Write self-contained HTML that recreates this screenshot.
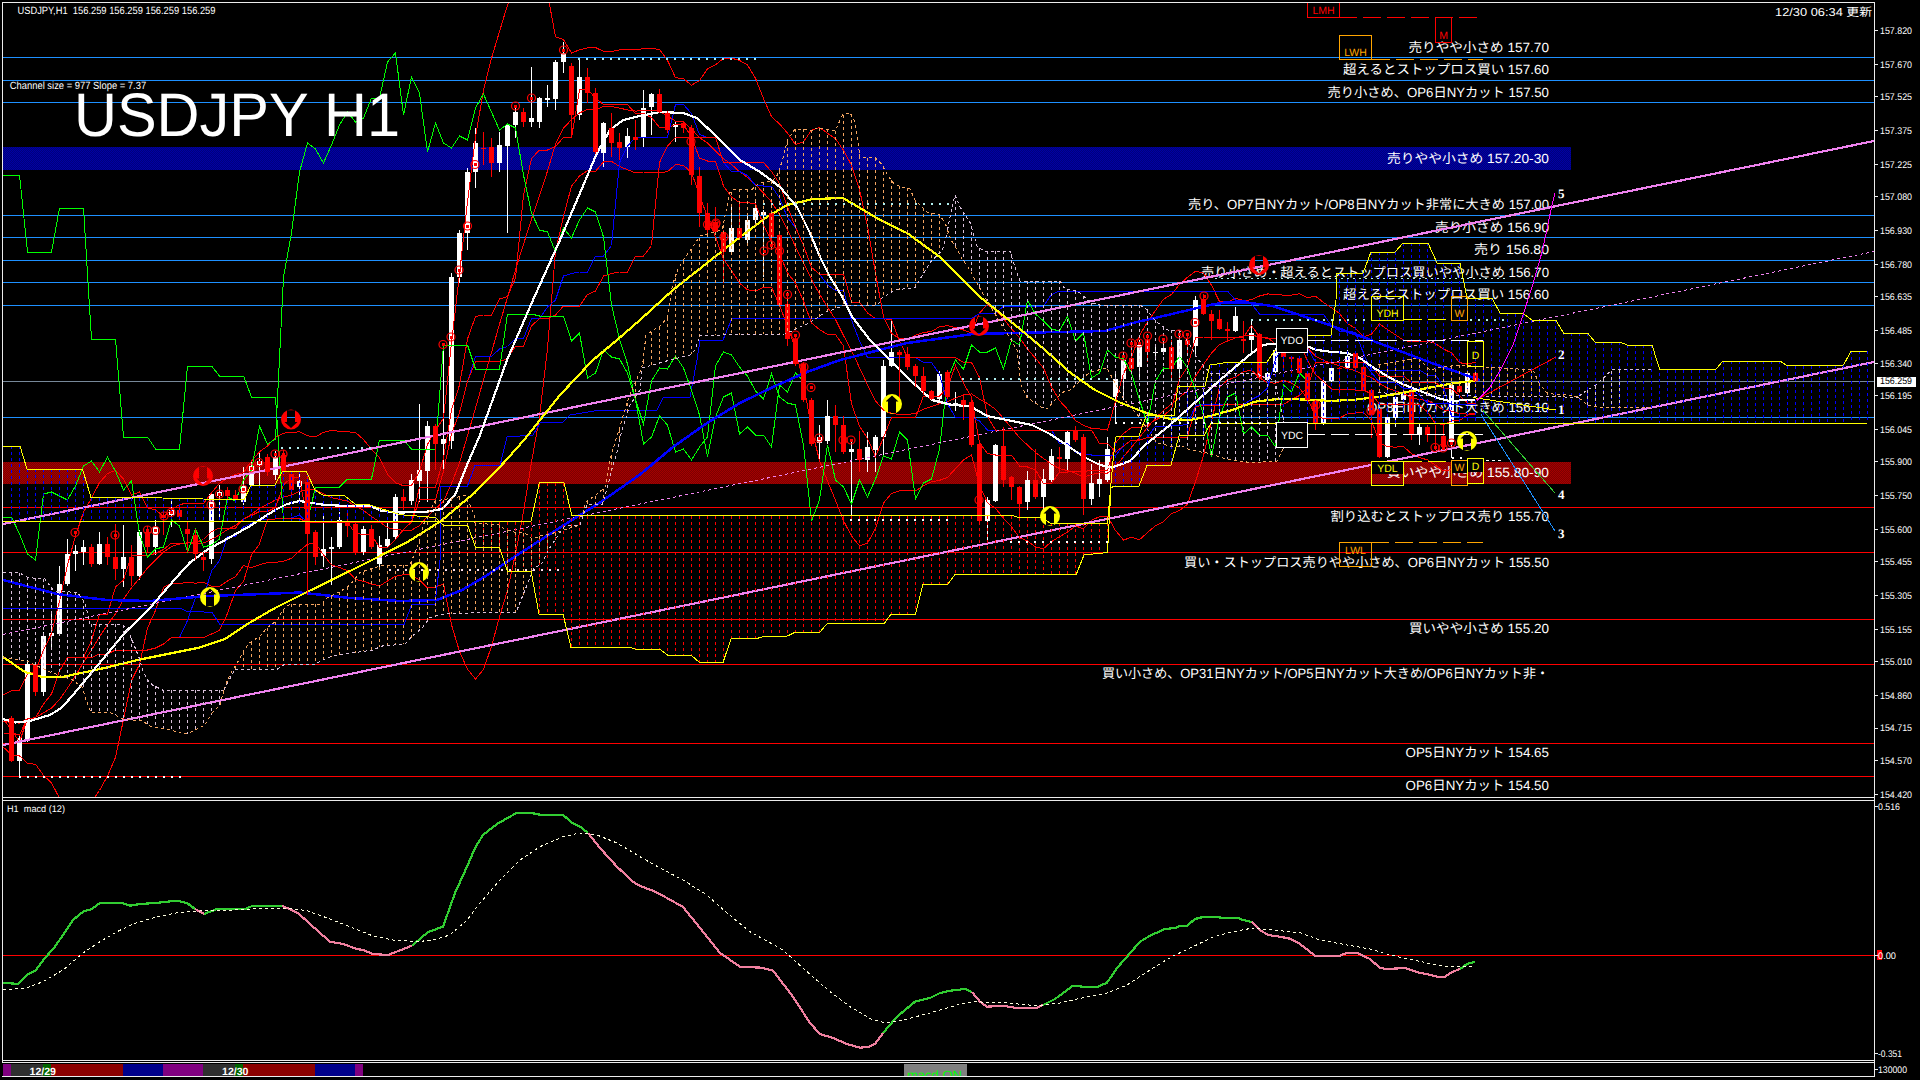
<!DOCTYPE html>
<html lang="ja"><head><meta charset="utf-8"><title>USDJPY H1</title>
<style>html,body{margin:0;padding:0;background:#000;overflow:hidden}svg{display:block}text{white-space:pre}</style></head>
<body>
<svg width="1920" height="1080" viewBox="0 0 1920 1080" shape-rendering="crispEdges" text-rendering="geometricPrecision">
<defs>
<pattern id="pb" width="2" height="2" patternUnits="userSpaceOnUse"><rect width="2" height="2" fill="#00007c"/><rect width="1" height="1" fill="#0000a4"/><rect x="1" y="1" width="1" height="1" fill="#0000a4"/></pattern>
<pattern id="pr" width="2" height="2" patternUnits="userSpaceOnUse"><rect width="2" height="2" fill="#7c0000"/><rect width="1" height="1" fill="#a40000"/><rect x="1" y="1" width="1" height="1" fill="#a40000"/></pattern>
<clipPath id="cm"><rect x="3" y="3" width="1871" height="794"/></clipPath>
<clipPath id="cs"><rect x="3" y="801" width="1871" height="259"/></clipPath>
</defs>
<rect width="1920" height="1080" fill="#000"/>
<g clip-path="url(#cm)">
<rect x="3" y="147" width="1568" height="23" fill="url(#pb)"/>
<rect x="3" y="462" width="1568" height="22" fill="url(#pr)"/>
<text x="1408.5" y="51.5" font-size="13.3" fill="#fff" text-anchor="start" font-weight="normal" style="font-family:&quot;Liberation Sans&quot;,&quot;Noto Sans CJK JP&quot;,sans-serif" textLength="140.5" lengthAdjust="spacingAndGlyphs">売りやや小さめ 157.70</text>
<text x="1343" y="74.1" font-size="13.3" fill="#fff" text-anchor="start" font-weight="normal" style="font-family:&quot;Liberation Sans&quot;,&quot;Noto Sans CJK JP&quot;,sans-serif" textLength="206" lengthAdjust="spacingAndGlyphs">超えるとストップロス買い 157.60</text>
<text x="1327.5" y="96.5" font-size="13.3" fill="#fff" text-anchor="start" font-weight="normal" style="font-family:&quot;Liberation Sans&quot;,&quot;Noto Sans CJK JP&quot;,sans-serif" textLength="221.5" lengthAdjust="spacingAndGlyphs">売り小さめ、OP6日NYカット 157.50</text>
<text x="1387" y="163.1" font-size="13.3" fill="#fff" text-anchor="start" font-weight="normal" style="font-family:&quot;Liberation Sans&quot;,&quot;Noto Sans CJK JP&quot;,sans-serif" textLength="162" lengthAdjust="spacingAndGlyphs">売りやや小さめ 157.20-30</text>
<text x="1188" y="209.1" font-size="13.3" fill="#fff" text-anchor="start" font-weight="normal" style="font-family:&quot;Liberation Sans&quot;,&quot;Noto Sans CJK JP&quot;,sans-serif" textLength="361" lengthAdjust="spacingAndGlyphs">売り、OP7日NYカット/OP8日NYカット非常に大きめ 157.00</text>
<text x="1435" y="231.5" font-size="13.3" fill="#fff" text-anchor="start" font-weight="normal" style="font-family:&quot;Liberation Sans&quot;,&quot;Noto Sans CJK JP&quot;,sans-serif" textLength="114" lengthAdjust="spacingAndGlyphs">売り小さめ 156.90</text>
<text x="1474" y="254.1" font-size="13.3" fill="#fff" text-anchor="start" font-weight="normal" style="font-family:&quot;Liberation Sans&quot;,&quot;Noto Sans CJK JP&quot;,sans-serif" textLength="75" lengthAdjust="spacingAndGlyphs">売り 156.80</text>
<text x="1201" y="276.5" font-size="13.3" fill="#fff" text-anchor="start" font-weight="normal" style="font-family:&quot;Liberation Sans&quot;,&quot;Noto Sans CJK JP&quot;,sans-serif" textLength="348" lengthAdjust="spacingAndGlyphs">売り小さめ・超えるとストップロス買いやや小さめ 156.70</text>
<text x="1343" y="299.1" font-size="13.3" fill="#fff" text-anchor="start" font-weight="normal" style="font-family:&quot;Liberation Sans&quot;,&quot;Noto Sans CJK JP&quot;,sans-serif" textLength="206" lengthAdjust="spacingAndGlyphs">超えるとストップロス買い 156.60</text>
<text x="1367" y="411.5" font-size="13.3" fill="#fff" text-anchor="start" font-weight="normal" style="font-family:&quot;Liberation Sans&quot;,&quot;Noto Sans CJK JP&quot;,sans-serif" textLength="182" lengthAdjust="spacingAndGlyphs">OP8日NYカット大きめ 156.10</text>
<text x="1387" y="477.1" font-size="13.3" fill="#fff" text-anchor="start" font-weight="normal" style="font-family:&quot;Liberation Sans&quot;,&quot;Noto Sans CJK JP&quot;,sans-serif" textLength="162" lengthAdjust="spacingAndGlyphs">買いやや小さめ 155.80-90</text>
<text x="1330.5" y="520.8" font-size="13.3" fill="#fff" text-anchor="start" font-weight="normal" style="font-family:&quot;Liberation Sans&quot;,&quot;Noto Sans CJK JP&quot;,sans-serif" textLength="218.5" lengthAdjust="spacingAndGlyphs">割り込むとストップロス売り 155.70</text>
<text x="1184" y="566.5" font-size="13.3" fill="#fff" text-anchor="start" font-weight="normal" style="font-family:&quot;Liberation Sans&quot;,&quot;Noto Sans CJK JP&quot;,sans-serif" textLength="365" lengthAdjust="spacingAndGlyphs">買い・ストップロス売りやや小さめ、OP6日NYカット 155.50</text>
<text x="1409" y="633.1" font-size="13.3" fill="#fff" text-anchor="start" font-weight="normal" style="font-family:&quot;Liberation Sans&quot;,&quot;Noto Sans CJK JP&quot;,sans-serif" textLength="140" lengthAdjust="spacingAndGlyphs">買いやや小さめ 155.20</text>
<text x="1102" y="678.1" font-size="13.3" fill="#fff" text-anchor="start" font-weight="normal" style="font-family:&quot;Liberation Sans&quot;,&quot;Noto Sans CJK JP&quot;,sans-serif" textLength="447" lengthAdjust="spacingAndGlyphs">買い小さめ、OP31日NYカット/OP5日NYカット大きめ/OP6日NYカット非・</text>
<text x="1405.5" y="757.1" font-size="13.3" fill="#fff" text-anchor="start" font-weight="normal" style="font-family:&quot;Liberation Sans&quot;,&quot;Noto Sans CJK JP&quot;,sans-serif" textLength="143.5" lengthAdjust="spacingAndGlyphs">OP5日NYカット 154.65</text>
<text x="1405.5" y="790.1" font-size="13.3" fill="#fff" text-anchor="start" font-weight="normal" style="font-family:&quot;Liberation Sans&quot;,&quot;Noto Sans CJK JP&quot;,sans-serif" textLength="143.5" lengthAdjust="spacingAndGlyphs">OP6日NYカット 154.50</text>
<rect x="3" y="57" width="1871" height="1" fill="#1E90FF"/>
<rect x="3" y="80" width="1871" height="1" fill="#1E90FF"/>
<rect x="3" y="102" width="1871" height="1" fill="#1E90FF"/>
<rect x="3" y="215" width="1871" height="1" fill="#1E90FF"/>
<rect x="3" y="237" width="1871" height="1" fill="#1E90FF"/>
<rect x="3" y="260" width="1871" height="1" fill="#1E90FF"/>
<rect x="3" y="282" width="1871" height="1" fill="#1E90FF"/>
<rect x="3" y="305" width="1871" height="1" fill="#1E90FF"/>
<rect x="3" y="417" width="1871" height="1" fill="#1E90FF"/>
<rect x="3" y="507" width="1871" height="1" fill="#ff0000"/>
<rect x="3" y="552" width="1871" height="1" fill="#ff0000"/>
<rect x="3" y="619" width="1871" height="1" fill="#ff0000"/>
<rect x="3" y="664" width="1871" height="1" fill="#ff0000"/>
<rect x="3" y="743" width="1871" height="1" fill="#ff0000"/>
<rect x="3" y="776" width="1871" height="1" fill="#ff0000"/>
<rect x="3" y="381" width="1871" height="1" fill="#778899"/>
<rect x="19" y="736" width="1" height="40" fill="#ffffff"/>
<rect x="17" y="738" width="5" height="23" fill="#ffffff"/>
<rect x="27" y="660" width="1" height="82" fill="#ffffff"/>
<rect x="25" y="664" width="5" height="76" fill="#ffffff"/>
<rect x="43" y="632" width="1" height="64" fill="#ffffff"/>
<rect x="41" y="636" width="5" height="56" fill="#ffffff"/>
<rect x="51" y="612" width="1" height="38" fill="#ffffff"/>
<rect x="49" y="633" width="5" height="3" fill="#ffffff"/>
<rect x="59" y="566" width="1" height="70" fill="#ffffff"/>
<rect x="57" y="584" width="5" height="50" fill="#ffffff"/>
<rect x="67" y="539" width="1" height="47" fill="#ffffff"/>
<rect x="65" y="554" width="5" height="30" fill="#ffffff"/>
<rect x="75" y="545" width="1" height="26" fill="#ffffff"/>
<rect x="73" y="551" width="5" height="3" fill="#ffffff"/>
<rect x="83" y="540" width="1" height="25" fill="#ffffff"/>
<rect x="81" y="547" width="5" height="5" fill="#ffffff"/>
<rect x="99" y="532" width="1" height="33" fill="#ffffff"/>
<rect x="97" y="544" width="5" height="20" fill="#ffffff"/>
<rect x="123" y="525" width="1" height="62" fill="#ffffff"/>
<rect x="121" y="557" width="5" height="12" fill="#ffffff"/>
<rect x="139" y="530" width="1" height="50" fill="#ffffff"/>
<rect x="137" y="532" width="5" height="44" fill="#ffffff"/>
<rect x="155" y="520" width="1" height="35" fill="#ffffff"/>
<rect x="153" y="527" width="5" height="20" fill="#ffffff"/>
<rect x="171" y="499" width="1" height="28" fill="#ffffff"/>
<rect x="169" y="510" width="5" height="5" fill="#ffffff"/>
<rect x="211" y="492" width="1" height="72" fill="#ffffff"/>
<rect x="209" y="494" width="5" height="65" fill="#ffffff"/>
<rect x="219" y="485" width="1" height="35" fill="#ffffff"/>
<rect x="217" y="492" width="5" height="4" fill="#ffffff"/>
<rect x="243" y="467" width="1" height="38" fill="#ffffff"/>
<rect x="241" y="486" width="5" height="16" fill="#ffffff"/>
<rect x="251" y="460" width="1" height="27" fill="#ffffff"/>
<rect x="249" y="466" width="5" height="19" fill="#ffffff"/>
<rect x="259" y="452" width="1" height="33" fill="#ffffff"/>
<rect x="257" y="461" width="5" height="4" fill="#ffffff"/>
<rect x="275" y="451" width="1" height="29" fill="#ffffff"/>
<rect x="273" y="457" width="5" height="18" fill="#ffffff"/>
<rect x="299" y="474" width="1" height="26" fill="#ffffff"/>
<rect x="297" y="481" width="5" height="6" fill="#ffffff"/>
<rect x="323" y="515" width="1" height="52" fill="#ffffff"/>
<rect x="321" y="549" width="5" height="7" fill="#ffffff"/>
<rect x="331" y="537" width="1" height="48" fill="#ffffff"/>
<rect x="329" y="547" width="5" height="2" fill="#ffffff"/>
<rect x="339" y="512" width="1" height="37" fill="#ffffff"/>
<rect x="337" y="520" width="5" height="27" fill="#ffffff"/>
<rect x="363" y="526" width="1" height="29" fill="#ffffff"/>
<rect x="361" y="529" width="5" height="23" fill="#ffffff"/>
<rect x="379" y="536" width="1" height="34" fill="#ffffff"/>
<rect x="377" y="545" width="5" height="19" fill="#ffffff"/>
<rect x="387" y="521" width="1" height="26" fill="#ffffff"/>
<rect x="385" y="539" width="5" height="7" fill="#ffffff"/>
<rect x="395" y="494" width="1" height="46" fill="#ffffff"/>
<rect x="393" y="497" width="5" height="40" fill="#ffffff"/>
<rect x="411" y="474" width="1" height="31" fill="#ffffff"/>
<rect x="409" y="480" width="5" height="21" fill="#ffffff"/>
<rect x="419" y="404" width="1" height="98" fill="#ffffff"/>
<rect x="417" y="470" width="5" height="11" fill="#ffffff"/>
<rect x="427" y="421" width="1" height="81" fill="#ffffff"/>
<rect x="425" y="426" width="5" height="45" fill="#ffffff"/>
<rect x="443" y="347" width="1" height="123" fill="#ffffff"/>
<rect x="441" y="439" width="5" height="5" fill="#ffffff"/>
<rect x="451" y="273" width="1" height="176" fill="#ffffff"/>
<rect x="449" y="277" width="5" height="164" fill="#ffffff"/>
<rect x="459" y="230" width="1" height="53" fill="#ffffff"/>
<rect x="457" y="233" width="5" height="44" fill="#ffffff"/>
<rect x="467" y="168" width="1" height="82" fill="#ffffff"/>
<rect x="465" y="172" width="5" height="61" fill="#ffffff"/>
<rect x="475" y="128" width="1" height="60" fill="#ffffff"/>
<rect x="473" y="143" width="5" height="29" fill="#ffffff"/>
<rect x="499" y="132" width="1" height="40" fill="#ffffff"/>
<rect x="497" y="145" width="5" height="18" fill="#ffffff"/>
<rect x="507" y="123" width="1" height="110" fill="#ffffff"/>
<rect x="505" y="125" width="5" height="21" fill="#ffffff"/>
<rect x="515" y="107" width="1" height="31" fill="#ffffff"/>
<rect x="513" y="112" width="5" height="13" fill="#ffffff"/>
<rect x="531" y="67" width="1" height="60" fill="#ffffff"/>
<rect x="529" y="118" width="5" height="4" fill="#ffffff"/>
<rect x="539" y="97" width="1" height="31" fill="#ffffff"/>
<rect x="537" y="98" width="5" height="24" fill="#ffffff"/>
<rect x="547" y="85" width="1" height="22" fill="#ffffff"/>
<rect x="545" y="98" width="5" height="2" fill="#ffffff"/>
<rect x="555" y="60" width="1" height="50" fill="#ffffff"/>
<rect x="553" y="62" width="5" height="37" fill="#ffffff"/>
<rect x="563" y="42" width="1" height="31" fill="#ffffff"/>
<rect x="561" y="53" width="5" height="9" fill="#ffffff"/>
<rect x="579" y="60" width="1" height="60" fill="#ffffff"/>
<rect x="577" y="77" width="5" height="38" fill="#ffffff"/>
<rect x="603" y="122" width="1" height="45" fill="#ffffff"/>
<rect x="601" y="123" width="5" height="30" fill="#ffffff"/>
<rect x="627" y="128" width="1" height="30" fill="#ffffff"/>
<rect x="625" y="136" width="5" height="11" fill="#ffffff"/>
<rect x="643" y="90" width="1" height="57" fill="#ffffff"/>
<rect x="641" y="108" width="5" height="30" fill="#ffffff"/>
<rect x="651" y="93" width="1" height="42" fill="#ffffff"/>
<rect x="649" y="94" width="5" height="13" fill="#ffffff"/>
<rect x="675" y="122" width="1" height="20" fill="#ffffff"/>
<rect x="673" y="124" width="5" height="3" fill="#ffffff"/>
<rect x="731" y="207" width="1" height="46" fill="#ffffff"/>
<rect x="729" y="228" width="5" height="24" fill="#ffffff"/>
<rect x="747" y="213" width="1" height="30" fill="#ffffff"/>
<rect x="745" y="220" width="5" height="20" fill="#ffffff"/>
<rect x="755" y="200" width="1" height="23" fill="#ffffff"/>
<rect x="753" y="208" width="5" height="12" fill="#ffffff"/>
<rect x="763" y="210" width="1" height="67" fill="#ffffff"/>
<rect x="761" y="212" width="5" height="3" fill="#ffffff"/>
<rect x="819" y="425" width="1" height="34" fill="#ffffff"/>
<rect x="817" y="437" width="5" height="6" fill="#ffffff"/>
<rect x="827" y="400" width="1" height="44" fill="#ffffff"/>
<rect x="825" y="416" width="5" height="25" fill="#ffffff"/>
<rect x="851" y="440" width="1" height="75" fill="#ffffff"/>
<rect x="849" y="449" width="5" height="3" fill="#ffffff"/>
<rect x="867" y="432" width="1" height="40" fill="#ffffff"/>
<rect x="865" y="447" width="5" height="13" fill="#ffffff"/>
<rect x="875" y="435" width="1" height="37" fill="#ffffff"/>
<rect x="873" y="437" width="5" height="13" fill="#ffffff"/>
<rect x="883" y="360" width="1" height="95" fill="#ffffff"/>
<rect x="881" y="366" width="5" height="71" fill="#ffffff"/>
<rect x="891" y="320" width="1" height="47" fill="#ffffff"/>
<rect x="889" y="352" width="5" height="14" fill="#ffffff"/>
<rect x="939" y="371" width="1" height="31" fill="#ffffff"/>
<rect x="937" y="374" width="5" height="25" fill="#ffffff"/>
<rect x="955" y="392" width="1" height="19" fill="#ffffff"/>
<rect x="953" y="403" width="5" height="3" fill="#ffffff"/>
<rect x="987" y="497" width="1" height="43" fill="#ffffff"/>
<rect x="985" y="500" width="5" height="21" fill="#ffffff"/>
<rect x="995" y="444" width="1" height="58" fill="#ffffff"/>
<rect x="993" y="445" width="5" height="56" fill="#ffffff"/>
<rect x="1027" y="471" width="1" height="39" fill="#ffffff"/>
<rect x="1025" y="480" width="5" height="22" fill="#ffffff"/>
<rect x="1043" y="469" width="1" height="40" fill="#ffffff"/>
<rect x="1041" y="479" width="5" height="18" fill="#ffffff"/>
<rect x="1051" y="449" width="1" height="33" fill="#ffffff"/>
<rect x="1049" y="456" width="5" height="24" fill="#ffffff"/>
<rect x="1067" y="431" width="1" height="39" fill="#ffffff"/>
<rect x="1065" y="432" width="5" height="27" fill="#ffffff"/>
<rect x="1091" y="464" width="1" height="41" fill="#ffffff"/>
<rect x="1089" y="483" width="5" height="16" fill="#ffffff"/>
<rect x="1099" y="460" width="1" height="37" fill="#ffffff"/>
<rect x="1097" y="479" width="5" height="5" fill="#ffffff"/>
<rect x="1107" y="437" width="1" height="45" fill="#ffffff"/>
<rect x="1105" y="449" width="5" height="31" fill="#ffffff"/>
<rect x="1115" y="371" width="1" height="53" fill="#ffffff"/>
<rect x="1113" y="379" width="5" height="18" fill="#ffffff"/>
<rect x="1123" y="352" width="1" height="48" fill="#ffffff"/>
<rect x="1121" y="360" width="5" height="19" fill="#ffffff"/>
<rect x="1139" y="340" width="1" height="37" fill="#ffffff"/>
<rect x="1137" y="345" width="5" height="22" fill="#ffffff"/>
<rect x="1155" y="345" width="1" height="15" fill="#ffffff"/>
<rect x="1153" y="352" width="5" height="1" fill="#ffffff"/>
<rect x="1163" y="339" width="1" height="16" fill="#ffffff"/>
<rect x="1161" y="348" width="5" height="4" fill="#ffffff"/>
<rect x="1179" y="334" width="1" height="46" fill="#ffffff"/>
<rect x="1177" y="340" width="5" height="29" fill="#ffffff"/>
<rect x="1195" y="296" width="1" height="61" fill="#ffffff"/>
<rect x="1193" y="300" width="5" height="46" fill="#ffffff"/>
<rect x="1235" y="307" width="1" height="25" fill="#ffffff"/>
<rect x="1233" y="316" width="5" height="15" fill="#ffffff"/>
<rect x="1251" y="319" width="1" height="33" fill="#ffffff"/>
<rect x="1249" y="333" width="5" height="7" fill="#ffffff"/>
<rect x="1267" y="372" width="1" height="9" fill="#ffffff"/>
<rect x="1265" y="373" width="5" height="7" fill="#ffffff"/>
<rect x="1275" y="348" width="1" height="25" fill="#ffffff"/>
<rect x="1273" y="350" width="5" height="22" fill="#ffffff"/>
<rect x="1323" y="380" width="1" height="45" fill="#ffffff"/>
<rect x="1321" y="381" width="5" height="43" fill="#ffffff"/>
<rect x="1331" y="367" width="1" height="15" fill="#ffffff"/>
<rect x="1329" y="368" width="5" height="13" fill="#ffffff"/>
<rect x="1347" y="350" width="1" height="20" fill="#ffffff"/>
<rect x="1345" y="356" width="5" height="12" fill="#ffffff"/>
<rect x="1387" y="416" width="1" height="42" fill="#ffffff"/>
<rect x="1385" y="417" width="5" height="40" fill="#ffffff"/>
<rect x="1395" y="396" width="1" height="31" fill="#ffffff"/>
<rect x="1393" y="397" width="5" height="21" fill="#ffffff"/>
<rect x="1403" y="392" width="1" height="10" fill="#ffffff"/>
<rect x="1401" y="393" width="5" height="7" fill="#ffffff"/>
<rect x="1419" y="424" width="1" height="21" fill="#ffffff"/>
<rect x="1417" y="427" width="5" height="8" fill="#ffffff"/>
<rect x="1451" y="384" width="1" height="74" fill="#ffffff"/>
<rect x="1449" y="385" width="5" height="57" fill="#ffffff"/>
<rect x="1467" y="372" width="1" height="22" fill="#ffffff"/>
<rect x="1465" y="373" width="5" height="20" fill="#ffffff"/>
<polyline points="3.5,695.0 11.5,690.6 19.5,690.4 27.5,674.2 35.5,670.8 43.5,650.1 51.5,633.4 59.5,601.1 67.5,565.0 75.5,535.9 83.5,512.2 91.5,498.1 99.5,482.6 107.5,473.5 115.5,470.4 123.5,479.0 131.5,495.0 139.5,491.9 147.5,507.8 155.5,509.8 163.5,516.5 171.5,509.9 179.5,504.5 187.5,503.2 195.5,503.3 203.5,503.6 211.5,492.7 219.5,483.3 227.5,478.2 235.5,474.4 243.5,472.6 251.5,461.2 259.5,451.8 267.5,446.0 275.5,437.4 283.5,433.2 291.5,432.2 299.5,431.9 307.5,435.8 315.5,436.7 323.5,432.4 331.5,430.5 339.5,431.3 347.5,431.8 355.5,432.4 363.5,439.6 371.5,449.1 379.5,457.7 387.5,474.2 395.5,482.7 403.5,485.8 411.5,485.4 419.5,471.3 427.5,444.5 435.5,430.5 443.5,418.3 451.5,342.7 459.5,274.1 467.5,202.1 475.5,137.0 483.5,90.0 491.5,58.2 499.5,31.5 507.5,5.0 515.5,-14.1 523.5,-23.3 531.5,-23.9 539.5,-25.3 547.5,-6.6 555.5,36.8 563.5,39.7 571.5,53.1 579.5,49.8 587.5,47.8 595.5,47.5 603.5,51.4 611.5,51.6 619.5,49.9 627.5,49.9 635.5,49.4 643.5,48.8 651.5,48.3 659.5,49.6 667.5,60.3 675.5,77.7 683.5,78.6 691.5,85.3 699.5,80.5 707.5,68.9 715.5,64.8 723.5,58.3 731.5,58.2 739.5,60.4 747.5,65.0 755.5,78.2 763.5,98.6 771.5,116.7 779.5,123.9 787.5,133.1 795.5,144.6 803.5,141.8 811.5,130.2 819.5,127.4 827.5,133.3 835.5,138.6 843.5,150.3 851.5,165.2 859.5,189.5 867.5,226.4 875.5,273.2 883.5,317.1 891.5,333.4 899.5,338.5 907.5,339.2 915.5,335.2 923.5,332.6 931.5,331.4 939.5,326.8 947.5,325.7 955.5,327.5 963.5,330.0 971.5,332.9 979.5,313.0 987.5,304.5 995.5,310.3 1003.5,318.7 1011.5,328.9 1019.5,337.6 1027.5,349.1 1035.5,358.2 1043.5,368.0 1051.5,386.8 1059.5,400.6 1067.5,409.3 1075.5,420.5 1083.5,425.3 1091.5,428.4 1099.5,429.0 1107.5,430.0 1115.5,401.3 1123.5,373.7 1131.5,357.1 1139.5,335.5 1147.5,322.0 1155.5,310.4 1163.5,299.3 1171.5,294.4 1179.5,284.4 1187.5,277.2 1195.5,271.3 1203.5,273.1 1211.5,285.2 1219.5,301.5 1227.5,302.1 1235.5,298.5 1243.5,300.4 1251.5,299.8 1259.5,296.0 1267.5,294.0 1275.5,294.1 1283.5,295.2 1291.5,295.1 1299.5,293.8 1307.5,297.8 1315.5,296.1 1323.5,302.5 1331.5,307.8 1339.5,313.5 1347.5,323.7 1355.5,328.3 1363.5,336.9 1371.5,334.2 1379.5,324.0 1387.5,329.5 1395.5,334.9 1403.5,340.2 1411.5,342.0 1419.5,341.9 1427.5,341.1 1435.5,343.6 1443.5,349.1 1451.5,352.8 1459.5,362.6 1467.5,364.2 1475.5,362.1" fill="none" stroke="#ff0000" stroke-width="1"/>
<polyline points="3.5,721.1 11.5,722.6 19.5,723.1 27.5,718.9 35.5,717.5 43.5,712.8 51.5,708.1 59.5,699.6 67.5,688.1 75.5,675.8 83.5,662.3 91.5,649.9 99.5,636.6 107.5,624.8 115.5,613.9 123.5,599.3 131.5,587.7 139.5,578.3 147.5,567.9 155.5,560.1 163.5,551.9 171.5,546.6 179.5,544.0 187.5,542.8 195.5,543.3 203.5,543.0 211.5,539.4 219.5,534.8 227.5,529.6 235.5,525.5 243.5,519.1 251.5,514.4 259.5,508.2 267.5,504.3 275.5,499.9 283.5,497.1 291.5,495.2 299.5,491.4 307.5,490.0 315.5,489.8 323.5,493.7 331.5,497.6 339.5,499.4 347.5,501.2 355.5,505.9 363.5,510.4 371.5,516.6 379.5,521.8 387.5,527.6 395.5,529.5 403.5,530.3 411.5,530.2 419.5,525.6 427.5,516.3 435.5,508.8 443.5,501.1 451.5,483.7 459.5,462.8 467.5,435.6 475.5,408.1 483.5,379.6 491.5,352.4 499.5,324.2 507.5,297.6 515.5,269.9 523.5,244.3 531.5,219.1 539.5,195.7 547.5,171.0 555.5,144.1 563.5,128.1 571.5,119.6 579.5,112.9 587.5,109.3 595.5,109.5 603.5,106.6 611.5,106.5 619.5,108.1 627.5,109.9 635.5,111.1 643.5,110.4 651.5,110.1 659.5,111.1 667.5,116.0 675.5,121.1 683.5,122.0 691.5,129.0 699.5,137.6 707.5,143.1 715.5,150.9 723.5,158.7 731.5,164.4 739.5,171.7 747.5,177.4 755.5,184.6 763.5,193.0 771.5,201.9 779.5,214.4 787.5,229.8 795.5,246.6 803.5,262.7 811.5,279.2 819.5,294.0 827.5,307.1 835.5,319.5 843.5,335.5 851.5,350.6 859.5,367.7 867.5,384.8 875.5,400.9 883.5,410.1 891.5,413.4 899.5,414.6 907.5,414.8 915.5,413.1 923.5,409.3 931.5,406.6 939.5,403.6 947.5,401.6 955.5,398.1 963.5,394.9 971.5,393.9 979.5,399.1 987.5,403.6 995.5,409.3 1003.5,418.4 1011.5,427.9 1019.5,437.6 1027.5,445.1 1035.5,452.6 1043.5,458.4 1051.5,464.2 1059.5,468.6 1067.5,470.7 1075.5,473.2 1083.5,477.1 1091.5,474.4 1099.5,472.9 1107.5,473.1 1115.5,465.9 1123.5,456.9 1131.5,447.2 1139.5,437.6 1147.5,427.2 1155.5,418.1 1163.5,410.4 1171.5,404.0 1179.5,397.4 1187.5,390.6 1195.5,376.4 1203.5,364.4 1211.5,353.1 1219.5,344.5 1227.5,341.1 1235.5,337.9 1243.5,335.9 1251.5,335.1 1259.5,336.9 1267.5,338.4 1275.5,338.6 1283.5,337.7 1291.5,339.1 1299.5,341.1 1307.5,348.2 1315.5,356.1 1323.5,360.4 1331.5,363.1 1339.5,365.9 1347.5,368.7 1355.5,370.6 1363.5,374.7 1371.5,377.4 1379.5,383.4 1387.5,388.1 1395.5,391.0 1403.5,393.4 1411.5,397.8 1419.5,399.7 1427.5,400.5 1435.5,404.4 1443.5,410.0 1451.5,411.1 1459.5,413.7 1467.5,414.1 1475.5,413.4" fill="none" stroke="#ff0000" stroke-width="1"/>
<polyline points="3.5,747.3 11.5,754.7 19.5,755.8 27.5,763.6 35.5,764.2 43.5,775.4 51.5,782.9 59.5,798.1 67.5,811.3 75.5,815.7 83.5,812.4 91.5,801.7 99.5,790.5 107.5,776.0 115.5,757.3 123.5,719.6 131.5,680.4 139.5,664.7 147.5,628.1 155.5,610.5 163.5,587.3 171.5,583.4 179.5,583.5 187.5,582.3 195.5,583.2 203.5,582.4 211.5,586.2 219.5,586.3 227.5,581.0 235.5,576.6 243.5,565.6 251.5,567.6 259.5,564.7 267.5,562.6 275.5,562.5 283.5,561.1 291.5,558.3 299.5,551.0 307.5,544.2 315.5,542.9 323.5,555.0 331.5,564.7 339.5,567.4 347.5,570.7 355.5,579.4 363.5,581.3 371.5,584.0 379.5,585.9 387.5,581.1 395.5,576.3 403.5,574.8 411.5,575.0 419.5,580.0 427.5,588.1 435.5,587.0 443.5,583.9 451.5,624.8 459.5,651.4 467.5,669.2 475.5,679.1 483.5,669.3 491.5,646.5 499.5,616.9 507.5,590.3 515.5,553.8 523.5,511.9 531.5,462.2 539.5,416.8 547.5,348.6 555.5,251.4 563.5,216.4 571.5,186.2 579.5,175.9 587.5,170.8 595.5,171.5 603.5,161.9 611.5,161.4 619.5,166.4 627.5,169.8 635.5,172.9 643.5,172.0 651.5,172.0 659.5,172.7 667.5,171.7 675.5,164.5 683.5,165.4 691.5,172.7 699.5,194.7 707.5,217.4 715.5,237.0 723.5,259.1 731.5,270.7 739.5,283.0 747.5,289.8 755.5,291.0 763.5,287.4 771.5,287.2 779.5,305.0 787.5,326.5 795.5,348.6 803.5,383.6 811.5,428.3 819.5,460.6 827.5,481.0 835.5,500.4 843.5,520.7 851.5,536.0 859.5,545.9 867.5,543.2 875.5,528.6 883.5,503.0 891.5,493.5 899.5,490.7 907.5,490.3 915.5,490.9 923.5,485.9 931.5,481.8 939.5,480.4 947.5,477.5 955.5,468.7 963.5,459.9 971.5,454.9 979.5,485.3 987.5,502.8 995.5,508.3 1003.5,518.2 1011.5,526.8 1019.5,537.7 1027.5,541.0 1035.5,547.1 1043.5,548.7 1051.5,541.6 1059.5,536.7 1067.5,532.1 1075.5,525.9 1083.5,528.8 1091.5,520.3 1099.5,516.7 1107.5,516.3 1115.5,530.5 1123.5,540.0 1131.5,537.3 1139.5,539.7 1147.5,532.5 1155.5,525.8 1163.5,521.6 1171.5,513.6 1179.5,510.5 1187.5,504.1 1195.5,481.6 1203.5,455.7 1211.5,421.0 1219.5,387.5 1227.5,380.0 1235.5,377.3 1243.5,371.5 1251.5,370.3 1259.5,377.8 1267.5,382.8 1275.5,383.1 1283.5,380.3 1291.5,383.0 1299.5,388.3 1307.5,398.6 1315.5,416.1 1323.5,418.3 1331.5,418.4 1339.5,418.2 1347.5,413.7 1355.5,413.0 1363.5,412.5 1371.5,420.5 1379.5,442.7 1387.5,446.8 1395.5,447.1 1403.5,446.7 1411.5,453.6 1419.5,457.5 1427.5,459.9 1435.5,465.2 1443.5,470.9 1451.5,469.5 1459.5,464.8 1467.5,464.0 1475.5,464.8" fill="none" stroke="#ff0000" stroke-width="1"/>
<polyline points="3.5,719.0 11.5,730.0 19.5,742.0 27.5,718.0 35.5,718.0 43.5,704.0 51.5,694.0 59.5,671.0 67.5,657.5 75.5,657.5 83.5,657.5 91.5,640.5 99.5,614.0 107.5,614.0 115.5,587.0 123.5,580.0 131.5,555.5 139.5,555.5 147.5,555.5 155.5,553.5 163.5,549.5 171.5,543.0 179.5,543.0 187.5,543.0 195.5,542.5 203.5,539.5 211.5,531.5 219.5,528.0 227.5,528.0 235.5,528.0 243.5,519.0 251.5,515.5 259.5,511.5 267.5,511.5 275.5,507.5 283.5,485.0 291.5,477.5 299.5,477.5 307.5,522.5 315.5,522.5 323.5,522.5 331.5,522.5 339.5,522.5 347.5,522.5 355.5,533.5 363.5,534.5 371.5,535.0 379.5,547.5 387.5,547.5 395.5,539.5 403.5,529.5 411.5,522.0 419.5,487.0 427.5,487.0 435.5,487.0 443.5,458.5 451.5,410.0 459.5,385.0 467.5,339.0 475.5,316.5 483.5,315.0 491.5,315.0 499.5,299.0 507.5,296.5 515.5,278.0 523.5,195.0 531.5,158.5 539.5,150.0 547.5,150.0 555.5,146.5 563.5,137.5 571.5,137.5 579.5,90.0 587.5,89.5 595.5,98.0 603.5,104.5 611.5,104.5 619.5,104.5 627.5,104.5 635.5,113.5 643.5,113.5 651.5,117.5 659.5,127.5 667.5,128.0 675.5,124.5 683.5,124.5 691.5,137.0 699.5,158.0 707.5,161.0 715.5,161.0 723.5,186.0 731.5,197.0 739.5,202.5 747.5,202.5 755.5,204.0 763.5,225.0 771.5,241.5 779.5,253.5 787.5,273.0 795.5,283.0 803.5,301.0 811.5,323.0 819.5,329.5 827.5,334.5 835.5,334.5 843.5,346.0 851.5,404.0 859.5,426.0 867.5,438.5 875.5,456.5 883.5,437.5 891.5,417.5 899.5,417.5 907.5,417.5 915.5,417.5 923.5,396.0 931.5,396.0 939.5,396.0 947.5,387.5 955.5,365.5 963.5,383.5 971.5,397.0 979.5,443.0 987.5,453.5 995.5,455.0 1003.5,455.0 1011.5,455.0 1019.5,466.0 1027.5,467.0 1035.5,470.0 1043.5,483.5 1051.5,483.5 1059.5,472.0 1067.5,472.0 1075.5,471.5 1083.5,471.5 1091.5,470.5 1099.5,470.5 1107.5,470.5 1115.5,443.0 1123.5,433.5 1131.5,427.5 1139.5,427.5 1147.5,425.0 1155.5,420.0 1163.5,416.0 1171.5,408.5 1179.5,379.0 1187.5,367.0 1195.5,338.0 1203.5,337.0 1211.5,337.0 1219.5,337.0 1227.5,337.0 1235.5,337.0 1243.5,337.0 1251.5,325.5 1259.5,337.0 1267.5,337.5 1275.5,344.0 1283.5,344.0 1291.5,344.0 1299.5,344.0 1307.5,360.5 1315.5,374.5 1323.5,381.5 1331.5,389.0 1339.5,389.0 1347.5,389.0 1355.5,390.0 1363.5,390.0 1371.5,394.0 1379.5,404.0 1387.5,404.0 1395.5,404.0 1403.5,404.0 1411.5,404.0 1419.5,405.0 1427.5,412.0 1435.5,423.5 1443.5,424.5 1451.5,421.0 1459.5,420.5 1467.5,415.0 1475.5,414.0" fill="none" stroke="#ff0000" stroke-width="1"/>
<polyline points="3.5,733.0 11.5,733.0 19.5,735.0 27.5,718.0 35.5,718.0 43.5,704.0 51.5,694.0 59.5,671.0 67.5,657.5 75.5,657.5 83.5,657.5 91.5,657.5 99.5,654.0 107.5,654.0 115.5,650.0 123.5,650.0 131.5,650.0 139.5,650.0 147.5,650.0 155.5,648.0 163.5,644.0 171.5,637.5 179.5,637.5 187.5,620.5 195.5,597.5 203.5,597.5 211.5,571.0 219.5,560.5 227.5,536.0 235.5,536.0 243.5,527.0 251.5,523.5 259.5,519.5 267.5,519.5 275.5,519.0 283.5,518.5 291.5,518.0 299.5,515.0 307.5,522.5 315.5,522.5 323.5,522.5 331.5,522.5 339.5,522.5 347.5,522.5 355.5,522.5 363.5,522.5 371.5,522.5 379.5,522.5 387.5,522.5 395.5,522.5 403.5,522.5 411.5,522.5 419.5,499.5 427.5,499.5 435.5,499.5 443.5,471.0 451.5,434.0 459.5,412.5 467.5,381.5 475.5,356.5 483.5,356.5 491.5,356.5 499.5,349.0 507.5,346.5 515.5,338.5 523.5,338.5 531.5,318.5 539.5,318.5 547.5,307.0 555.5,300.0 563.5,276.0 571.5,273.5 579.5,272.0 587.5,272.0 595.5,256.0 603.5,256.0 611.5,245.5 619.5,162.5 627.5,146.0 635.5,137.5 643.5,137.5 651.5,137.5 659.5,137.5 667.5,137.5 675.5,104.5 683.5,104.5 691.5,113.5 699.5,134.5 707.5,137.5 715.5,137.5 723.5,162.5 731.5,171.5 739.5,171.5 747.5,175.5 755.5,185.5 763.5,186.0 771.5,186.0 779.5,198.0 787.5,217.5 795.5,227.5 803.5,245.5 811.5,267.5 819.5,274.0 827.5,285.0 835.5,290.5 843.5,290.5 851.5,320.0 859.5,341.0 867.5,357.5 875.5,357.5 883.5,357.5 891.5,357.5 899.5,357.5 907.5,357.5 915.5,357.5 923.5,362.5 931.5,362.5 939.5,374.0 947.5,404.0 955.5,417.5 963.5,417.5 971.5,417.5 979.5,421.0 987.5,430.0 995.5,430.0 1003.5,430.0 1011.5,430.0 1019.5,430.0 1027.5,430.0 1035.5,430.0 1043.5,430.0 1051.5,430.0 1059.5,443.5 1067.5,443.5 1075.5,452.0 1083.5,453.5 1091.5,455.0 1099.5,455.0 1107.5,455.0 1115.5,455.5 1123.5,446.0 1131.5,440.0 1139.5,440.0 1147.5,437.5 1155.5,426.0 1163.5,426.0 1171.5,426.0 1179.5,425.5 1187.5,424.5 1195.5,405.5 1203.5,404.5 1211.5,404.5 1219.5,404.5 1227.5,404.5 1235.5,404.5 1243.5,404.5 1251.5,399.5 1259.5,395.5 1267.5,388.0 1275.5,359.0 1283.5,347.0 1291.5,337.5 1299.5,337.5 1307.5,348.0 1315.5,362.0 1323.5,362.0 1331.5,362.0 1339.5,362.0 1347.5,362.0 1355.5,362.0 1363.5,362.0 1371.5,372.5 1379.5,382.5 1387.5,382.5 1395.5,382.5 1403.5,388.5 1411.5,388.5 1419.5,395.5 1427.5,403.0 1435.5,403.0 1443.5,403.0 1451.5,404.0 1459.5,404.0 1467.5,404.0 1475.5,404.0" fill="none" stroke="#0000ff" stroke-width="1"/>
<polyline points="3.5,733.0 11.5,733.0 19.5,735.0 27.5,718.0 35.5,718.0 43.5,704.0 51.5,694.0 59.5,671.0 67.5,657.5 75.5,657.5 83.5,657.5 91.5,657.5 99.5,654.0 107.5,654.0 115.5,650.0 123.5,650.0 131.5,650.0 139.5,650.0 147.5,650.0 155.5,648.0 163.5,644.0 171.5,637.5 179.5,637.5 187.5,637.5 195.5,637.5 203.5,637.5 211.5,634.0 219.5,630.5 227.5,613.5 235.5,590.5 243.5,581.5 251.5,555.0 259.5,544.0 267.5,519.5 275.5,519.0 283.5,518.5 291.5,518.5 299.5,518.5 307.5,522.5 315.5,522.5 323.5,522.5 331.5,522.5 339.5,522.5 347.5,522.5 355.5,522.5 363.5,522.5 371.5,522.5 379.5,522.5 387.5,522.5 395.5,522.5 403.5,522.5 411.5,522.5 419.5,499.5 427.5,499.5 435.5,499.5 443.5,471.0 451.5,434.0 459.5,412.5 467.5,381.5 475.5,361.5 483.5,361.5 491.5,361.5 499.5,361.5 507.5,359.0 515.5,346.0 523.5,346.0 531.5,326.0 539.5,318.5 547.5,318.5 555.5,315.0 563.5,306.0 571.5,306.0 579.5,306.0 587.5,294.5 595.5,291.0 603.5,276.0 611.5,273.5 619.5,272.0 627.5,272.0 635.5,256.0 643.5,256.0 651.5,245.5 659.5,162.5 667.5,146.0 675.5,137.5 683.5,137.5 691.5,137.5 699.5,137.5 707.5,137.5 715.5,137.5 723.5,162.5 731.5,162.5 739.5,162.5 747.5,162.5 755.5,162.5 763.5,162.5 771.5,171.5 779.5,183.5 787.5,207.0 795.5,227.0 803.5,245.5 811.5,267.5 819.5,274.0 827.5,274.0 835.5,274.0 843.5,274.0 851.5,302.0 859.5,302.0 867.5,313.0 875.5,318.5 883.5,318.5 891.5,320.0 899.5,341.0 907.5,357.5 915.5,357.5 923.5,357.5 931.5,357.5 939.5,357.5 947.5,357.5 955.5,357.5 963.5,362.5 971.5,362.5 979.5,377.5 987.5,416.5 995.5,430.0 1003.5,430.0 1011.5,430.0 1019.5,430.0 1027.5,430.0 1035.5,430.0 1043.5,430.0 1051.5,430.0 1059.5,430.0 1067.5,430.0 1075.5,430.0 1083.5,430.0 1091.5,430.0 1099.5,443.5 1107.5,443.5 1115.5,452.0 1123.5,446.0 1131.5,440.0 1139.5,440.0 1147.5,437.5 1155.5,437.5 1163.5,437.5 1171.5,437.5 1179.5,437.0 1187.5,437.0 1195.5,406.5 1203.5,405.5 1211.5,405.5 1219.5,405.5 1227.5,404.5 1235.5,404.5 1243.5,404.5 1251.5,404.5 1259.5,404.5 1267.5,404.5 1275.5,404.5 1283.5,404.5 1291.5,399.5 1299.5,395.5 1307.5,388.0 1315.5,362.0 1323.5,362.0 1331.5,362.0 1339.5,362.0 1347.5,362.0 1355.5,362.0 1363.5,362.0 1371.5,366.0 1379.5,376.0 1387.5,376.0 1395.5,376.0 1403.5,376.0 1411.5,382.5 1419.5,382.5 1427.5,382.5 1435.5,382.5 1443.5,388.5 1451.5,388.5 1459.5,395.5 1467.5,403.0 1475.5,403.0" fill="none" stroke="#ff0000" stroke-width="1"/>
<polyline points="3.0,608.0 180.0,608.0 186.0,611.0 212.0,612.5 220.0,624.5 404.0,624.5 412.0,604.0 435.0,604.0 440.0,560.0 440.0,486.0 467.5,486.0 475.0,465.6 500.0,465.6 507.0,437.0 533.0,435.0 540.0,423.0 563.0,422.0 570.0,415.0 600.0,410.0 657.0,410.0 663.0,398.0 690.0,397.0 697.0,360.0 700.0,340.0 723.0,340.0 730.0,323.0 731.5,318.5 739.5,318.5 747.5,318.5 755.5,318.5 763.5,318.5 771.5,318.5 779.5,318.5 787.5,318.5 795.5,318.5 803.5,318.5 811.5,318.5 819.5,318.5 827.5,318.5 835.5,318.5 843.5,318.5 851.5,318.5 859.5,318.5 867.5,318.5 875.5,318.5 883.5,318.5 891.5,318.5 899.5,318.5 907.5,318.5 915.5,318.5 923.5,318.5 931.5,318.5 939.5,318.5 947.5,318.5 955.5,318.5 963.5,318.5 971.5,318.5 979.5,313.5 987.5,313.5 995.5,313.5 1003.5,306.0 1011.5,306.0 1019.5,306.0 1027.5,306.0 1035.5,306.0 1043.5,306.0 1051.5,294.5 1059.5,291.0 1067.5,291.0 1075.5,291.0 1083.5,291.0 1091.5,291.0 1099.5,291.0 1107.5,291.0 1115.5,291.0 1123.5,291.0 1131.5,291.0 1139.5,291.0 1147.5,291.0 1155.5,291.0 1163.5,291.0 1171.5,291.0 1179.5,291.0 1187.5,291.0 1195.5,291.0 1203.5,291.0 1211.5,291.0 1219.5,291.0 1227.5,291.0 1235.5,300.0 1243.5,300.0 1251.5,304.0 1259.5,314.0 1267.5,314.5 1275.5,314.5 1283.5,314.5 1291.5,314.5 1299.5,314.5 1307.5,314.5 1315.5,314.5 1323.5,314.5 1331.5,325.5 1339.5,331.0 1347.5,331.0 1355.5,332.5 1363.5,353.5 1371.5,370.0 1379.5,370.0 1387.5,370.0 1395.5,370.0 1403.5,370.0 1411.5,370.0 1419.5,370.0 1427.5,375.0 1435.5,375.0 1443.5,386.5 1451.5,416.5 1459.5,417.0 1467.5,417.0 1475.5,417.0" fill="none" stroke="#0000ff" stroke-width="1"/>
<polyline points="3.0,517.0 11.5,517.0 19.5,534.0 27.5,554.0 35.5,560.0 43.5,494.0 51.5,492.0 59.5,496.0 67.5,500.0 75.5,486.0 83.5,466.0 91.5,461.0 99.5,472.0 107.5,457.0 115.5,471.0 123.5,490.0 131.5,481.0 139.5,534.0 147.5,557.0 155.5,549.0 163.5,547.0 171.5,520.0 179.5,526.0 187.5,552.0 195.5,529.0 203.5,547.0 211.5,545.0 219.5,539.0 227.5,497.0 235.5,501.0 243.5,480.0 251.5,470.0 259.5,426.0 267.5,444.0 275.5,439.0 283.5,277.0 291.5,233.0 299.5,172.0 307.5,143.0 315.5,149.0 323.5,163.0 331.5,145.0 339.5,125.0 347.5,112.0 355.5,122.0 363.5,118.0 371.5,98.0 379.5,98.0 387.5,62.0 395.5,53.0 403.5,115.0 411.5,77.0 419.5,93.0 427.5,152.0 435.5,123.0 443.5,143.0 451.5,148.0 459.5,136.0 467.5,140.0 475.5,108.0 483.5,94.0 491.5,112.0 499.5,130.0 507.5,124.0 515.5,128.0 523.5,175.0 531.5,213.0 539.5,230.0 547.5,232.0 555.5,252.0 563.5,228.0 571.5,238.0 579.5,220.0 587.5,208.0 595.5,212.0 603.5,237.0 611.5,305.0 619.5,339.0 627.5,364.0 635.5,400.0 643.5,444.0 651.5,437.0 659.5,416.0 667.5,425.0 675.5,452.0 683.5,449.0 691.5,460.0 699.5,447.0 707.5,437.0 715.5,366.0 723.5,352.0 731.5,355.0 739.5,367.0 747.5,376.0 755.5,391.0 763.5,399.0 771.5,374.0 779.5,397.0 787.5,403.0 795.5,405.0 803.5,445.0 811.5,521.0 819.5,500.0 827.5,445.0 835.5,480.0 843.5,487.0 851.5,504.0 859.5,480.0 867.5,497.0 875.5,479.0 883.5,456.0 891.5,459.0 899.5,432.0 907.5,440.0 915.5,499.0 923.5,483.0 931.5,479.0 939.5,449.0 947.5,379.0 955.5,360.0 963.5,369.0 971.5,345.0 979.5,352.0 987.5,352.0 995.5,348.0 1003.5,369.0 1011.5,340.0 1019.5,345.0 1027.5,300.0 1035.5,314.0 1043.5,321.0 1051.5,329.0 1059.5,331.0 1067.5,316.0 1075.5,341.0 1083.5,333.0 1091.5,378.0 1099.5,373.0 1107.5,350.0 1115.5,357.0 1123.5,359.0 1131.5,373.0 1139.5,400.0 1147.5,424.0 1155.5,381.0 1163.5,368.0 1171.5,369.0 1179.5,356.0 1187.5,368.0 1195.5,390.0 1203.5,415.0 1211.5,457.0 1219.5,417.0 1227.5,397.0 1235.5,393.0 1243.5,434.0 1251.5,427.0 1259.5,435.0 1267.5,435.0 1275.5,447.0 1283.5,385.0 1291.5,392.0 1299.5,373.0 1307.5,381.0" fill="none" stroke="#00ff00" stroke-width="1"/>
<polyline points="3.0,175.0 11.5,175.0 19.5,175.0 27.5,252.0 35.5,252.0 43.5,252.0 51.5,252.0 59.5,208.0 67.5,208.0 75.5,208.0 83.5,208.0 91.5,339.0 99.5,339.0 107.5,339.0 115.5,339.0 123.5,437.0 131.5,437.0 139.5,437.0 147.5,437.0 155.5,449.0 163.5,449.0 171.5,449.0 179.5,449.0 187.5,366.0 195.5,366.0 203.5,366.0 211.5,366.0 219.5,376.0 227.5,376.0 235.5,376.0 243.5,376.0 251.5,397.0 259.5,397.0 267.5,397.0 275.5,397.0 283.5,521.0 291.5,521.0 299.5,521.0 307.5,521.0 315.5,487.0 323.5,487.0 331.5,487.0 339.5,487.0 347.5,479.0 355.5,479.0 363.5,479.0 371.5,479.0 379.5,440.0 387.5,440.0 395.5,440.0 403.5,440.0 411.5,449.0 419.5,449.0 427.5,449.0 435.5,449.0 443.5,345.0 451.5,345.0 459.5,345.0 467.5,345.0 475.5,369.0 483.5,369.0 491.5,369.0 499.5,369.0 507.5,314.0 515.5,314.0 523.5,314.0 531.5,314.0 539.5,316.0 547.5,316.0 555.5,316.0 563.5,316.0 571.5,341.0 579.5,333.0 587.5,378.0 595.5,373.0 603.5,350.0 611.5,357.0 619.5,359.0 627.5,373.0 635.5,400.0 643.5,424.0 651.5,381.0 659.5,368.0 667.5,369.0 675.5,356.0 683.5,368.0 691.5,390.0 699.5,415.0 707.5,457.0 715.5,417.0 723.5,397.0 731.5,393.0 739.5,434.0 747.5,427.0 755.5,435.0 763.5,435.0 771.5,447.0 779.5,385.0 787.5,392.0 795.5,373.0 803.5,381.0" fill="none" stroke="#00ff00" stroke-width="1"/>
<polyline points="3.0,634.5 1874.0,251.5" fill="none" stroke="#EE82EE" stroke-width="1" stroke-dasharray="3 3"/>
<g shape-rendering="crispEdges">
<polyline points="3.0,524.0 1874.0,141.0" fill="none" stroke="#EE82EE" stroke-width="2.2"/>
<polyline points="3.0,745.0 1874.0,362.0" fill="none" stroke="#EE82EE" stroke-width="2.2"/>
</g>
<polyline points="3.0,580.0 57.0,594.0 107.0,600.0 150.0,601.0 207.0,596.0 250.0,594.5 300.0,592.5 350.0,598.0 400.0,601.0 437.0,600.0 462.0,590.0 487.5,575.0 525.0,550.0 562.5,526.0 600.0,502.5 640.0,474.5 673.0,447.0 707.0,423.0 740.0,403.0 773.0,387.0 807.0,372.0 840.0,360.0 907.0,343.0 973.0,334.0 1035.0,332.5 1105.0,331.0 1135.0,322.5 1172.0,314.0 1210.0,305.0 1225.0,302.5 1247.0,302.5 1272.0,306.0 1297.0,314.0 1322.0,322.5 1360.0,336.0 1397.0,350.0 1440.0,366.0 1480.0,380.0" fill="none" stroke="#0000ff" stroke-width="2.5" stroke-linejoin="round"/>
<polyline points="3.0,657.0 25.0,672.0 42.0,677.0 62.0,677.0 100.0,669.0 140.0,659.5 200.0,647.5 225.0,639.0 250.0,622.5 275.0,608.0 307.0,592.0 350.0,571.0 380.0,556.0 410.0,540.5 441.0,521.0 460.0,505.0 475.0,492.5 504.0,462.5 524.0,440.0 560.0,395.0 593.0,360.0 617.0,340.0 640.0,320.0 673.0,290.0 707.0,263.0 740.0,237.0 767.0,217.0 787.0,205.0 813.0,199.0 843.0,198.0 860.0,208.0 880.0,220.0 907.0,233.0 940.0,257.0 960.0,277.0 980.0,297.0 1000.0,313.0 1020.0,329.0 1045.0,350.0 1070.0,372.5 1095.0,390.0 1120.0,402.5 1145.0,412.5 1170.0,419.0 1190.0,420.0 1210.0,416.0 1232.0,410.0 1255.0,401.7 1277.0,399.0 1305.0,399.5 1330.0,401.0 1355.0,399.7 1380.0,396.7 1405.0,392.5 1430.0,387.5 1455.0,383.0 1475.0,381.0" fill="none" stroke="#ffff00" stroke-width="2.2" stroke-linejoin="round"/>
<polyline points="3.0,719.0 15.0,722.5 30.0,721.0 50.0,715.0 62.0,707.5 75.0,692.5 100.0,662.5 125.0,632.5 150.0,608.0 175.0,579.0 190.0,562.5 207.0,550.0 225.0,540.0 250.0,526.0 275.0,510.0 287.0,504.0 300.0,501.0 325.0,505.0 350.0,506.0 370.0,506.0 382.0,511.0 400.0,512.5 425.0,512.0 442.0,509.0 455.0,495.0 467.0,465.0 480.0,435.0 507.0,360.0 533.0,300.0 560.0,240.0 580.0,193.0 597.0,153.0 610.0,130.0 623.0,120.0 640.0,116.0 660.0,112.0 683.0,113.0 697.0,118.0 717.0,137.0 740.0,160.0 760.0,172.0 780.0,187.0 797.0,207.0 810.0,233.0 820.0,257.0 830.0,277.0 840.0,293.0 853.0,318.0 870.0,340.0 890.0,360.0 910.0,380.0 932.0,400.0 952.0,405.0 970.0,406.0 987.0,416.0 1007.0,420.0 1032.0,425.0 1050.0,434.0 1070.0,447.5 1085.0,457.5 1100.0,465.0 1112.0,467.5 1130.0,461.0 1145.0,445.0 1170.0,425.0 1195.0,402.5 1220.0,380.0 1247.0,357.0 1263.0,345.0 1272.0,343.7 1308.0,346.7 1317.0,350.0 1330.0,351.7 1347.0,353.0 1360.0,358.0 1372.0,366.7 1388.0,376.7 1405.0,385.0 1422.0,391.7 1438.0,398.0 1452.0,401.7 1463.0,400.0 1475.0,399.7" fill="none" stroke="#ffffff" stroke-width="2.2" stroke-linejoin="round"/>
<rect x="11" y="716" width="1" height="46" fill="#ff0000"/>
<rect x="9" y="718" width="5" height="43" fill="#ff0000"/>
<rect x="35" y="662" width="1" height="34" fill="#ff0000"/>
<rect x="33" y="665" width="5" height="27" fill="#ff0000"/>
<rect x="91" y="544" width="1" height="23" fill="#ff0000"/>
<rect x="89" y="547" width="5" height="17" fill="#ff0000"/>
<rect x="107" y="537" width="1" height="28" fill="#ff0000"/>
<rect x="105" y="544" width="5" height="13" fill="#ff0000"/>
<rect x="115" y="524" width="1" height="56" fill="#ff0000"/>
<rect x="113" y="557" width="5" height="12" fill="#ff0000"/>
<rect x="131" y="545" width="1" height="41" fill="#ff0000"/>
<rect x="129" y="557" width="5" height="19" fill="#ff0000"/>
<rect x="147" y="526" width="1" height="26" fill="#ff0000"/>
<rect x="145" y="532" width="5" height="15" fill="#ff0000"/>
<rect x="163" y="512" width="1" height="23" fill="#ff0000"/>
<rect x="161" y="515" width="5" height="3" fill="#ff0000"/>
<rect x="179" y="505" width="1" height="15" fill="#ff0000"/>
<rect x="177" y="510" width="5" height="7" fill="#ff0000"/>
<rect x="187" y="522" width="1" height="30" fill="#ff0000"/>
<rect x="185" y="529" width="5" height="5" fill="#ff0000"/>
<rect x="195" y="529" width="1" height="31" fill="#ff0000"/>
<rect x="193" y="535" width="5" height="19" fill="#ff0000"/>
<rect x="203" y="552" width="1" height="19" fill="#ff0000"/>
<rect x="201" y="557" width="5" height="3" fill="#ff0000"/>
<rect x="227" y="487" width="1" height="13" fill="#ff0000"/>
<rect x="225" y="490" width="5" height="6" fill="#ff0000"/>
<rect x="235" y="490" width="1" height="13" fill="#ff0000"/>
<rect x="233" y="495" width="5" height="5" fill="#ff0000"/>
<rect x="267" y="454" width="1" height="22" fill="#ff0000"/>
<rect x="265" y="457" width="5" height="15" fill="#ff0000"/>
<rect x="283" y="450" width="1" height="25" fill="#ff0000"/>
<rect x="281" y="455" width="5" height="16" fill="#ff0000"/>
<rect x="291" y="472" width="1" height="23" fill="#ff0000"/>
<rect x="289" y="474" width="5" height="16" fill="#ff0000"/>
<rect x="307" y="475" width="1" height="120" fill="#ff0000"/>
<rect x="305" y="482" width="5" height="52" fill="#ff0000"/>
<rect x="315" y="530" width="1" height="35" fill="#ff0000"/>
<rect x="313" y="532" width="5" height="25" fill="#ff0000"/>
<rect x="347" y="510" width="1" height="27" fill="#ff0000"/>
<rect x="345" y="522" width="5" height="4" fill="#ff0000"/>
<rect x="355" y="522" width="1" height="33" fill="#ff0000"/>
<rect x="353" y="524" width="5" height="28" fill="#ff0000"/>
<rect x="371" y="525" width="1" height="24" fill="#ff0000"/>
<rect x="369" y="529" width="5" height="18" fill="#ff0000"/>
<rect x="403" y="489" width="1" height="21" fill="#ff0000"/>
<rect x="401" y="497" width="5" height="4" fill="#ff0000"/>
<rect x="435" y="424" width="1" height="46" fill="#ff0000"/>
<rect x="433" y="426" width="5" height="18" fill="#ff0000"/>
<rect x="483" y="132" width="1" height="33" fill="#ff0000"/>
<rect x="481" y="148" width="5" height="1" fill="#ff0000"/>
<rect x="491" y="138" width="1" height="39" fill="#ff0000"/>
<rect x="489" y="147" width="5" height="16" fill="#ff0000"/>
<rect x="523" y="108" width="1" height="19" fill="#ff0000"/>
<rect x="521" y="112" width="5" height="10" fill="#ff0000"/>
<rect x="571" y="63" width="1" height="74" fill="#ff0000"/>
<rect x="569" y="66" width="5" height="49" fill="#ff0000"/>
<rect x="587" y="68" width="1" height="35" fill="#ff0000"/>
<rect x="585" y="77" width="5" height="16" fill="#ff0000"/>
<rect x="595" y="88" width="1" height="66" fill="#ff0000"/>
<rect x="593" y="93" width="5" height="59" fill="#ff0000"/>
<rect x="611" y="113" width="1" height="44" fill="#ff0000"/>
<rect x="609" y="128" width="5" height="15" fill="#ff0000"/>
<rect x="619" y="133" width="1" height="27" fill="#ff0000"/>
<rect x="617" y="142" width="5" height="6" fill="#ff0000"/>
<rect x="635" y="120" width="1" height="30" fill="#ff0000"/>
<rect x="633" y="137" width="5" height="3" fill="#ff0000"/>
<rect x="659" y="89" width="1" height="24" fill="#ff0000"/>
<rect x="657" y="94" width="5" height="18" fill="#ff0000"/>
<rect x="667" y="111" width="1" height="22" fill="#ff0000"/>
<rect x="665" y="113" width="5" height="17" fill="#ff0000"/>
<rect x="683" y="122" width="1" height="11" fill="#ff0000"/>
<rect x="681" y="123" width="5" height="5" fill="#ff0000"/>
<rect x="691" y="125" width="1" height="60" fill="#ff0000"/>
<rect x="689" y="128" width="5" height="47" fill="#ff0000"/>
<rect x="699" y="167" width="1" height="60" fill="#ff0000"/>
<rect x="697" y="176" width="5" height="37" fill="#ff0000"/>
<rect x="707" y="203" width="1" height="30" fill="#ff0000"/>
<rect x="705" y="213" width="5" height="17" fill="#ff0000"/>
<rect x="715" y="207" width="1" height="26" fill="#ff0000"/>
<rect x="713" y="222" width="5" height="10" fill="#ff0000"/>
<rect x="723" y="230" width="1" height="53" fill="#ff0000"/>
<rect x="721" y="232" width="5" height="20" fill="#ff0000"/>
<rect x="739" y="203" width="1" height="37" fill="#ff0000"/>
<rect x="737" y="228" width="5" height="10" fill="#ff0000"/>
<rect x="771" y="210" width="1" height="40" fill="#ff0000"/>
<rect x="769" y="213" width="5" height="24" fill="#ff0000"/>
<rect x="779" y="233" width="1" height="74" fill="#ff0000"/>
<rect x="777" y="235" width="5" height="70" fill="#ff0000"/>
<rect x="787" y="293" width="1" height="53" fill="#ff0000"/>
<rect x="785" y="304" width="5" height="35" fill="#ff0000"/>
<rect x="795" y="337" width="1" height="29" fill="#ff0000"/>
<rect x="793" y="339" width="5" height="25" fill="#ff0000"/>
<rect x="803" y="362" width="1" height="40" fill="#ff0000"/>
<rect x="801" y="364" width="5" height="36" fill="#ff0000"/>
<rect x="811" y="398" width="1" height="48" fill="#ff0000"/>
<rect x="809" y="400" width="5" height="44" fill="#ff0000"/>
<rect x="835" y="405" width="1" height="47" fill="#ff0000"/>
<rect x="833" y="416" width="5" height="9" fill="#ff0000"/>
<rect x="843" y="416" width="1" height="38" fill="#ff0000"/>
<rect x="841" y="425" width="5" height="27" fill="#ff0000"/>
<rect x="859" y="431" width="1" height="41" fill="#ff0000"/>
<rect x="857" y="449" width="5" height="11" fill="#ff0000"/>
<rect x="899" y="350" width="1" height="52" fill="#ff0000"/>
<rect x="897" y="352" width="5" height="3" fill="#ff0000"/>
<rect x="907" y="347" width="1" height="23" fill="#ff0000"/>
<rect x="905" y="354" width="5" height="13" fill="#ff0000"/>
<rect x="915" y="364" width="1" height="23" fill="#ff0000"/>
<rect x="913" y="366" width="5" height="10" fill="#ff0000"/>
<rect x="923" y="367" width="1" height="28" fill="#ff0000"/>
<rect x="921" y="376" width="5" height="15" fill="#ff0000"/>
<rect x="931" y="390" width="1" height="10" fill="#ff0000"/>
<rect x="929" y="391" width="5" height="8" fill="#ff0000"/>
<rect x="947" y="370" width="1" height="29" fill="#ff0000"/>
<rect x="945" y="372" width="5" height="25" fill="#ff0000"/>
<rect x="963" y="394" width="1" height="26" fill="#ff0000"/>
<rect x="961" y="400" width="5" height="5" fill="#ff0000"/>
<rect x="971" y="400" width="1" height="47" fill="#ff0000"/>
<rect x="969" y="402" width="5" height="43" fill="#ff0000"/>
<rect x="979" y="442" width="1" height="80" fill="#ff0000"/>
<rect x="977" y="444" width="5" height="77" fill="#ff0000"/>
<rect x="1003" y="427" width="1" height="60" fill="#ff0000"/>
<rect x="1001" y="446" width="5" height="34" fill="#ff0000"/>
<rect x="1011" y="476" width="1" height="24" fill="#ff0000"/>
<rect x="1009" y="477" width="5" height="10" fill="#ff0000"/>
<rect x="1019" y="486" width="1" height="31" fill="#ff0000"/>
<rect x="1017" y="487" width="5" height="17" fill="#ff0000"/>
<rect x="1035" y="449" width="1" height="50" fill="#ff0000"/>
<rect x="1033" y="480" width="5" height="17" fill="#ff0000"/>
<rect x="1059" y="447" width="1" height="25" fill="#ff0000"/>
<rect x="1057" y="457" width="5" height="2" fill="#ff0000"/>
<rect x="1075" y="426" width="1" height="16" fill="#ff0000"/>
<rect x="1073" y="431" width="5" height="9" fill="#ff0000"/>
<rect x="1083" y="434" width="1" height="81" fill="#ff0000"/>
<rect x="1081" y="437" width="5" height="62" fill="#ff0000"/>
<rect x="1131" y="340" width="1" height="34" fill="#ff0000"/>
<rect x="1129" y="358" width="5" height="11" fill="#ff0000"/>
<rect x="1147" y="335" width="1" height="27" fill="#ff0000"/>
<rect x="1145" y="340" width="5" height="12" fill="#ff0000"/>
<rect x="1171" y="340" width="1" height="40" fill="#ff0000"/>
<rect x="1169" y="347" width="5" height="22" fill="#ff0000"/>
<rect x="1187" y="334" width="1" height="21" fill="#ff0000"/>
<rect x="1185" y="340" width="5" height="5" fill="#ff0000"/>
<rect x="1203" y="294" width="1" height="21" fill="#ff0000"/>
<rect x="1201" y="299" width="5" height="15" fill="#ff0000"/>
<rect x="1211" y="310" width="1" height="30" fill="#ff0000"/>
<rect x="1209" y="314" width="5" height="7" fill="#ff0000"/>
<rect x="1219" y="310" width="1" height="20" fill="#ff0000"/>
<rect x="1217" y="319" width="5" height="10" fill="#ff0000"/>
<rect x="1227" y="322" width="1" height="20" fill="#ff0000"/>
<rect x="1225" y="329" width="5" height="2" fill="#ff0000"/>
<rect x="1243" y="321" width="1" height="32" fill="#ff0000"/>
<rect x="1241" y="339" width="5" height="2" fill="#ff0000"/>
<rect x="1259" y="333" width="1" height="47" fill="#ff0000"/>
<rect x="1257" y="334" width="5" height="44" fill="#ff0000"/>
<rect x="1283" y="348" width="1" height="22" fill="#ff0000"/>
<rect x="1281" y="349" width="5" height="8" fill="#ff0000"/>
<rect x="1291" y="356" width="1" height="17" fill="#ff0000"/>
<rect x="1289" y="357" width="5" height="2" fill="#ff0000"/>
<rect x="1299" y="357" width="1" height="17" fill="#ff0000"/>
<rect x="1297" y="358" width="5" height="15" fill="#ff0000"/>
<rect x="1307" y="372" width="1" height="30" fill="#ff0000"/>
<rect x="1305" y="373" width="5" height="27" fill="#ff0000"/>
<rect x="1315" y="400" width="1" height="30" fill="#ff0000"/>
<rect x="1313" y="401" width="5" height="23" fill="#ff0000"/>
<rect x="1339" y="367" width="1" height="28" fill="#ff0000"/>
<rect x="1337" y="368" width="5" height="1" fill="#ff0000"/>
<rect x="1355" y="352" width="1" height="18" fill="#ff0000"/>
<rect x="1353" y="353" width="5" height="15" fill="#ff0000"/>
<rect x="1363" y="366" width="1" height="25" fill="#ff0000"/>
<rect x="1361" y="367" width="5" height="23" fill="#ff0000"/>
<rect x="1371" y="389" width="1" height="49" fill="#ff0000"/>
<rect x="1369" y="390" width="5" height="25" fill="#ff0000"/>
<rect x="1379" y="408" width="1" height="50" fill="#ff0000"/>
<rect x="1377" y="409" width="5" height="48" fill="#ff0000"/>
<rect x="1411" y="391" width="1" height="49" fill="#ff0000"/>
<rect x="1409" y="392" width="5" height="42" fill="#ff0000"/>
<rect x="1427" y="425" width="1" height="17" fill="#ff0000"/>
<rect x="1425" y="427" width="5" height="8" fill="#ff0000"/>
<rect x="1435" y="425" width="1" height="25" fill="#ff0000"/>
<rect x="1433" y="434" width="5" height="1" fill="#ff0000"/>
<rect x="1443" y="423" width="1" height="27" fill="#ff0000"/>
<rect x="1441" y="436" width="5" height="11" fill="#ff0000"/>
<rect x="1459" y="383" width="1" height="10" fill="#ff0000"/>
<rect x="1457" y="386" width="5" height="6" fill="#ff0000"/>
<rect x="1475" y="370" width="1" height="12" fill="#ff0000"/>
<rect x="1473" y="373" width="5" height="8" fill="#ff0000"/>
<line x1="11.5" y1="446.0" x2="11.5" y2="521.5" stroke="#0000ff" stroke-width="1" stroke-dasharray="3 3" stroke-dashoffset="0"/>
<line x1="19.5" y1="446.0" x2="19.5" y2="521.5" stroke="#0000ff" stroke-width="1" stroke-dasharray="3 3" stroke-dashoffset="0"/>
<line x1="27.5" y1="469.0" x2="27.5" y2="521.5" stroke="#0000ff" stroke-width="1" stroke-dasharray="3 3" stroke-dashoffset="0"/>
<line x1="35.5" y1="469.0" x2="35.5" y2="521.5" stroke="#0000ff" stroke-width="1" stroke-dasharray="3 3" stroke-dashoffset="0"/>
<line x1="43.5" y1="469.0" x2="43.5" y2="521.5" stroke="#0000ff" stroke-width="1" stroke-dasharray="3 3" stroke-dashoffset="0"/>
<line x1="51.5" y1="469.0" x2="51.5" y2="521.5" stroke="#0000ff" stroke-width="1" stroke-dasharray="3 3" stroke-dashoffset="0"/>
<line x1="59.5" y1="469.0" x2="59.5" y2="521.5" stroke="#0000ff" stroke-width="1" stroke-dasharray="3 3" stroke-dashoffset="0"/>
<line x1="67.5" y1="469.0" x2="67.5" y2="521.5" stroke="#0000ff" stroke-width="1" stroke-dasharray="3 3" stroke-dashoffset="0"/>
<line x1="75.5" y1="469.0" x2="75.5" y2="521.5" stroke="#0000ff" stroke-width="1" stroke-dasharray="3 3" stroke-dashoffset="0"/>
<line x1="83.5" y1="470.7" x2="83.5" y2="521.5" stroke="#0000ff" stroke-width="1" stroke-dasharray="3 3" stroke-dashoffset="0"/>
<line x1="91.5" y1="497.5" x2="91.5" y2="521.5" stroke="#0000ff" stroke-width="1" stroke-dasharray="3 3" stroke-dashoffset="0"/>
<line x1="99.5" y1="497.5" x2="99.5" y2="521.5" stroke="#0000ff" stroke-width="1" stroke-dasharray="3 3" stroke-dashoffset="0"/>
<line x1="107.5" y1="497.5" x2="107.5" y2="521.5" stroke="#0000ff" stroke-width="1" stroke-dasharray="3 3" stroke-dashoffset="0"/>
<line x1="115.5" y1="497.5" x2="115.5" y2="521.5" stroke="#0000ff" stroke-width="1" stroke-dasharray="3 3" stroke-dashoffset="0"/>
<line x1="123.5" y1="497.5" x2="123.5" y2="521.5" stroke="#0000ff" stroke-width="1" stroke-dasharray="3 3" stroke-dashoffset="0"/>
<line x1="131.5" y1="497.5" x2="131.5" y2="521.5" stroke="#0000ff" stroke-width="1" stroke-dasharray="3 3" stroke-dashoffset="0"/>
<line x1="139.5" y1="497.5" x2="139.5" y2="521.5" stroke="#0000ff" stroke-width="1" stroke-dasharray="3 3" stroke-dashoffset="0"/>
<line x1="147.5" y1="497.6" x2="147.5" y2="521.5" stroke="#0000ff" stroke-width="1" stroke-dasharray="3 3" stroke-dashoffset="0"/>
<line x1="155.5" y1="497.8" x2="155.5" y2="521.5" stroke="#0000ff" stroke-width="1" stroke-dasharray="3 3" stroke-dashoffset="0"/>
<line x1="163.5" y1="498.0" x2="163.5" y2="521.5" stroke="#0000ff" stroke-width="1" stroke-dasharray="3 3" stroke-dashoffset="0"/>
<line x1="171.5" y1="498.2" x2="171.5" y2="521.5" stroke="#0000ff" stroke-width="1" stroke-dasharray="3 3" stroke-dashoffset="0"/>
<line x1="179.5" y1="498.4" x2="179.5" y2="521.5" stroke="#0000ff" stroke-width="1" stroke-dasharray="3 3" stroke-dashoffset="0"/>
<line x1="187.5" y1="498.6" x2="187.5" y2="521.5" stroke="#0000ff" stroke-width="1" stroke-dasharray="3 3" stroke-dashoffset="0"/>
<line x1="195.5" y1="498.8" x2="195.5" y2="521.5" stroke="#0000ff" stroke-width="1" stroke-dasharray="3 3" stroke-dashoffset="0"/>
<line x1="203.5" y1="499.0" x2="203.5" y2="521.5" stroke="#0000ff" stroke-width="1" stroke-dasharray="3 3" stroke-dashoffset="0"/>
<line x1="211.5" y1="499.2" x2="211.5" y2="521.5" stroke="#0000ff" stroke-width="1" stroke-dasharray="3 3" stroke-dashoffset="0"/>
<line x1="219.5" y1="499.4" x2="219.5" y2="521.5" stroke="#0000ff" stroke-width="1" stroke-dasharray="3 3" stroke-dashoffset="0"/>
<line x1="227.5" y1="499.6" x2="227.5" y2="521.5" stroke="#0000ff" stroke-width="1" stroke-dasharray="3 3" stroke-dashoffset="0"/>
<line x1="235.5" y1="499.8" x2="235.5" y2="521.5" stroke="#0000ff" stroke-width="1" stroke-dasharray="3 3" stroke-dashoffset="0"/>
<line x1="243.5" y1="500.0" x2="243.5" y2="521.5" stroke="#0000ff" stroke-width="1" stroke-dasharray="3 3" stroke-dashoffset="0"/>
<line x1="251.5" y1="485.0" x2="251.5" y2="521.5" stroke="#0000ff" stroke-width="1" stroke-dasharray="3 3" stroke-dashoffset="0"/>
<line x1="259.5" y1="485.0" x2="259.5" y2="521.5" stroke="#0000ff" stroke-width="1" stroke-dasharray="3 3" stroke-dashoffset="0"/>
<line x1="267.5" y1="485.0" x2="267.5" y2="521.5" stroke="#0000ff" stroke-width="1" stroke-dasharray="3 3" stroke-dashoffset="0"/>
<line x1="275.5" y1="485.0" x2="275.5" y2="521.5" stroke="#0000ff" stroke-width="1" stroke-dasharray="3 3" stroke-dashoffset="0"/>
<line x1="283.5" y1="471.0" x2="283.5" y2="521.5" stroke="#0000ff" stroke-width="1" stroke-dasharray="3 3" stroke-dashoffset="0"/>
<line x1="291.5" y1="471.0" x2="291.5" y2="521.5" stroke="#0000ff" stroke-width="1" stroke-dasharray="3 3" stroke-dashoffset="0"/>
<line x1="299.5" y1="471.0" x2="299.5" y2="521.5" stroke="#0000ff" stroke-width="1" stroke-dasharray="3 3" stroke-dashoffset="0"/>
<line x1="307.5" y1="473.1" x2="307.5" y2="521.5" stroke="#0000ff" stroke-width="1" stroke-dasharray="3 3" stroke-dashoffset="0"/>
<line x1="315.5" y1="490.0" x2="315.5" y2="521.5" stroke="#0000ff" stroke-width="1" stroke-dasharray="3 3" stroke-dashoffset="0"/>
<line x1="323.5" y1="495.0" x2="323.5" y2="521.5" stroke="#0000ff" stroke-width="1" stroke-dasharray="3 3" stroke-dashoffset="0"/>
<line x1="331.5" y1="495.4" x2="331.5" y2="521.5" stroke="#0000ff" stroke-width="1" stroke-dasharray="3 3" stroke-dashoffset="0"/>
<line x1="339.5" y1="495.7" x2="339.5" y2="521.5" stroke="#0000ff" stroke-width="1" stroke-dasharray="3 3" stroke-dashoffset="0"/>
<line x1="347.5" y1="497.6" x2="347.5" y2="521.5" stroke="#0000ff" stroke-width="1" stroke-dasharray="3 3" stroke-dashoffset="0"/>
<line x1="355.5" y1="504.0" x2="355.5" y2="521.5" stroke="#0000ff" stroke-width="1" stroke-dasharray="3 3" stroke-dashoffset="0"/>
<line x1="363.5" y1="504.5" x2="363.5" y2="521.5" stroke="#0000ff" stroke-width="1" stroke-dasharray="3 3" stroke-dashoffset="0"/>
<line x1="371.5" y1="505.3" x2="371.5" y2="521.5" stroke="#0000ff" stroke-width="1" stroke-dasharray="3 3" stroke-dashoffset="0"/>
<line x1="379.5" y1="507.9" x2="379.5" y2="521.5" stroke="#0000ff" stroke-width="1" stroke-dasharray="3 3" stroke-dashoffset="0"/>
<line x1="387.5" y1="510.5" x2="387.5" y2="521.5" stroke="#0000ff" stroke-width="1" stroke-dasharray="3 3" stroke-dashoffset="0"/>
<line x1="395.5" y1="513.1" x2="395.5" y2="521.5" stroke="#0000ff" stroke-width="1" stroke-dasharray="3 3" stroke-dashoffset="0"/>
<line x1="403.5" y1="514.9" x2="403.5" y2="521.5" stroke="#0000ff" stroke-width="1" stroke-dasharray="3 3" stroke-dashoffset="0"/>
<line x1="411.5" y1="515.6" x2="411.5" y2="521.5" stroke="#0000ff" stroke-width="1" stroke-dasharray="3 3" stroke-dashoffset="0"/>
<line x1="419.5" y1="516.2" x2="419.5" y2="521.5" stroke="#0000ff" stroke-width="1" stroke-dasharray="3 3" stroke-dashoffset="0"/>
<line x1="427.5" y1="516.8" x2="427.5" y2="521.5" stroke="#0000ff" stroke-width="1" stroke-dasharray="3 3" stroke-dashoffset="0"/>
<line x1="435.5" y1="517.5" x2="435.5" y2="521.5" stroke="#0000ff" stroke-width="1" stroke-dasharray="3 3" stroke-dashoffset="0"/>
<line x1="475.5" y1="521.5" x2="475.5" y2="545.8" stroke="#ff0000" stroke-width="1" stroke-dasharray="3 3" stroke-dashoffset="0"/>
<line x1="483.5" y1="521.5" x2="483.5" y2="547.5" stroke="#ff0000" stroke-width="1" stroke-dasharray="3 3" stroke-dashoffset="0"/>
<line x1="491.5" y1="521.5" x2="491.5" y2="547.5" stroke="#ff0000" stroke-width="1" stroke-dasharray="3 3" stroke-dashoffset="0"/>
<line x1="499.5" y1="521.5" x2="499.5" y2="547.5" stroke="#ff0000" stroke-width="1" stroke-dasharray="3 3" stroke-dashoffset="0"/>
<line x1="507.5" y1="521.5" x2="507.5" y2="569.5" stroke="#ff0000" stroke-width="1" stroke-dasharray="3 3" stroke-dashoffset="0"/>
<line x1="515.5" y1="521.5" x2="515.5" y2="571.0" stroke="#ff0000" stroke-width="1" stroke-dasharray="3 3" stroke-dashoffset="0"/>
<line x1="523.5" y1="521.5" x2="523.5" y2="571.0" stroke="#ff0000" stroke-width="1" stroke-dasharray="3 3" stroke-dashoffset="0"/>
<line x1="531.5" y1="521.5" x2="531.5" y2="571.0" stroke="#ff0000" stroke-width="1" stroke-dasharray="3 3" stroke-dashoffset="0"/>
<line x1="539.5" y1="484.4" x2="539.5" y2="614.0" stroke="#ff0000" stroke-width="1" stroke-dasharray="3 3" stroke-dashoffset="0"/>
<line x1="547.5" y1="482.5" x2="547.5" y2="614.0" stroke="#ff0000" stroke-width="1" stroke-dasharray="3 3" stroke-dashoffset="0"/>
<line x1="555.5" y1="482.5" x2="555.5" y2="614.0" stroke="#ff0000" stroke-width="1" stroke-dasharray="3 3" stroke-dashoffset="0"/>
<line x1="563.5" y1="482.5" x2="563.5" y2="614.0" stroke="#ff0000" stroke-width="1" stroke-dasharray="3 3" stroke-dashoffset="0"/>
<line x1="571.5" y1="511.6" x2="571.5" y2="647.5" stroke="#ff0000" stroke-width="1" stroke-dasharray="3 3" stroke-dashoffset="0"/>
<line x1="579.5" y1="515.6" x2="579.5" y2="647.5" stroke="#ff0000" stroke-width="1" stroke-dasharray="3 3" stroke-dashoffset="0"/>
<line x1="587.5" y1="515.6" x2="587.5" y2="647.5" stroke="#ff0000" stroke-width="1" stroke-dasharray="3 3" stroke-dashoffset="0"/>
<line x1="595.5" y1="515.6" x2="595.5" y2="647.5" stroke="#ff0000" stroke-width="1" stroke-dasharray="3 3" stroke-dashoffset="0"/>
<line x1="603.5" y1="515.6" x2="603.5" y2="647.5" stroke="#ff0000" stroke-width="1" stroke-dasharray="3 3" stroke-dashoffset="0"/>
<line x1="611.5" y1="515.6" x2="611.5" y2="647.5" stroke="#ff0000" stroke-width="1" stroke-dasharray="3 3" stroke-dashoffset="0"/>
<line x1="619.5" y1="515.6" x2="619.5" y2="647.5" stroke="#ff0000" stroke-width="1" stroke-dasharray="3 3" stroke-dashoffset="0"/>
<line x1="627.5" y1="515.6" x2="627.5" y2="647.5" stroke="#ff0000" stroke-width="1" stroke-dasharray="3 3" stroke-dashoffset="0"/>
<line x1="635.5" y1="515.6" x2="635.5" y2="649.0" stroke="#ff0000" stroke-width="1" stroke-dasharray="3 3" stroke-dashoffset="0"/>
<line x1="643.5" y1="515.6" x2="643.5" y2="649.0" stroke="#ff0000" stroke-width="1" stroke-dasharray="3 3" stroke-dashoffset="0"/>
<line x1="651.5" y1="515.6" x2="651.5" y2="649.0" stroke="#ff0000" stroke-width="1" stroke-dasharray="3 3" stroke-dashoffset="0"/>
<line x1="659.5" y1="515.6" x2="659.5" y2="649.0" stroke="#ff0000" stroke-width="1" stroke-dasharray="3 3" stroke-dashoffset="0"/>
<line x1="667.5" y1="515.6" x2="667.5" y2="654.6" stroke="#ff0000" stroke-width="1" stroke-dasharray="3 3" stroke-dashoffset="0"/>
<line x1="675.5" y1="515.6" x2="675.5" y2="655.0" stroke="#ff0000" stroke-width="1" stroke-dasharray="3 3" stroke-dashoffset="0"/>
<line x1="683.5" y1="515.6" x2="683.5" y2="655.0" stroke="#ff0000" stroke-width="1" stroke-dasharray="3 3" stroke-dashoffset="0"/>
<line x1="691.5" y1="515.6" x2="691.5" y2="655.0" stroke="#ff0000" stroke-width="1" stroke-dasharray="3 3" stroke-dashoffset="0"/>
<line x1="699.5" y1="515.6" x2="699.5" y2="662.1" stroke="#ff0000" stroke-width="1" stroke-dasharray="3 3" stroke-dashoffset="0"/>
<line x1="707.5" y1="515.6" x2="707.5" y2="662.5" stroke="#ff0000" stroke-width="1" stroke-dasharray="3 3" stroke-dashoffset="0"/>
<line x1="715.5" y1="515.6" x2="715.5" y2="662.5" stroke="#ff0000" stroke-width="1" stroke-dasharray="3 3" stroke-dashoffset="0"/>
<line x1="723.5" y1="515.6" x2="723.5" y2="662.5" stroke="#ff0000" stroke-width="1" stroke-dasharray="3 3" stroke-dashoffset="0"/>
<line x1="731.5" y1="515.6" x2="731.5" y2="638.8" stroke="#ff0000" stroke-width="1" stroke-dasharray="3 3" stroke-dashoffset="0"/>
<line x1="739.5" y1="515.6" x2="739.5" y2="638.8" stroke="#ff0000" stroke-width="1" stroke-dasharray="3 3" stroke-dashoffset="0"/>
<line x1="747.5" y1="515.6" x2="747.5" y2="638.8" stroke="#ff0000" stroke-width="1" stroke-dasharray="3 3" stroke-dashoffset="0"/>
<line x1="755.5" y1="515.6" x2="755.5" y2="638.8" stroke="#ff0000" stroke-width="1" stroke-dasharray="3 3" stroke-dashoffset="0"/>
<line x1="763.5" y1="515.6" x2="763.5" y2="636.7" stroke="#ff0000" stroke-width="1" stroke-dasharray="3 3" stroke-dashoffset="0"/>
<line x1="771.5" y1="515.6" x2="771.5" y2="636.5" stroke="#ff0000" stroke-width="1" stroke-dasharray="3 3" stroke-dashoffset="0"/>
<line x1="779.5" y1="515.6" x2="779.5" y2="636.3" stroke="#ff0000" stroke-width="1" stroke-dasharray="3 3" stroke-dashoffset="0"/>
<line x1="787.5" y1="515.6" x2="787.5" y2="636.0" stroke="#ff0000" stroke-width="1" stroke-dasharray="3 3" stroke-dashoffset="0"/>
<line x1="795.5" y1="515.6" x2="795.5" y2="632.5" stroke="#ff0000" stroke-width="1" stroke-dasharray="3 3" stroke-dashoffset="0"/>
<line x1="803.5" y1="515.6" x2="803.5" y2="632.5" stroke="#ff0000" stroke-width="1" stroke-dasharray="3 3" stroke-dashoffset="0"/>
<line x1="811.5" y1="515.6" x2="811.5" y2="632.5" stroke="#ff0000" stroke-width="1" stroke-dasharray="3 3" stroke-dashoffset="0"/>
<line x1="819.5" y1="515.6" x2="819.5" y2="632.5" stroke="#ff0000" stroke-width="1" stroke-dasharray="3 3" stroke-dashoffset="0"/>
<line x1="827.5" y1="515.6" x2="827.5" y2="623.8" stroke="#ff0000" stroke-width="1" stroke-dasharray="3 3" stroke-dashoffset="0"/>
<line x1="835.5" y1="515.6" x2="835.5" y2="623.8" stroke="#ff0000" stroke-width="1" stroke-dasharray="3 3" stroke-dashoffset="0"/>
<line x1="843.5" y1="515.6" x2="843.5" y2="623.8" stroke="#ff0000" stroke-width="1" stroke-dasharray="3 3" stroke-dashoffset="0"/>
<line x1="851.5" y1="515.6" x2="851.5" y2="623.8" stroke="#ff0000" stroke-width="1" stroke-dasharray="3 3" stroke-dashoffset="0"/>
<line x1="859.5" y1="515.6" x2="859.5" y2="623.8" stroke="#ff0000" stroke-width="1" stroke-dasharray="3 3" stroke-dashoffset="0"/>
<line x1="867.5" y1="515.6" x2="867.5" y2="623.8" stroke="#ff0000" stroke-width="1" stroke-dasharray="3 3" stroke-dashoffset="0"/>
<line x1="875.5" y1="515.6" x2="875.5" y2="623.8" stroke="#ff0000" stroke-width="1" stroke-dasharray="3 3" stroke-dashoffset="0"/>
<line x1="883.5" y1="515.6" x2="883.5" y2="623.8" stroke="#ff0000" stroke-width="1" stroke-dasharray="3 3" stroke-dashoffset="0"/>
<line x1="891.5" y1="515.6" x2="891.5" y2="614.0" stroke="#ff0000" stroke-width="1" stroke-dasharray="3 3" stroke-dashoffset="0"/>
<line x1="899.5" y1="515.6" x2="899.5" y2="614.0" stroke="#ff0000" stroke-width="1" stroke-dasharray="3 3" stroke-dashoffset="0"/>
<line x1="907.5" y1="515.6" x2="907.5" y2="614.0" stroke="#ff0000" stroke-width="1" stroke-dasharray="3 3" stroke-dashoffset="0"/>
<line x1="915.5" y1="515.6" x2="915.5" y2="614.0" stroke="#ff0000" stroke-width="1" stroke-dasharray="3 3" stroke-dashoffset="0"/>
<line x1="923.5" y1="515.6" x2="923.5" y2="584.5" stroke="#ff0000" stroke-width="1" stroke-dasharray="3 3" stroke-dashoffset="0"/>
<line x1="931.5" y1="515.6" x2="931.5" y2="584.5" stroke="#ff0000" stroke-width="1" stroke-dasharray="3 3" stroke-dashoffset="0"/>
<line x1="939.5" y1="515.6" x2="939.5" y2="584.5" stroke="#ff0000" stroke-width="1" stroke-dasharray="3 3" stroke-dashoffset="0"/>
<line x1="947.5" y1="515.6" x2="947.5" y2="584.5" stroke="#ff0000" stroke-width="1" stroke-dasharray="3 3" stroke-dashoffset="0"/>
<line x1="955.5" y1="515.6" x2="955.5" y2="574.5" stroke="#ff0000" stroke-width="1" stroke-dasharray="3 3" stroke-dashoffset="0"/>
<line x1="963.5" y1="515.6" x2="963.5" y2="574.5" stroke="#ff0000" stroke-width="1" stroke-dasharray="3 3" stroke-dashoffset="0"/>
<line x1="971.5" y1="515.6" x2="971.5" y2="574.5" stroke="#ff0000" stroke-width="1" stroke-dasharray="3 3" stroke-dashoffset="0"/>
<line x1="979.5" y1="515.6" x2="979.5" y2="574.5" stroke="#ff0000" stroke-width="1" stroke-dasharray="3 3" stroke-dashoffset="0"/>
<line x1="987.5" y1="515.6" x2="987.5" y2="574.5" stroke="#ff0000" stroke-width="1" stroke-dasharray="3 3" stroke-dashoffset="0"/>
<line x1="995.5" y1="515.6" x2="995.5" y2="574.6" stroke="#ff0000" stroke-width="1" stroke-dasharray="3 3" stroke-dashoffset="0"/>
<line x1="1003.5" y1="515.6" x2="1003.5" y2="574.6" stroke="#ff0000" stroke-width="1" stroke-dasharray="3 3" stroke-dashoffset="0"/>
<line x1="1011.5" y1="515.6" x2="1011.5" y2="574.6" stroke="#ff0000" stroke-width="1" stroke-dasharray="3 3" stroke-dashoffset="0"/>
<line x1="1019.5" y1="517.5" x2="1019.5" y2="574.7" stroke="#ff0000" stroke-width="1" stroke-dasharray="3 3" stroke-dashoffset="0"/>
<line x1="1027.5" y1="517.5" x2="1027.5" y2="574.7" stroke="#ff0000" stroke-width="1" stroke-dasharray="3 3" stroke-dashoffset="0"/>
<line x1="1035.5" y1="517.5" x2="1035.5" y2="574.8" stroke="#ff0000" stroke-width="1" stroke-dasharray="3 3" stroke-dashoffset="0"/>
<line x1="1043.5" y1="518.7" x2="1043.5" y2="574.8" stroke="#ff0000" stroke-width="1" stroke-dasharray="3 3" stroke-dashoffset="0"/>
<line x1="1051.5" y1="523.0" x2="1051.5" y2="574.9" stroke="#ff0000" stroke-width="1" stroke-dasharray="3 3" stroke-dashoffset="0"/>
<line x1="1059.5" y1="523.0" x2="1059.5" y2="574.9" stroke="#ff0000" stroke-width="1" stroke-dasharray="3 3" stroke-dashoffset="0"/>
<line x1="1067.5" y1="523.0" x2="1067.5" y2="575.0" stroke="#ff0000" stroke-width="1" stroke-dasharray="3 3" stroke-dashoffset="0"/>
<line x1="1075.5" y1="523.0" x2="1075.5" y2="575.0" stroke="#ff0000" stroke-width="1" stroke-dasharray="3 3" stroke-dashoffset="0"/>
<line x1="1083.5" y1="523.0" x2="1083.5" y2="557.5" stroke="#ff0000" stroke-width="1" stroke-dasharray="3 3" stroke-dashoffset="0"/>
<line x1="1091.5" y1="523.0" x2="1091.5" y2="554.3" stroke="#ff0000" stroke-width="1" stroke-dasharray="3 3" stroke-dashoffset="0"/>
<line x1="1099.5" y1="523.0" x2="1099.5" y2="553.4" stroke="#ff0000" stroke-width="1" stroke-dasharray="3 3" stroke-dashoffset="0"/>
<line x1="1107.5" y1="523.0" x2="1107.5" y2="552.6" stroke="#ff0000" stroke-width="1" stroke-dasharray="3 3" stroke-dashoffset="0"/>
<line x1="1115.5" y1="442.5" x2="1115.5" y2="486.2" stroke="#0000ff" stroke-width="1" stroke-dasharray="3 3" stroke-dashoffset="0"/>
<line x1="1123.5" y1="436.7" x2="1123.5" y2="486.0" stroke="#0000ff" stroke-width="1" stroke-dasharray="3 3" stroke-dashoffset="0"/>
<line x1="1131.5" y1="436.3" x2="1131.5" y2="486.0" stroke="#0000ff" stroke-width="1" stroke-dasharray="3 3" stroke-dashoffset="0"/>
<line x1="1139.5" y1="436.0" x2="1139.5" y2="486.0" stroke="#0000ff" stroke-width="1" stroke-dasharray="3 3" stroke-dashoffset="0"/>
<line x1="1147.5" y1="416.0" x2="1147.5" y2="465.6" stroke="#0000ff" stroke-width="1" stroke-dasharray="3 3" stroke-dashoffset="0"/>
<line x1="1155.5" y1="415.9" x2="1155.5" y2="465.4" stroke="#0000ff" stroke-width="1" stroke-dasharray="3 3" stroke-dashoffset="0"/>
<line x1="1163.5" y1="415.8" x2="1163.5" y2="465.2" stroke="#0000ff" stroke-width="1" stroke-dasharray="3 3" stroke-dashoffset="0"/>
<line x1="1171.5" y1="415.6" x2="1171.5" y2="465.0" stroke="#0000ff" stroke-width="1" stroke-dasharray="3 3" stroke-dashoffset="0"/>
<line x1="1179.5" y1="386.0" x2="1179.5" y2="436.0" stroke="#0000ff" stroke-width="1" stroke-dasharray="3 3" stroke-dashoffset="0"/>
<line x1="1187.5" y1="386.0" x2="1187.5" y2="435.9" stroke="#0000ff" stroke-width="1" stroke-dasharray="3 3" stroke-dashoffset="0"/>
<line x1="1195.5" y1="386.0" x2="1195.5" y2="435.7" stroke="#0000ff" stroke-width="1" stroke-dasharray="3 3" stroke-dashoffset="0"/>
<line x1="1203.5" y1="386.0" x2="1203.5" y2="435.6" stroke="#0000ff" stroke-width="1" stroke-dasharray="3 3" stroke-dashoffset="0"/>
<line x1="1211.5" y1="364.9" x2="1211.5" y2="423.0" stroke="#0000ff" stroke-width="1" stroke-dasharray="3 3" stroke-dashoffset="0"/>
<line x1="1219.5" y1="363.6" x2="1219.5" y2="423.0" stroke="#0000ff" stroke-width="1" stroke-dasharray="3 3" stroke-dashoffset="0"/>
<line x1="1227.5" y1="362.4" x2="1227.5" y2="423.0" stroke="#0000ff" stroke-width="1" stroke-dasharray="3 3" stroke-dashoffset="0"/>
<line x1="1235.5" y1="362.0" x2="1235.5" y2="423.0" stroke="#0000ff" stroke-width="1" stroke-dasharray="3 3" stroke-dashoffset="0"/>
<line x1="1243.5" y1="362.0" x2="1243.5" y2="423.0" stroke="#0000ff" stroke-width="1" stroke-dasharray="3 3" stroke-dashoffset="0"/>
<line x1="1251.5" y1="362.0" x2="1251.5" y2="423.0" stroke="#0000ff" stroke-width="1" stroke-dasharray="3 3" stroke-dashoffset="0"/>
<line x1="1259.5" y1="362.0" x2="1259.5" y2="423.0" stroke="#0000ff" stroke-width="1" stroke-dasharray="3 3" stroke-dashoffset="0"/>
<line x1="1267.5" y1="362.0" x2="1267.5" y2="423.0" stroke="#0000ff" stroke-width="1" stroke-dasharray="3 3" stroke-dashoffset="0"/>
<line x1="1275.5" y1="350.0" x2="1275.5" y2="423.0" stroke="#0000ff" stroke-width="1" stroke-dasharray="3 3" stroke-dashoffset="0"/>
<line x1="1283.5" y1="350.0" x2="1283.5" y2="423.0" stroke="#0000ff" stroke-width="1" stroke-dasharray="3 3" stroke-dashoffset="0"/>
<line x1="1291.5" y1="350.0" x2="1291.5" y2="423.0" stroke="#0000ff" stroke-width="1" stroke-dasharray="3 3" stroke-dashoffset="0"/>
<line x1="1299.5" y1="350.0" x2="1299.5" y2="423.0" stroke="#0000ff" stroke-width="1" stroke-dasharray="3 3" stroke-dashoffset="0"/>
<line x1="1307.5" y1="335.0" x2="1307.5" y2="423.0" stroke="#0000ff" stroke-width="1" stroke-dasharray="3 3" stroke-dashoffset="0"/>
<line x1="1315.5" y1="335.0" x2="1315.5" y2="423.0" stroke="#0000ff" stroke-width="1" stroke-dasharray="3 3" stroke-dashoffset="0"/>
<line x1="1323.5" y1="335.0" x2="1323.5" y2="423.0" stroke="#0000ff" stroke-width="1" stroke-dasharray="3 3" stroke-dashoffset="0"/>
<line x1="1331.5" y1="335.0" x2="1331.5" y2="423.0" stroke="#0000ff" stroke-width="1" stroke-dasharray="3 3" stroke-dashoffset="0"/>
<line x1="1339.5" y1="273.0" x2="1339.5" y2="423.0" stroke="#0000ff" stroke-width="1" stroke-dasharray="3 3" stroke-dashoffset="0"/>
<line x1="1347.5" y1="273.0" x2="1347.5" y2="423.0" stroke="#0000ff" stroke-width="1" stroke-dasharray="3 3" stroke-dashoffset="0"/>
<line x1="1355.5" y1="273.0" x2="1355.5" y2="423.0" stroke="#0000ff" stroke-width="1" stroke-dasharray="3 3" stroke-dashoffset="0"/>
<line x1="1363.5" y1="273.0" x2="1363.5" y2="423.0" stroke="#0000ff" stroke-width="1" stroke-dasharray="3 3" stroke-dashoffset="0"/>
<line x1="1371.5" y1="252.0" x2="1371.5" y2="423.0" stroke="#0000ff" stroke-width="1" stroke-dasharray="3 3" stroke-dashoffset="0"/>
<line x1="1379.5" y1="252.0" x2="1379.5" y2="423.0" stroke="#0000ff" stroke-width="1" stroke-dasharray="3 3" stroke-dashoffset="0"/>
<line x1="1387.5" y1="252.0" x2="1387.5" y2="423.0" stroke="#0000ff" stroke-width="1" stroke-dasharray="3 3" stroke-dashoffset="0"/>
<line x1="1395.5" y1="252.0" x2="1395.5" y2="423.0" stroke="#0000ff" stroke-width="1" stroke-dasharray="3 3" stroke-dashoffset="0"/>
<line x1="1403.5" y1="243.0" x2="1403.5" y2="423.0" stroke="#0000ff" stroke-width="1" stroke-dasharray="3 3" stroke-dashoffset="0"/>
<line x1="1411.5" y1="243.0" x2="1411.5" y2="423.0" stroke="#0000ff" stroke-width="1" stroke-dasharray="3 3" stroke-dashoffset="0"/>
<line x1="1419.5" y1="243.0" x2="1419.5" y2="423.0" stroke="#0000ff" stroke-width="1" stroke-dasharray="3 3" stroke-dashoffset="0"/>
<line x1="1427.5" y1="243.0" x2="1427.5" y2="423.0" stroke="#0000ff" stroke-width="1" stroke-dasharray="3 3" stroke-dashoffset="0"/>
<line x1="1435.5" y1="258.6" x2="1435.5" y2="423.0" stroke="#0000ff" stroke-width="1" stroke-dasharray="3 3" stroke-dashoffset="0"/>
<line x1="1443.5" y1="263.0" x2="1443.5" y2="423.0" stroke="#0000ff" stroke-width="1" stroke-dasharray="3 3" stroke-dashoffset="0"/>
<line x1="1451.5" y1="263.0" x2="1451.5" y2="423.0" stroke="#0000ff" stroke-width="1" stroke-dasharray="3 3" stroke-dashoffset="0"/>
<line x1="1459.5" y1="263.0" x2="1459.5" y2="423.0" stroke="#0000ff" stroke-width="1" stroke-dasharray="3 3" stroke-dashoffset="0"/>
<line x1="1467.5" y1="298.0" x2="1467.5" y2="423.0" stroke="#0000ff" stroke-width="1" stroke-dasharray="3 3" stroke-dashoffset="0"/>
<line x1="1475.5" y1="298.0" x2="1475.5" y2="423.0" stroke="#0000ff" stroke-width="1" stroke-dasharray="3 3" stroke-dashoffset="0"/>
<line x1="1483.5" y1="298.0" x2="1483.5" y2="423.0" stroke="#0000ff" stroke-width="1" stroke-dasharray="3 3" stroke-dashoffset="0"/>
<line x1="1491.5" y1="298.0" x2="1491.5" y2="423.0" stroke="#0000ff" stroke-width="1" stroke-dasharray="3 3" stroke-dashoffset="0"/>
<line x1="1499.5" y1="311.1" x2="1499.5" y2="423.0" stroke="#0000ff" stroke-width="1" stroke-dasharray="3 3" stroke-dashoffset="0"/>
<line x1="1507.5" y1="313.3" x2="1507.5" y2="423.0" stroke="#0000ff" stroke-width="1" stroke-dasharray="3 3" stroke-dashoffset="0"/>
<line x1="1515.5" y1="313.6" x2="1515.5" y2="423.0" stroke="#0000ff" stroke-width="1" stroke-dasharray="3 3" stroke-dashoffset="0"/>
<line x1="1523.5" y1="314.0" x2="1523.5" y2="423.0" stroke="#0000ff" stroke-width="1" stroke-dasharray="3 3" stroke-dashoffset="0"/>
<line x1="1531.5" y1="319.5" x2="1531.5" y2="423.0" stroke="#0000ff" stroke-width="1" stroke-dasharray="3 3" stroke-dashoffset="0"/>
<line x1="1539.5" y1="320.0" x2="1539.5" y2="423.0" stroke="#0000ff" stroke-width="1" stroke-dasharray="3 3" stroke-dashoffset="0"/>
<line x1="1547.5" y1="320.0" x2="1547.5" y2="423.0" stroke="#0000ff" stroke-width="1" stroke-dasharray="3 3" stroke-dashoffset="0"/>
<line x1="1555.5" y1="320.0" x2="1555.5" y2="423.0" stroke="#0000ff" stroke-width="1" stroke-dasharray="3 3" stroke-dashoffset="0"/>
<line x1="1563.5" y1="332.3" x2="1563.5" y2="423.0" stroke="#0000ff" stroke-width="1" stroke-dasharray="3 3" stroke-dashoffset="0"/>
<line x1="1571.5" y1="333.0" x2="1571.5" y2="423.0" stroke="#0000ff" stroke-width="1" stroke-dasharray="3 3" stroke-dashoffset="0"/>
<line x1="1579.5" y1="333.0" x2="1579.5" y2="423.0" stroke="#0000ff" stroke-width="1" stroke-dasharray="3 3" stroke-dashoffset="0"/>
<line x1="1587.5" y1="333.0" x2="1587.5" y2="423.0" stroke="#0000ff" stroke-width="1" stroke-dasharray="3 3" stroke-dashoffset="0"/>
<line x1="1595.5" y1="342.0" x2="1595.5" y2="423.0" stroke="#0000ff" stroke-width="1" stroke-dasharray="3 3" stroke-dashoffset="0"/>
<line x1="1603.5" y1="342.0" x2="1603.5" y2="423.0" stroke="#0000ff" stroke-width="1" stroke-dasharray="3 3" stroke-dashoffset="0"/>
<line x1="1611.5" y1="342.0" x2="1611.5" y2="423.0" stroke="#0000ff" stroke-width="1" stroke-dasharray="3 3" stroke-dashoffset="0"/>
<line x1="1619.5" y1="342.0" x2="1619.5" y2="423.0" stroke="#0000ff" stroke-width="1" stroke-dasharray="3 3" stroke-dashoffset="0"/>
<line x1="1627.5" y1="345.0" x2="1627.5" y2="423.0" stroke="#0000ff" stroke-width="1" stroke-dasharray="3 3" stroke-dashoffset="0"/>
<line x1="1635.5" y1="345.0" x2="1635.5" y2="423.0" stroke="#0000ff" stroke-width="1" stroke-dasharray="3 3" stroke-dashoffset="0"/>
<line x1="1643.5" y1="345.0" x2="1643.5" y2="423.0" stroke="#0000ff" stroke-width="1" stroke-dasharray="3 3" stroke-dashoffset="0"/>
<line x1="1651.5" y1="345.0" x2="1651.5" y2="423.0" stroke="#0000ff" stroke-width="1" stroke-dasharray="3 3" stroke-dashoffset="0"/>
<line x1="1659.5" y1="367.4" x2="1659.5" y2="423.0" stroke="#0000ff" stroke-width="1" stroke-dasharray="3 3" stroke-dashoffset="0"/>
<line x1="1667.5" y1="369.6" x2="1667.5" y2="423.0" stroke="#0000ff" stroke-width="1" stroke-dasharray="3 3" stroke-dashoffset="0"/>
<line x1="1675.5" y1="369.6" x2="1675.5" y2="423.0" stroke="#0000ff" stroke-width="1" stroke-dasharray="3 3" stroke-dashoffset="0"/>
<line x1="1683.5" y1="369.6" x2="1683.5" y2="423.0" stroke="#0000ff" stroke-width="1" stroke-dasharray="3 3" stroke-dashoffset="0"/>
<line x1="1691.5" y1="369.6" x2="1691.5" y2="423.0" stroke="#0000ff" stroke-width="1" stroke-dasharray="3 3" stroke-dashoffset="0"/>
<line x1="1699.5" y1="369.6" x2="1699.5" y2="423.0" stroke="#0000ff" stroke-width="1" stroke-dasharray="3 3" stroke-dashoffset="0"/>
<line x1="1707.5" y1="369.6" x2="1707.5" y2="423.0" stroke="#0000ff" stroke-width="1" stroke-dasharray="3 3" stroke-dashoffset="0"/>
<line x1="1715.5" y1="369.6" x2="1715.5" y2="423.0" stroke="#0000ff" stroke-width="1" stroke-dasharray="3 3" stroke-dashoffset="0"/>
<line x1="1723.5" y1="361.0" x2="1723.5" y2="423.0" stroke="#0000ff" stroke-width="1" stroke-dasharray="3 3" stroke-dashoffset="0"/>
<line x1="1731.5" y1="361.0" x2="1731.5" y2="423.0" stroke="#0000ff" stroke-width="1" stroke-dasharray="3 3" stroke-dashoffset="0"/>
<line x1="1739.5" y1="361.0" x2="1739.5" y2="423.0" stroke="#0000ff" stroke-width="1" stroke-dasharray="3 3" stroke-dashoffset="0"/>
<line x1="1747.5" y1="361.0" x2="1747.5" y2="423.0" stroke="#0000ff" stroke-width="1" stroke-dasharray="3 3" stroke-dashoffset="0"/>
<line x1="1755.5" y1="361.0" x2="1755.5" y2="423.0" stroke="#0000ff" stroke-width="1" stroke-dasharray="3 3" stroke-dashoffset="0"/>
<line x1="1763.5" y1="361.0" x2="1763.5" y2="423.0" stroke="#0000ff" stroke-width="1" stroke-dasharray="3 3" stroke-dashoffset="0"/>
<line x1="1771.5" y1="361.0" x2="1771.5" y2="423.0" stroke="#0000ff" stroke-width="1" stroke-dasharray="3 3" stroke-dashoffset="0"/>
<line x1="1779.5" y1="361.0" x2="1779.5" y2="423.0" stroke="#0000ff" stroke-width="1" stroke-dasharray="3 3" stroke-dashoffset="0"/>
<line x1="1787.5" y1="365.5" x2="1787.5" y2="423.0" stroke="#0000ff" stroke-width="1" stroke-dasharray="3 3" stroke-dashoffset="0"/>
<line x1="1795.5" y1="365.9" x2="1795.5" y2="423.0" stroke="#0000ff" stroke-width="1" stroke-dasharray="3 3" stroke-dashoffset="0"/>
<line x1="1803.5" y1="365.7" x2="1803.5" y2="423.0" stroke="#0000ff" stroke-width="1" stroke-dasharray="3 3" stroke-dashoffset="0"/>
<line x1="1811.5" y1="365.6" x2="1811.5" y2="423.0" stroke="#0000ff" stroke-width="1" stroke-dasharray="3 3" stroke-dashoffset="0"/>
<line x1="1819.5" y1="365.4" x2="1819.5" y2="423.0" stroke="#0000ff" stroke-width="1" stroke-dasharray="3 3" stroke-dashoffset="0"/>
<line x1="1827.5" y1="365.3" x2="1827.5" y2="423.0" stroke="#0000ff" stroke-width="1" stroke-dasharray="3 3" stroke-dashoffset="0"/>
<line x1="1835.5" y1="365.2" x2="1835.5" y2="423.0" stroke="#0000ff" stroke-width="1" stroke-dasharray="3 3" stroke-dashoffset="0"/>
<line x1="1843.5" y1="365.0" x2="1843.5" y2="423.0" stroke="#0000ff" stroke-width="1" stroke-dasharray="3 3" stroke-dashoffset="0"/>
<line x1="1851.5" y1="351.4" x2="1851.5" y2="423.0" stroke="#0000ff" stroke-width="1" stroke-dasharray="3 3" stroke-dashoffset="0"/>
<line x1="1859.5" y1="351.4" x2="1859.5" y2="423.0" stroke="#0000ff" stroke-width="1" stroke-dasharray="3 3" stroke-dashoffset="0"/>
<line x1="1867.5" y1="351.4" x2="1867.5" y2="423.0" stroke="#0000ff" stroke-width="1" stroke-dasharray="3 3" stroke-dashoffset="0"/>
<line x1="11.5" y1="572.5" x2="11.5" y2="658.3" stroke="#D8BFD8" stroke-width="1" stroke-dasharray="3 3" stroke-dashoffset="0"/>
<line x1="19.5" y1="572.5" x2="19.5" y2="659.7" stroke="#D8BFD8" stroke-width="1" stroke-dasharray="3 3" stroke-dashoffset="0"/>
<line x1="27.5" y1="577.2" x2="27.5" y2="661.0" stroke="#D8BFD8" stroke-width="1" stroke-dasharray="3 3" stroke-dashoffset="0"/>
<line x1="35.5" y1="578.1" x2="35.5" y2="664.8" stroke="#D8BFD8" stroke-width="1" stroke-dasharray="3 3" stroke-dashoffset="0"/>
<line x1="43.5" y1="578.8" x2="43.5" y2="668.7" stroke="#D8BFD8" stroke-width="1" stroke-dasharray="3 3" stroke-dashoffset="0"/>
<line x1="51.5" y1="587.0" x2="51.5" y2="672.4" stroke="#D8BFD8" stroke-width="1" stroke-dasharray="3 3" stroke-dashoffset="0"/>
<line x1="59.5" y1="591.3" x2="59.5" y2="675.2" stroke="#D8BFD8" stroke-width="1" stroke-dasharray="3 3" stroke-dashoffset="0"/>
<line x1="67.5" y1="591.8" x2="67.5" y2="678.0" stroke="#D8BFD8" stroke-width="1" stroke-dasharray="3 3" stroke-dashoffset="0"/>
<line x1="75.5" y1="592.3" x2="75.5" y2="681.9" stroke="#D8BFD8" stroke-width="1" stroke-dasharray="3 3" stroke-dashoffset="0"/>
<line x1="83.5" y1="599.8" x2="83.5" y2="689.3" stroke="#D8BFD8" stroke-width="1" stroke-dasharray="3 3" stroke-dashoffset="0"/>
<line x1="91.5" y1="624.0" x2="91.5" y2="712.5" stroke="#D8BFD8" stroke-width="1" stroke-dasharray="3 3" stroke-dashoffset="0"/>
<line x1="99.5" y1="624.0" x2="99.5" y2="712.5" stroke="#D8BFD8" stroke-width="1" stroke-dasharray="3 3" stroke-dashoffset="0"/>
<line x1="107.5" y1="624.0" x2="107.5" y2="712.5" stroke="#D8BFD8" stroke-width="1" stroke-dasharray="3 3" stroke-dashoffset="0"/>
<line x1="115.5" y1="624.0" x2="115.5" y2="715.1" stroke="#D8BFD8" stroke-width="1" stroke-dasharray="3 3" stroke-dashoffset="0"/>
<line x1="123.5" y1="624.7" x2="123.5" y2="719.0" stroke="#D8BFD8" stroke-width="1" stroke-dasharray="3 3" stroke-dashoffset="0"/>
<line x1="131.5" y1="637.5" x2="131.5" y2="719.9" stroke="#D8BFD8" stroke-width="1" stroke-dasharray="3 3" stroke-dashoffset="0"/>
<line x1="139.5" y1="657.5" x2="139.5" y2="720.6" stroke="#D8BFD8" stroke-width="1" stroke-dasharray="3 3" stroke-dashoffset="0"/>
<line x1="147.5" y1="679.0" x2="147.5" y2="724.0" stroke="#D8BFD8" stroke-width="1" stroke-dasharray="3 3" stroke-dashoffset="0"/>
<line x1="155.5" y1="686.2" x2="155.5" y2="727.0" stroke="#D8BFD8" stroke-width="1" stroke-dasharray="3 3" stroke-dashoffset="0"/>
<line x1="163.5" y1="690.0" x2="163.5" y2="728.6" stroke="#D8BFD8" stroke-width="1" stroke-dasharray="3 3" stroke-dashoffset="0"/>
<line x1="171.5" y1="690.0" x2="171.5" y2="730.2" stroke="#D8BFD8" stroke-width="1" stroke-dasharray="3 3" stroke-dashoffset="0"/>
<line x1="179.5" y1="690.0" x2="179.5" y2="732.1" stroke="#D8BFD8" stroke-width="1" stroke-dasharray="3 3" stroke-dashoffset="0"/>
<line x1="187.5" y1="690.0" x2="187.5" y2="733.9" stroke="#D8BFD8" stroke-width="1" stroke-dasharray="3 3" stroke-dashoffset="0"/>
<line x1="195.5" y1="690.0" x2="195.5" y2="730.0" stroke="#D8BFD8" stroke-width="1" stroke-dasharray="3 3" stroke-dashoffset="0"/>
<line x1="203.5" y1="690.0" x2="203.5" y2="726.0" stroke="#D8BFD8" stroke-width="1" stroke-dasharray="3 3" stroke-dashoffset="0"/>
<line x1="211.5" y1="690.0" x2="211.5" y2="715.0" stroke="#D8BFD8" stroke-width="1" stroke-dasharray="3 3" stroke-dashoffset="0"/>
<line x1="219.5" y1="690.0" x2="219.5" y2="706.0" stroke="#D8BFD8" stroke-width="1" stroke-dasharray="3 3" stroke-dashoffset="0"/>
<polyline points="3.0,572.5 19.0,572.5 27.5,577.5 45.0,579.0 54.0,591.0 77.5,592.5 85.0,602.5 90.0,624.0 122.5,624.0 130.0,635.0 134.0,645.0 140.0,660.0 142.5,670.0 147.5,680.0 152.5,685.0 162.5,690.0 220.0,690.0 224.0,690.0" fill="none" stroke="#D8BFD8" stroke-width="1" stroke-dasharray="3 3"/>
<polyline points="3.0,657.0 27.0,661.0 50.0,672.0 72.5,680.0 82.5,687.5 86.0,700.0 91.0,712.5 110.0,712.5 122.5,719.0 142.5,721.0 150.0,726.0 170.0,730.0 187.5,734.0 195.0,730.0 205.0,725.0 212.5,712.5 220.0,705.0 224.0,690.0" fill="none" stroke="#F4A460" stroke-width="1" stroke-dasharray="3 3"/>
<line x1="227.5" y1="681.4" x2="227.5" y2="684.3" stroke="#F4A460" stroke-width="1" stroke-dasharray="3 3" stroke-dashoffset="0"/>
<line x1="235.5" y1="666.2" x2="235.5" y2="669.0" stroke="#F4A460" stroke-width="1" stroke-dasharray="3 3" stroke-dashoffset="0"/>
<line x1="243.5" y1="651.9" x2="243.5" y2="669.0" stroke="#F4A460" stroke-width="1" stroke-dasharray="3 3" stroke-dashoffset="0"/>
<line x1="251.5" y1="641.9" x2="251.5" y2="669.0" stroke="#F4A460" stroke-width="1" stroke-dasharray="3 3" stroke-dashoffset="0"/>
<line x1="259.5" y1="636.6" x2="259.5" y2="669.0" stroke="#F4A460" stroke-width="1" stroke-dasharray="3 3" stroke-dashoffset="0"/>
<line x1="267.5" y1="628.1" x2="267.5" y2="669.0" stroke="#F4A460" stroke-width="1" stroke-dasharray="3 3" stroke-dashoffset="0"/>
<line x1="275.5" y1="621.9" x2="275.5" y2="669.0" stroke="#F4A460" stroke-width="1" stroke-dasharray="3 3" stroke-dashoffset="0"/>
<line x1="283.5" y1="609.6" x2="283.5" y2="665.3" stroke="#F4A460" stroke-width="1" stroke-dasharray="3 3" stroke-dashoffset="0"/>
<line x1="291.5" y1="604.0" x2="291.5" y2="664.0" stroke="#F4A460" stroke-width="1" stroke-dasharray="3 3" stroke-dashoffset="0"/>
<line x1="299.5" y1="604.0" x2="299.5" y2="664.0" stroke="#F4A460" stroke-width="1" stroke-dasharray="3 3" stroke-dashoffset="0"/>
<line x1="307.5" y1="604.0" x2="307.5" y2="664.0" stroke="#F4A460" stroke-width="1" stroke-dasharray="3 3" stroke-dashoffset="0"/>
<line x1="315.5" y1="604.0" x2="315.5" y2="664.0" stroke="#F4A460" stroke-width="1" stroke-dasharray="3 3" stroke-dashoffset="0"/>
<line x1="323.5" y1="603.0" x2="323.5" y2="659.8" stroke="#F4A460" stroke-width="1" stroke-dasharray="3 3" stroke-dashoffset="0"/>
<line x1="331.5" y1="596.0" x2="331.5" y2="656.6" stroke="#F4A460" stroke-width="1" stroke-dasharray="3 3" stroke-dashoffset="0"/>
<line x1="339.5" y1="591.9" x2="339.5" y2="655.0" stroke="#F4A460" stroke-width="1" stroke-dasharray="3 3" stroke-dashoffset="0"/>
<line x1="347.5" y1="587.0" x2="347.5" y2="653.8" stroke="#F4A460" stroke-width="1" stroke-dasharray="3 3" stroke-dashoffset="0"/>
<line x1="355.5" y1="578.8" x2="355.5" y2="652.6" stroke="#F4A460" stroke-width="1" stroke-dasharray="3 3" stroke-dashoffset="0"/>
<line x1="363.5" y1="571.5" x2="363.5" y2="651.4" stroke="#F4A460" stroke-width="1" stroke-dasharray="3 3" stroke-dashoffset="0"/>
<line x1="371.5" y1="568.8" x2="371.5" y2="650.2" stroke="#F4A460" stroke-width="1" stroke-dasharray="3 3" stroke-dashoffset="0"/>
<line x1="379.5" y1="566.5" x2="379.5" y2="647.4" stroke="#F4A460" stroke-width="1" stroke-dasharray="3 3" stroke-dashoffset="0"/>
<line x1="387.5" y1="565.0" x2="387.5" y2="645.6" stroke="#F4A460" stroke-width="1" stroke-dasharray="3 3" stroke-dashoffset="0"/>
<line x1="395.5" y1="565.0" x2="395.5" y2="644.9" stroke="#F4A460" stroke-width="1" stroke-dasharray="3 3" stroke-dashoffset="0"/>
<line x1="403.5" y1="565.0" x2="403.5" y2="644.2" stroke="#F4A460" stroke-width="1" stroke-dasharray="3 3" stroke-dashoffset="0"/>
<line x1="411.5" y1="562.5" x2="411.5" y2="637.6" stroke="#F4A460" stroke-width="1" stroke-dasharray="3 3" stroke-dashoffset="0"/>
<line x1="419.5" y1="541.4" x2="419.5" y2="630.5" stroke="#F4A460" stroke-width="1" stroke-dasharray="3 3" stroke-dashoffset="0"/>
<line x1="427.5" y1="516.2" x2="427.5" y2="621.5" stroke="#F4A460" stroke-width="1" stroke-dasharray="3 3" stroke-dashoffset="0"/>
<line x1="435.5" y1="501.0" x2="435.5" y2="616.3" stroke="#F4A460" stroke-width="1" stroke-dasharray="3 3" stroke-dashoffset="0"/>
<line x1="443.5" y1="499.7" x2="443.5" y2="614.5" stroke="#F4A460" stroke-width="1" stroke-dasharray="3 3" stroke-dashoffset="0"/>
<line x1="451.5" y1="498.3" x2="451.5" y2="613.7" stroke="#F4A460" stroke-width="1" stroke-dasharray="3 3" stroke-dashoffset="0"/>
<line x1="459.5" y1="496.9" x2="459.5" y2="613.4" stroke="#F4A460" stroke-width="1" stroke-dasharray="3 3" stroke-dashoffset="0"/>
<line x1="467.5" y1="499.2" x2="467.5" y2="613.1" stroke="#F4A460" stroke-width="1" stroke-dasharray="3 3" stroke-dashoffset="0"/>
<line x1="475.5" y1="523.0" x2="475.5" y2="612.7" stroke="#F4A460" stroke-width="1" stroke-dasharray="3 3" stroke-dashoffset="0"/>
<line x1="483.5" y1="523.7" x2="483.5" y2="612.5" stroke="#F4A460" stroke-width="1" stroke-dasharray="3 3" stroke-dashoffset="0"/>
<line x1="491.5" y1="524.3" x2="491.5" y2="612.5" stroke="#F4A460" stroke-width="1" stroke-dasharray="3 3" stroke-dashoffset="0"/>
<line x1="499.5" y1="525.0" x2="499.5" y2="612.5" stroke="#F4A460" stroke-width="1" stroke-dasharray="3 3" stroke-dashoffset="0"/>
<line x1="507.5" y1="529.9" x2="507.5" y2="612.5" stroke="#F4A460" stroke-width="1" stroke-dasharray="3 3" stroke-dashoffset="0"/>
<line x1="515.5" y1="532.2" x2="515.5" y2="612.5" stroke="#F4A460" stroke-width="1" stroke-dasharray="3 3" stroke-dashoffset="0"/>
<line x1="523.5" y1="532.9" x2="523.5" y2="595.0" stroke="#F4A460" stroke-width="1" stroke-dasharray="3 3" stroke-dashoffset="0"/>
<line x1="531.5" y1="537.8" x2="531.5" y2="575.0" stroke="#F4A460" stroke-width="1" stroke-dasharray="3 3" stroke-dashoffset="0"/>
<line x1="539.5" y1="536.4" x2="539.5" y2="565.7" stroke="#F4A460" stroke-width="1" stroke-dasharray="3 3" stroke-dashoffset="0"/>
<line x1="547.5" y1="534.4" x2="547.5" y2="553.3" stroke="#F4A460" stroke-width="1" stroke-dasharray="3 3" stroke-dashoffset="0"/>
<line x1="555.5" y1="532.7" x2="555.5" y2="540.0" stroke="#F4A460" stroke-width="1" stroke-dasharray="3 3" stroke-dashoffset="0"/>
<line x1="571.5" y1="525.6" x2="571.5" y2="527.8" stroke="#F4A460" stroke-width="1" stroke-dasharray="3 3" stroke-dashoffset="0"/>
<polyline points="224.0,690.0 227.5,680.0 232.5,670.0 237.5,662.5 244.0,650.0 250.0,642.5 260.0,636.0 267.5,627.5 277.5,620.0 282.5,610.0 290.0,604.0 322.5,604.0 325.0,599.0 335.0,594.0 342.5,590.0 350.0,585.0 360.0,572.5 375.0,567.5 385.0,565.0 410.0,565.0 418.0,545.0 425.0,520.0 435.0,501.0 456.0,497.5 465.0,495.6 468.0,501.0 474.0,514.0 475.0,523.0 499.0,525.0 504.0,529.0 516.0,532.5 525.0,533.0 532.5,539.0 541.0,535.6 556.0,532.5 580.0,525.0" fill="none" stroke="#F4A460" stroke-width="1" stroke-dasharray="3 3"/>
<polyline points="224.0,690.0 235.0,669.0 277.5,669.0 285.0,664.0 315.0,664.0 322.5,660.0 332.5,656.0 372.5,650.0 382.5,646.0 405.0,644.0 412.5,636.0 422.5,627.5 430.0,617.5 445.0,614.0 480.0,612.5 516.0,612.5 525.0,590.0 534.0,567.5 541.0,565.0 550.0,547.5 560.0,532.5 565.0,526.0 580.0,525.0" fill="none" stroke="#D8BFD8" stroke-width="1" stroke-dasharray="3 3"/>
<line x1="587.5" y1="501.1" x2="587.5" y2="505.2" stroke="#F4A460" stroke-width="1" stroke-dasharray="3 3" stroke-dashoffset="0"/>
<line x1="595.5" y1="495.6" x2="595.5" y2="504.0" stroke="#F4A460" stroke-width="1" stroke-dasharray="3 3" stroke-dashoffset="0"/>
<line x1="603.5" y1="489.1" x2="603.5" y2="502.4" stroke="#F4A460" stroke-width="1" stroke-dasharray="3 3" stroke-dashoffset="0"/>
<line x1="611.5" y1="456.0" x2="611.5" y2="473.3" stroke="#F4A460" stroke-width="1" stroke-dasharray="3 3" stroke-dashoffset="0"/>
<line x1="619.5" y1="430.0" x2="619.5" y2="442.2" stroke="#F4A460" stroke-width="1" stroke-dasharray="3 3" stroke-dashoffset="0"/>
<line x1="627.5" y1="403.0" x2="627.5" y2="414.6" stroke="#F4A460" stroke-width="1" stroke-dasharray="3 3" stroke-dashoffset="0"/>
<line x1="635.5" y1="382.7" x2="635.5" y2="397.5" stroke="#F4A460" stroke-width="1" stroke-dasharray="3 3" stroke-dashoffset="0"/>
<line x1="643.5" y1="360.7" x2="643.5" y2="367.7" stroke="#F4A460" stroke-width="1" stroke-dasharray="3 3" stroke-dashoffset="0"/>
<line x1="651.5" y1="331.8" x2="651.5" y2="365.4" stroke="#F4A460" stroke-width="1" stroke-dasharray="3 3" stroke-dashoffset="0"/>
<line x1="659.5" y1="326.6" x2="659.5" y2="363.1" stroke="#F4A460" stroke-width="1" stroke-dasharray="3 3" stroke-dashoffset="0"/>
<line x1="667.5" y1="318.1" x2="667.5" y2="360.9" stroke="#F4A460" stroke-width="1" stroke-dasharray="3 3" stroke-dashoffset="0"/>
<line x1="675.5" y1="277.5" x2="675.5" y2="358.8" stroke="#F4A460" stroke-width="1" stroke-dasharray="3 3" stroke-dashoffset="0"/>
<line x1="683.5" y1="260.8" x2="683.5" y2="356.8" stroke="#F4A460" stroke-width="1" stroke-dasharray="3 3" stroke-dashoffset="0"/>
<line x1="691.5" y1="249.5" x2="691.5" y2="354.0" stroke="#F4A460" stroke-width="1" stroke-dasharray="3 3" stroke-dashoffset="0"/>
<line x1="699.5" y1="237.5" x2="699.5" y2="338.0" stroke="#F4A460" stroke-width="1" stroke-dasharray="3 3" stroke-dashoffset="0"/>
<line x1="707.5" y1="234.1" x2="707.5" y2="335.0" stroke="#F4A460" stroke-width="1" stroke-dasharray="3 3" stroke-dashoffset="0"/>
<line x1="715.5" y1="231.9" x2="715.5" y2="335.0" stroke="#F4A460" stroke-width="1" stroke-dasharray="3 3" stroke-dashoffset="0"/>
<line x1="723.5" y1="225.3" x2="723.5" y2="335.0" stroke="#F4A460" stroke-width="1" stroke-dasharray="3 3" stroke-dashoffset="0"/>
<line x1="731.5" y1="191.8" x2="731.5" y2="334.8" stroke="#F4A460" stroke-width="1" stroke-dasharray="3 3" stroke-dashoffset="0"/>
<line x1="739.5" y1="189.0" x2="739.5" y2="334.7" stroke="#F4A460" stroke-width="1" stroke-dasharray="3 3" stroke-dashoffset="0"/>
<line x1="747.5" y1="189.0" x2="747.5" y2="334.6" stroke="#F4A460" stroke-width="1" stroke-dasharray="3 3" stroke-dashoffset="0"/>
<line x1="755.5" y1="186.8" x2="755.5" y2="334.5" stroke="#F4A460" stroke-width="1" stroke-dasharray="3 3" stroke-dashoffset="0"/>
<line x1="763.5" y1="182.1" x2="763.5" y2="334.3" stroke="#F4A460" stroke-width="1" stroke-dasharray="3 3" stroke-dashoffset="0"/>
<line x1="771.5" y1="181.2" x2="771.5" y2="334.2" stroke="#F4A460" stroke-width="1" stroke-dasharray="3 3" stroke-dashoffset="0"/>
<line x1="779.5" y1="170.5" x2="779.5" y2="334.1" stroke="#F4A460" stroke-width="1" stroke-dasharray="3 3" stroke-dashoffset="0"/>
<line x1="787.5" y1="142.0" x2="787.5" y2="333.1" stroke="#F4A460" stroke-width="1" stroke-dasharray="3 3" stroke-dashoffset="0"/>
<line x1="795.5" y1="129.0" x2="795.5" y2="329.4" stroke="#F4A460" stroke-width="1" stroke-dasharray="3 3" stroke-dashoffset="0"/>
<line x1="803.5" y1="129.0" x2="803.5" y2="325.7" stroke="#F4A460" stroke-width="1" stroke-dasharray="3 3" stroke-dashoffset="0"/>
<line x1="811.5" y1="130.4" x2="811.5" y2="321.8" stroke="#F4A460" stroke-width="1" stroke-dasharray="3 3" stroke-dashoffset="0"/>
<line x1="819.5" y1="127.8" x2="819.5" y2="316.5" stroke="#F4A460" stroke-width="1" stroke-dasharray="3 3" stroke-dashoffset="0"/>
<line x1="827.5" y1="129.4" x2="827.5" y2="311.8" stroke="#F4A460" stroke-width="1" stroke-dasharray="3 3" stroke-dashoffset="0"/>
<line x1="835.5" y1="131.0" x2="835.5" y2="308.8" stroke="#F4A460" stroke-width="1" stroke-dasharray="3 3" stroke-dashoffset="0"/>
<line x1="843.5" y1="114.8" x2="843.5" y2="306.0" stroke="#F4A460" stroke-width="1" stroke-dasharray="3 3" stroke-dashoffset="0"/>
<line x1="851.5" y1="114.4" x2="851.5" y2="305.8" stroke="#F4A460" stroke-width="1" stroke-dasharray="3 3" stroke-dashoffset="0"/>
<line x1="859.5" y1="149.5" x2="859.5" y2="305.5" stroke="#F4A460" stroke-width="1" stroke-dasharray="3 3" stroke-dashoffset="0"/>
<line x1="867.5" y1="157.5" x2="867.5" y2="305.3" stroke="#F4A460" stroke-width="1" stroke-dasharray="3 3" stroke-dashoffset="0"/>
<line x1="875.5" y1="157.5" x2="875.5" y2="305.1" stroke="#F4A460" stroke-width="1" stroke-dasharray="3 3" stroke-dashoffset="0"/>
<line x1="883.5" y1="166.0" x2="883.5" y2="297.2" stroke="#F4A460" stroke-width="1" stroke-dasharray="3 3" stroke-dashoffset="0"/>
<line x1="891.5" y1="179.7" x2="891.5" y2="292.4" stroke="#F4A460" stroke-width="1" stroke-dasharray="3 3" stroke-dashoffset="0"/>
<line x1="899.5" y1="186.1" x2="899.5" y2="289.5" stroke="#F4A460" stroke-width="1" stroke-dasharray="3 3" stroke-dashoffset="0"/>
<line x1="907.5" y1="188.2" x2="907.5" y2="288.5" stroke="#F4A460" stroke-width="1" stroke-dasharray="3 3" stroke-dashoffset="0"/>
<line x1="915.5" y1="200.0" x2="915.5" y2="287.5" stroke="#F4A460" stroke-width="1" stroke-dasharray="3 3" stroke-dashoffset="0"/>
<line x1="923.5" y1="208.0" x2="923.5" y2="274.2" stroke="#F4A460" stroke-width="1" stroke-dasharray="3 3" stroke-dashoffset="0"/>
<line x1="931.5" y1="213.2" x2="931.5" y2="261.5" stroke="#F4A460" stroke-width="1" stroke-dasharray="3 3" stroke-dashoffset="0"/>
<line x1="939.5" y1="214.8" x2="939.5" y2="253.5" stroke="#F4A460" stroke-width="1" stroke-dasharray="3 3" stroke-dashoffset="0"/>
<line x1="947.5" y1="227.1" x2="947.5" y2="233.8" stroke="#F4A460" stroke-width="1" stroke-dasharray="3 3" stroke-dashoffset="0"/>
<polyline points="580.0,525.0 582.5,517.5 585.0,502.5 595.0,495.6 605.0,487.5 607.5,474.0 611.0,456.0 615.0,442.5 619.0,430.0 627.0,403.0 633.0,387.0 640.0,372.0 642.5,365.0 646.0,335.0 660.0,326.0 667.5,317.5 672.5,285.0 677.5,270.0 685.0,257.5 692.5,247.5 700.0,236.0 722.0,230.0 730.0,192.5 735.0,189.0 752.5,189.0 760.0,182.5 772.5,181.0 777.5,175.0 782.5,160.0 787.5,140.0 795.0,129.0 807.5,129.0 812.5,131.0 817.5,127.5 835.0,131.0 842.5,115.0 850.0,112.5 854.0,120.0 857.5,137.5 860.0,157.5 875.0,157.5 882.5,165.0 887.5,175.0 895.0,185.0 910.0,189.0 915.0,200.0 927.5,212.5 940.0,215.0 947.5,228.0" fill="none" stroke="#F4A460" stroke-width="1" stroke-dasharray="3 3"/>
<polyline points="580.0,525.0 586.0,507.5 587.5,504.0 602.5,504.0 606.0,492.5 612.5,467.5 617.5,450.0 620.0,437.0 630.0,405.0 640.0,390.0 642.0,368.0 670.0,360.0 690.0,355.0 695.0,350.0 700.0,335.0 720.0,335.0 785.0,334.0 810.0,322.5 825.0,312.5 842.5,306.0 877.5,305.0 882.5,297.5 895.0,290.0 915.0,287.5 922.5,275.0 930.0,262.5 942.5,250.0 947.5,232.0" fill="none" stroke="#D8BFD8" stroke-width="1" stroke-dasharray="3 3"/>
<line x1="955.5" y1="195.0" x2="955.5" y2="246.2" stroke="#D8BFD8" stroke-width="1" stroke-dasharray="3 3" stroke-dashoffset="0"/>
<line x1="963.5" y1="211.7" x2="963.5" y2="260.6" stroke="#D8BFD8" stroke-width="1" stroke-dasharray="3 3" stroke-dashoffset="0"/>
<line x1="971.5" y1="225.8" x2="971.5" y2="272.2" stroke="#D8BFD8" stroke-width="1" stroke-dasharray="3 3" stroke-dashoffset="0"/>
<line x1="979.5" y1="248.2" x2="979.5" y2="286.7" stroke="#D8BFD8" stroke-width="1" stroke-dasharray="3 3" stroke-dashoffset="0"/>
<line x1="987.5" y1="251.0" x2="987.5" y2="300.8" stroke="#D8BFD8" stroke-width="1" stroke-dasharray="3 3" stroke-dashoffset="0"/>
<line x1="995.5" y1="251.0" x2="995.5" y2="313.9" stroke="#D8BFD8" stroke-width="1" stroke-dasharray="3 3" stroke-dashoffset="0"/>
<line x1="1003.5" y1="251.0" x2="1003.5" y2="327.0" stroke="#D8BFD8" stroke-width="1" stroke-dasharray="3 3" stroke-dashoffset="0"/>
<line x1="1011.5" y1="254.3" x2="1011.5" y2="340.2" stroke="#D8BFD8" stroke-width="1" stroke-dasharray="3 3" stroke-dashoffset="0"/>
<line x1="1019.5" y1="278.3" x2="1019.5" y2="367.5" stroke="#D8BFD8" stroke-width="1" stroke-dasharray="3 3" stroke-dashoffset="0"/>
<line x1="1027.5" y1="281.0" x2="1027.5" y2="397.5" stroke="#D8BFD8" stroke-width="1" stroke-dasharray="3 3" stroke-dashoffset="0"/>
<line x1="1035.5" y1="281.0" x2="1035.5" y2="402.8" stroke="#D8BFD8" stroke-width="1" stroke-dasharray="3 3" stroke-dashoffset="0"/>
<line x1="1043.5" y1="281.0" x2="1043.5" y2="407.8" stroke="#D8BFD8" stroke-width="1" stroke-dasharray="3 3" stroke-dashoffset="0"/>
<line x1="1051.5" y1="281.0" x2="1051.5" y2="404.6" stroke="#D8BFD8" stroke-width="1" stroke-dasharray="3 3" stroke-dashoffset="0"/>
<line x1="1059.5" y1="281.0" x2="1059.5" y2="395.8" stroke="#D8BFD8" stroke-width="1" stroke-dasharray="3 3" stroke-dashoffset="0"/>
<line x1="1067.5" y1="289.3" x2="1067.5" y2="390.9" stroke="#D8BFD8" stroke-width="1" stroke-dasharray="3 3" stroke-dashoffset="0"/>
<line x1="1075.5" y1="290.6" x2="1075.5" y2="385.5" stroke="#D8BFD8" stroke-width="1" stroke-dasharray="3 3" stroke-dashoffset="0"/>
<line x1="1083.5" y1="295.8" x2="1083.5" y2="378.3" stroke="#D8BFD8" stroke-width="1" stroke-dasharray="3 3" stroke-dashoffset="0"/>
<line x1="1091.5" y1="302.8" x2="1091.5" y2="371.8" stroke="#D8BFD8" stroke-width="1" stroke-dasharray="3 3" stroke-dashoffset="0"/>
<line x1="1099.5" y1="304.8" x2="1099.5" y2="369.9" stroke="#D8BFD8" stroke-width="1" stroke-dasharray="3 3" stroke-dashoffset="0"/>
<line x1="1107.5" y1="305.0" x2="1107.5" y2="368.0" stroke="#D8BFD8" stroke-width="1" stroke-dasharray="3 3" stroke-dashoffset="0"/>
<line x1="1115.5" y1="305.0" x2="1115.5" y2="383.0" stroke="#D8BFD8" stroke-width="1" stroke-dasharray="3 3" stroke-dashoffset="0"/>
<line x1="1123.5" y1="305.0" x2="1123.5" y2="398.0" stroke="#D8BFD8" stroke-width="1" stroke-dasharray="3 3" stroke-dashoffset="0"/>
<line x1="1131.5" y1="305.0" x2="1131.5" y2="407.4" stroke="#D8BFD8" stroke-width="1" stroke-dasharray="3 3" stroke-dashoffset="0"/>
<line x1="1139.5" y1="305.0" x2="1139.5" y2="416.8" stroke="#D8BFD8" stroke-width="1" stroke-dasharray="3 3" stroke-dashoffset="0"/>
<line x1="1147.5" y1="309.7" x2="1147.5" y2="428.3" stroke="#D8BFD8" stroke-width="1" stroke-dasharray="3 3" stroke-dashoffset="0"/>
<line x1="1155.5" y1="320.0" x2="1155.5" y2="440.1" stroke="#D8BFD8" stroke-width="1" stroke-dasharray="3 3" stroke-dashoffset="0"/>
<line x1="1163.5" y1="326.6" x2="1163.5" y2="444.4" stroke="#D8BFD8" stroke-width="1" stroke-dasharray="3 3" stroke-dashoffset="0"/>
<line x1="1171.5" y1="330.3" x2="1171.5" y2="446.1" stroke="#D8BFD8" stroke-width="1" stroke-dasharray="3 3" stroke-dashoffset="0"/>
<line x1="1179.5" y1="330.9" x2="1179.5" y2="446.5" stroke="#D8BFD8" stroke-width="1" stroke-dasharray="3 3" stroke-dashoffset="0"/>
<line x1="1187.5" y1="340.9" x2="1187.5" y2="448.6" stroke="#D8BFD8" stroke-width="1" stroke-dasharray="3 3" stroke-dashoffset="0"/>
<line x1="1195.5" y1="354.0" x2="1195.5" y2="450.9" stroke="#D8BFD8" stroke-width="1" stroke-dasharray="3 3" stroke-dashoffset="0"/>
<line x1="1203.5" y1="365.0" x2="1203.5" y2="452.3" stroke="#D8BFD8" stroke-width="1" stroke-dasharray="3 3" stroke-dashoffset="0"/>
<line x1="1211.5" y1="373.0" x2="1211.5" y2="454.2" stroke="#D8BFD8" stroke-width="1" stroke-dasharray="3 3" stroke-dashoffset="0"/>
<line x1="1219.5" y1="373.0" x2="1219.5" y2="456.8" stroke="#D8BFD8" stroke-width="1" stroke-dasharray="3 3" stroke-dashoffset="0"/>
<line x1="1227.5" y1="373.0" x2="1227.5" y2="458.9" stroke="#D8BFD8" stroke-width="1" stroke-dasharray="3 3" stroke-dashoffset="0"/>
<line x1="1235.5" y1="373.0" x2="1235.5" y2="460.6" stroke="#D8BFD8" stroke-width="1" stroke-dasharray="3 3" stroke-dashoffset="0"/>
<line x1="1243.5" y1="373.0" x2="1243.5" y2="461.8" stroke="#D8BFD8" stroke-width="1" stroke-dasharray="3 3" stroke-dashoffset="0"/>
<line x1="1251.5" y1="373.0" x2="1251.5" y2="462.2" stroke="#D8BFD8" stroke-width="1" stroke-dasharray="3 3" stroke-dashoffset="0"/>
<line x1="1259.5" y1="374.3" x2="1259.5" y2="462.4" stroke="#D8BFD8" stroke-width="1" stroke-dasharray="3 3" stroke-dashoffset="0"/>
<line x1="1267.5" y1="378.0" x2="1267.5" y2="461.8" stroke="#D8BFD8" stroke-width="1" stroke-dasharray="3 3" stroke-dashoffset="0"/>
<line x1="1275.5" y1="380.0" x2="1275.5" y2="461.1" stroke="#D8BFD8" stroke-width="1" stroke-dasharray="3 3" stroke-dashoffset="0"/>
<line x1="1283.5" y1="416.9" x2="1283.5" y2="449.0" stroke="#D8BFD8" stroke-width="1" stroke-dasharray="3 3" stroke-dashoffset="0"/>
<polyline points="947.5,230.0 951.0,212.5 955.0,195.0 960.0,207.0 970.0,222.5 977.5,247.5 985.0,251.0 1010.0,251.0 1015.0,267.5 1020.0,281.0 1060.0,281.0 1065.0,289.0 1077.5,291.0 1085.0,297.5 1090.0,302.5 1100.0,305.0 1140.0,305.0 1147.5,310.0 1152.5,317.5 1157.5,322.5 1167.5,330.0 1180.0,331.0 1192.0,348.0 1197.0,358.0 1203.0,365.0 1210.0,373.0 1257.0,373.0 1263.0,377.0 1275.0,380.0 1288.0,440.0" fill="none" stroke="#D8BFD8" stroke-width="1" stroke-dasharray="3 3"/>
<polyline points="947.5,230.0 951.0,240.0 957.5,250.0 962.5,260.0 967.0,265.0 985.0,297.5 1017.0,350.0 1021.0,385.0 1027.0,397.5 1042.0,407.5 1047.0,409.0 1062.0,392.5 1070.0,390.0 1090.0,372.0 1107.0,368.0 1123.0,398.0 1140.0,418.0 1157.0,443.0 1170.0,446.0 1183.0,446.7 1190.0,450.0 1207.0,453.0 1223.0,458.0 1240.0,461.7 1257.0,462.5 1277.0,461.0 1285.0,445.0 1288.0,440.0" fill="none" stroke="#F4A460" stroke-width="1" stroke-dasharray="3 3"/>
<line x1="1379.5" y1="364.8" x2="1379.5" y2="392.1" stroke="#F4A460" stroke-width="1" stroke-dasharray="3 3" stroke-dashoffset="0"/>
<line x1="1387.5" y1="363.3" x2="1387.5" y2="393.2" stroke="#F4A460" stroke-width="1" stroke-dasharray="3 3" stroke-dashoffset="0"/>
<line x1="1395.5" y1="361.9" x2="1395.5" y2="394.3" stroke="#F4A460" stroke-width="1" stroke-dasharray="3 3" stroke-dashoffset="0"/>
<line x1="1403.5" y1="360.4" x2="1403.5" y2="395.0" stroke="#F4A460" stroke-width="1" stroke-dasharray="3 3" stroke-dashoffset="0"/>
<line x1="1411.5" y1="359.1" x2="1411.5" y2="395.0" stroke="#F4A460" stroke-width="1" stroke-dasharray="3 3" stroke-dashoffset="0"/>
<line x1="1419.5" y1="359.0" x2="1419.5" y2="395.0" stroke="#F4A460" stroke-width="1" stroke-dasharray="3 3" stroke-dashoffset="0"/>
<line x1="1427.5" y1="367.0" x2="1427.5" y2="395.0" stroke="#F4A460" stroke-width="1" stroke-dasharray="3 3" stroke-dashoffset="0"/>
<line x1="1435.5" y1="368.7" x2="1435.5" y2="395.0" stroke="#F4A460" stroke-width="1" stroke-dasharray="3 3" stroke-dashoffset="0"/>
<line x1="1443.5" y1="366.7" x2="1443.5" y2="395.0" stroke="#F4A460" stroke-width="1" stroke-dasharray="3 3" stroke-dashoffset="0"/>
<line x1="1451.5" y1="366.0" x2="1451.5" y2="395.0" stroke="#F4A460" stroke-width="1" stroke-dasharray="3 3" stroke-dashoffset="0"/>
<line x1="1459.5" y1="365.3" x2="1459.5" y2="395.0" stroke="#F4A460" stroke-width="1" stroke-dasharray="3 3" stroke-dashoffset="0"/>
<line x1="1467.5" y1="365.4" x2="1467.5" y2="395.4" stroke="#F4A460" stroke-width="1" stroke-dasharray="3 3" stroke-dashoffset="0"/>
<line x1="1475.5" y1="366.2" x2="1475.5" y2="396.2" stroke="#F4A460" stroke-width="1" stroke-dasharray="3 3" stroke-dashoffset="0"/>
<line x1="1483.5" y1="366.9" x2="1483.5" y2="396.7" stroke="#F4A460" stroke-width="1" stroke-dasharray="3 3" stroke-dashoffset="0"/>
<line x1="1491.5" y1="367.3" x2="1491.5" y2="396.7" stroke="#F4A460" stroke-width="1" stroke-dasharray="3 3" stroke-dashoffset="0"/>
<line x1="1499.5" y1="367.7" x2="1499.5" y2="396.7" stroke="#F4A460" stroke-width="1" stroke-dasharray="3 3" stroke-dashoffset="0"/>
<line x1="1507.5" y1="368.3" x2="1507.5" y2="396.7" stroke="#F4A460" stroke-width="1" stroke-dasharray="3 3" stroke-dashoffset="0"/>
<line x1="1515.5" y1="368.8" x2="1515.5" y2="396.7" stroke="#F4A460" stroke-width="1" stroke-dasharray="3 3" stroke-dashoffset="0"/>
<line x1="1523.5" y1="369.3" x2="1523.5" y2="396.5" stroke="#F4A460" stroke-width="1" stroke-dasharray="3 3" stroke-dashoffset="0"/>
<line x1="1531.5" y1="369.9" x2="1531.5" y2="396.3" stroke="#F4A460" stroke-width="1" stroke-dasharray="3 3" stroke-dashoffset="0"/>
<line x1="1539.5" y1="383.0" x2="1539.5" y2="396.1" stroke="#F4A460" stroke-width="1" stroke-dasharray="3 3" stroke-dashoffset="0"/>
<line x1="1547.5" y1="392.3" x2="1547.5" y2="396.1" stroke="#F4A460" stroke-width="1" stroke-dasharray="3 3" stroke-dashoffset="0"/>
<line x1="1555.5" y1="394.5" x2="1555.5" y2="396.5" stroke="#F4A460" stroke-width="1" stroke-dasharray="3 3" stroke-dashoffset="0"/>
<line x1="1563.5" y1="394.5" x2="1563.5" y2="396.9" stroke="#F4A460" stroke-width="1" stroke-dasharray="3 3" stroke-dashoffset="0"/>
<polyline points="1378.0,365.0 1405.0,360.0 1418.0,358.0 1430.0,370.0 1443.0,366.7 1463.0,365.0 1480.0,366.7 1500.0,367.8 1533.0,370.0 1539.0,383.0 1546.0,392.0 1555.0,394.5 1565.6,394.5 1579.0,397.0" fill="none" stroke="#F4A460" stroke-width="1" stroke-dasharray="3 3"/>
<polyline points="1378.0,392.0 1400.0,395.0 1463.0,395.0 1480.0,396.7 1513.0,396.7 1544.0,396.0 1565.0,397.0 1579.0,397.0" fill="none" stroke="#D8BFD8" stroke-width="1" stroke-dasharray="3 3"/>
<line x1="1587.5" y1="390.4" x2="1587.5" y2="404.6" stroke="#D8BFD8" stroke-width="1" stroke-dasharray="3 3" stroke-dashoffset="0"/>
<line x1="1595.5" y1="385.6" x2="1595.5" y2="406.5" stroke="#D8BFD8" stroke-width="1" stroke-dasharray="3 3" stroke-dashoffset="0"/>
<line x1="1603.5" y1="378.5" x2="1603.5" y2="408.0" stroke="#D8BFD8" stroke-width="1" stroke-dasharray="3 3" stroke-dashoffset="0"/>
<line x1="1611.5" y1="370.6" x2="1611.5" y2="407.5" stroke="#D8BFD8" stroke-width="1" stroke-dasharray="3 3" stroke-dashoffset="0"/>
<line x1="1619.5" y1="369.9" x2="1619.5" y2="407.1" stroke="#D8BFD8" stroke-width="1" stroke-dasharray="3 3" stroke-dashoffset="0"/>
<polyline points="1579.0,396.0 1587.5,390.0 1596.0,385.0 1605.0,376.6 1611.6,370.0 1651.0,369.6" fill="none" stroke="#D8BFD8" stroke-width="1" stroke-dasharray="3 3"/>
<polyline points="1579.0,398.0 1587.5,405.0 1603.0,408.0 1620.0,407.0 1651.0,407.0" fill="none" stroke="#F4A460" stroke-width="1" stroke-dasharray="3 3"/>
<polyline points="3.0,446.0 20.0,446.0 27.0,469.0 82.5,469.0 91.0,497.5 142.0,497.5 244.0,500.0 251.0,485.0 275.0,485.0 282.5,471.0 306.0,471.0 315.0,490.0 322.5,495.0 345.0,496.0 355.0,504.0 370.0,505.0 400.0,514.7 435.6,517.5 443.0,525.0 467.5,525.0 475.6,547.5 499.4,547.5 507.5,571.0 531.0,571.0 539.0,614.0 563.0,614.0 571.0,647.5 630.0,647.5 635.0,649.0 659.5,649.0 667.5,655.0 691.0,655.0 699.5,662.5 723.0,662.5 731.0,638.8 756.0,638.8 762.5,636.8 787.5,636.0 794.5,632.5 819.5,632.5 827.0,623.8 884.0,623.8 891.0,614.0 915.5,614.0 923.0,584.5 947.5,584.5 955.0,574.5 984.0,574.5 1076.0,575.0 1084.0,555.0 1107.5,552.5 1111.0,487.5 1115.6,486.0 1139.0,486.0 1147.0,465.6 1171.0,465.0 1179.0,436.0 1204.0,435.6 1211.0,423.0 1867.0,423.0" fill="none" stroke="#ffff00" stroke-width="1"/>
<polyline points="3.0,521.5 531.0,521.5 539.4,482.5 563.8,482.5 572.0,515.6 1012.5,515.6 1019.0,517.5 1041.0,517.5 1050.0,523.0 1107.5,523.0 1113.0,461.0 1115.6,437.0 1139.0,436.0 1146.0,416.0 1174.0,415.6 1178.0,386.0 1205.0,386.0 1210.0,365.0 1230.0,362.0 1267.0,362.0 1275.0,350.0 1300.0,350.0 1307.0,335.0 1331.0,335.0 1336.0,300.0 1337.0,273.0 1363.0,273.0 1371.0,252.0 1395.0,252.0 1403.0,243.0 1428.0,243.0 1437.0,263.0 1460.0,263.0 1467.0,298.0 1492.0,298.0 1500.0,313.0 1524.0,314.0 1531.7,320.0 1555.8,320.0 1563.4,333.0 1587.5,333.0 1595.0,342.0 1620.0,342.0 1627.0,345.0 1652.0,345.0 1659.7,369.6 1715.5,369.6 1723.0,361.0 1780.0,361.0 1787.7,366.0 1843.5,365.0 1851.0,351.4 1867.0,351.4" fill="none" stroke="#ffff00" stroke-width="1"/>
<path d="M578 58h2v2h-2zM586 58h2v2h-2zM594 58h2v2h-2zM602 58h2v2h-2zM610 58h2v2h-2zM618 58h2v2h-2zM626 58h2v2h-2zM634 58h2v2h-2zM642 58h2v2h-2zM650 58h2v2h-2zM658 58h2v2h-2zM666 58h2v2h-2zM674 58h2v2h-2zM682 58h2v2h-2zM690 58h2v2h-2zM698 58h2v2h-2zM706 58h2v2h-2zM714 58h2v2h-2zM722 58h2v2h-2zM730 58h2v2h-2zM738 58h2v2h-2zM746 58h2v2h-2zM754 58h2v2h-2z" fill="#AFEEEE"/>
<path d="M763 203h2v2h-2zM771 203h2v2h-2zM779 203h2v2h-2zM787 203h2v2h-2zM795 203h2v2h-2zM803 203h2v2h-2zM811 203h2v2h-2zM819 203h2v2h-2zM827 203h2v2h-2zM835 203h2v2h-2zM843 203h2v2h-2zM851 203h2v2h-2zM859 203h2v2h-2zM867 203h2v2h-2zM875 203h2v2h-2zM883 203h2v2h-2zM891 203h2v2h-2zM899 203h2v2h-2zM907 203h2v2h-2zM915 203h2v2h-2zM923 203h2v2h-2zM931 203h2v2h-2zM939 203h2v2h-2zM947 203h2v2h-2z" fill="#AFEEEE"/>
<path d="M281 447h2v2h-2zM289 447h2v2h-2zM297 447h2v2h-2zM305 447h2v2h-2zM313 447h2v2h-2zM321 447h2v2h-2zM329 447h2v2h-2zM337 447h2v2h-2zM345 447h2v2h-2zM353 447h2v2h-2zM361 447h2v2h-2zM369 447h2v2h-2z" fill="#AFEEEE"/>
<path d="M1251 319h2v2h-2zM1259 319h2v2h-2zM1267 319h2v2h-2zM1275 319h2v2h-2zM1283 319h2v2h-2zM1291 319h2v2h-2zM1299 319h2v2h-2zM1307 319h2v2h-2zM1315 319h2v2h-2zM1323 319h2v2h-2zM1331 319h2v2h-2zM1339 319h2v2h-2zM1347 319h2v2h-2zM1355 319h2v2h-2zM1363 319h2v2h-2z" fill="#AFEEEE"/>
<path d="M1470 319h2v2h-2zM1478 319h2v2h-2zM1486 319h2v2h-2zM1494 319h2v2h-2zM1502 319h2v2h-2z" fill="#AFEEEE"/>
<path d="M962 378h2v2h-2zM970 378h2v2h-2zM978 378h2v2h-2zM986 378h2v2h-2zM994 378h2v2h-2zM1002 378h2v2h-2zM1010 378h2v2h-2zM1018 378h2v2h-2zM1026 378h2v2h-2zM1034 378h2v2h-2zM1042 378h2v2h-2zM1050 378h2v2h-2zM1058 378h2v2h-2zM1066 378h2v2h-2zM1074 378h2v2h-2zM1082 378h2v2h-2zM1090 378h2v2h-2zM1098 378h2v2h-2zM1106 378h2v2h-2z" fill="#AFEEEE"/>
<path d="M850 519h2v2h-2zM858 519h2v2h-2zM866 519h2v2h-2zM874 519h2v2h-2zM882 519h2v2h-2zM890 519h2v2h-2zM898 519h2v2h-2zM906 519h2v2h-2zM914 519h2v2h-2zM922 519h2v2h-2zM930 519h2v2h-2zM938 519h2v2h-2zM946 519h2v2h-2z" fill="#fff"/>
<path d="M1010 541h2v2h-2zM1018 541h2v2h-2zM1026 541h2v2h-2zM1034 541h2v2h-2zM1042 541h2v2h-2zM1050 541h2v2h-2zM1058 541h2v2h-2zM1066 541h2v2h-2zM1074 541h2v2h-2zM1082 541h2v2h-2zM1090 541h2v2h-2zM1098 541h2v2h-2zM1106 541h2v2h-2z" fill="#fff"/>
<path d="M19 776h2v2h-2zM27 776h2v2h-2zM35 776h2v2h-2zM43 776h2v2h-2zM51 776h2v2h-2zM59 776h2v2h-2zM67 776h2v2h-2zM75 776h2v2h-2zM83 776h2v2h-2zM91 776h2v2h-2zM99 776h2v2h-2zM107 776h2v2h-2zM115 776h2v2h-2zM123 776h2v2h-2zM131 776h2v2h-2zM139 776h2v2h-2zM147 776h2v2h-2zM155 776h2v2h-2zM163 776h2v2h-2zM171 776h2v2h-2zM179 776h2v2h-2z" fill="#fff"/>
<path d="M389 569h2v2h-2zM397 569h2v2h-2zM405 569h2v2h-2zM413 569h2v2h-2zM421 569h2v2h-2zM429 569h2v2h-2zM437 569h2v2h-2zM445 569h2v2h-2zM453 569h2v2h-2zM461 569h2v2h-2zM469 569h2v2h-2zM477 569h2v2h-2zM485 569h2v2h-2zM493 569h2v2h-2zM501 569h2v2h-2zM509 569h2v2h-2zM517 569h2v2h-2zM525 569h2v2h-2zM533 569h2v2h-2zM541 569h2v2h-2zM549 569h2v2h-2zM557 569h2v2h-2z" fill="#FFE0F0"/>
<path d="M1115 422h2v2h-2zM1123 422h2v2h-2zM1131 422h2v2h-2zM1139 422h2v2h-2zM1147 422h2v2h-2zM1155 422h2v2h-2zM1163 422h2v2h-2zM1171 422h2v2h-2zM1179 422h2v2h-2zM1187 422h2v2h-2zM1195 422h2v2h-2zM1203 422h2v2h-2zM1211 422h2v2h-2zM1219 422h2v2h-2zM1227 422h2v2h-2zM1235 422h2v2h-2zM1243 422h2v2h-2zM1251 422h2v2h-2zM1259 422h2v2h-2zM1267 422h2v2h-2z" fill="#fff"/>
<path d="M1452 457h2v2h-2zM1460 457h2v2h-2z" fill="#fff"/>
<line x1="1215" y1="278" x2="1505" y2="278" stroke="#AFEEEE" stroke-width="1" stroke-dasharray="2 4"/>
<circle cx="75" cy="532.5" r="4" fill="none" stroke="#ff0000" stroke-width="1.2" shape-rendering="auto"/><rect x="73.5" y="531" width="3" height="3" fill="#ff0000"/>
<circle cx="115" cy="535" r="4" fill="none" stroke="#ff0000" stroke-width="1.2" shape-rendering="auto"/><rect x="113.5" y="533.5" width="3" height="3" fill="#ff0000"/>
<circle cx="147.5" cy="530" r="4" fill="none" stroke="#ff0000" stroke-width="1.2" shape-rendering="auto"/><rect x="146" y="528.5" width="3" height="3" fill="#ff0000"/>
<circle cx="155.5" cy="530.5" r="4" fill="none" stroke="#ff0000" stroke-width="1.2" shape-rendering="auto"/><rect x="154" y="529" width="3" height="3" fill="#ff0000"/>
<circle cx="164" cy="516" r="4" fill="none" stroke="#ff0000" stroke-width="1.2" shape-rendering="auto"/><rect x="162.5" y="514.5" width="3" height="3" fill="#ff0000"/>
<circle cx="171" cy="512.5" r="4" fill="none" stroke="#ff0000" stroke-width="1.2" shape-rendering="auto"/><rect x="169.5" y="511" width="3" height="3" fill="#ff0000"/>
<circle cx="211" cy="505" r="4" fill="none" stroke="#ff0000" stroke-width="1.2" shape-rendering="auto"/><rect x="209.5" y="503.5" width="3" height="3" fill="#ff0000"/>
<circle cx="219.5" cy="494" r="4" fill="none" stroke="#ff0000" stroke-width="1.2" shape-rendering="auto"/><rect x="218" y="492.5" width="3" height="3" fill="#ff0000"/>
<circle cx="243" cy="489" r="4" fill="none" stroke="#ff0000" stroke-width="1.2" shape-rendering="auto"/><rect x="241.5" y="487.5" width="3" height="3" fill="#ff0000"/>
<circle cx="251" cy="468" r="4" fill="none" stroke="#ff0000" stroke-width="1.2" shape-rendering="auto"/><rect x="249.5" y="466.5" width="3" height="3" fill="#ff0000"/>
<circle cx="259" cy="462.5" r="4" fill="none" stroke="#ff0000" stroke-width="1.2" shape-rendering="auto"/><rect x="257.5" y="461" width="3" height="3" fill="#ff0000"/>
<circle cx="275" cy="454" r="4" fill="none" stroke="#ff0000" stroke-width="1.2" shape-rendering="auto"/><rect x="273.5" y="452.5" width="3" height="3" fill="#ff0000"/>
<circle cx="283" cy="454" r="4" fill="none" stroke="#ff0000" stroke-width="1.2" shape-rendering="auto"/><rect x="281.5" y="452.5" width="3" height="3" fill="#ff0000"/>
<circle cx="443" cy="344.5" r="4" fill="none" stroke="#ff0000" stroke-width="1.2" shape-rendering="auto"/><rect x="441.5" y="343" width="3" height="3" fill="#ff0000"/>
<circle cx="451" cy="337" r="4" fill="none" stroke="#ff0000" stroke-width="1.2" shape-rendering="auto"/><rect x="449.5" y="335.5" width="3" height="3" fill="#ff0000"/>
<circle cx="459" cy="270" r="4" fill="none" stroke="#ff0000" stroke-width="1.2" shape-rendering="auto"/><rect x="457.5" y="268.5" width="3" height="3" fill="#ff0000"/>
<circle cx="467.5" cy="226" r="4" fill="none" stroke="#ff0000" stroke-width="1.2" shape-rendering="auto"/><rect x="466" y="224.5" width="3" height="3" fill="#ff0000"/>
<circle cx="475" cy="164.5" r="4" fill="none" stroke="#ff0000" stroke-width="1.2" shape-rendering="auto"/><rect x="473.5" y="163" width="3" height="3" fill="#ff0000"/>
<circle cx="515.5" cy="106" r="4" fill="none" stroke="#ff0000" stroke-width="1.2" shape-rendering="auto"/><rect x="514" y="104.5" width="3" height="3" fill="#ff0000"/>
<circle cx="531.5" cy="98" r="4" fill="none" stroke="#ff0000" stroke-width="1.2" shape-rendering="auto"/><rect x="530" y="96.5" width="3" height="3" fill="#ff0000"/>
<circle cx="563.5" cy="50" r="4" fill="none" stroke="#ff0000" stroke-width="1.2" shape-rendering="auto"/><rect x="562" y="48.5" width="3" height="3" fill="#ff0000"/>
<circle cx="691" cy="141.5" r="4" fill="none" stroke="#ff0000" stroke-width="1.2" shape-rendering="auto"/><rect x="689.5" y="140" width="3" height="3" fill="#ff0000"/>
<circle cx="707.5" cy="224.5" r="4" fill="none" stroke="#ff0000" stroke-width="1.2" shape-rendering="auto"/><rect x="706" y="223" width="3" height="3" fill="#ff0000"/>
<circle cx="715.5" cy="224.5" r="4" fill="none" stroke="#ff0000" stroke-width="1.2" shape-rendering="auto"/><rect x="714" y="223" width="3" height="3" fill="#ff0000"/>
<circle cx="724" cy="237" r="4" fill="none" stroke="#ff0000" stroke-width="1.2" shape-rendering="auto"/><rect x="722.5" y="235.5" width="3" height="3" fill="#ff0000"/>
<circle cx="716" cy="223" r="4" fill="none" stroke="#ff0000" stroke-width="1.2" shape-rendering="auto"/><rect x="714.5" y="221.5" width="3" height="3" fill="#ff0000"/>
<circle cx="764" cy="251" r="4" fill="none" stroke="#ff0000" stroke-width="1.2" shape-rendering="auto"/><rect x="762.5" y="249.5" width="3" height="3" fill="#ff0000"/>
<circle cx="771" cy="245" r="4" fill="none" stroke="#ff0000" stroke-width="1.2" shape-rendering="auto"/><rect x="769.5" y="243.5" width="3" height="3" fill="#ff0000"/>
<circle cx="779.5" cy="251" r="4" fill="none" stroke="#ff0000" stroke-width="1.2" shape-rendering="auto"/><rect x="778" y="249.5" width="3" height="3" fill="#ff0000"/>
<circle cx="787.5" cy="294.5" r="4" fill="none" stroke="#ff0000" stroke-width="1.2" shape-rendering="auto"/><rect x="786" y="293" width="3" height="3" fill="#ff0000"/>
<circle cx="795.5" cy="335" r="4" fill="none" stroke="#ff0000" stroke-width="1.2" shape-rendering="auto"/><rect x="794" y="333.5" width="3" height="3" fill="#ff0000"/>
<circle cx="804" cy="367" r="4" fill="none" stroke="#ff0000" stroke-width="1.2" shape-rendering="auto"/><rect x="802.5" y="365.5" width="3" height="3" fill="#ff0000"/>
<circle cx="811" cy="387.5" r="4" fill="none" stroke="#ff0000" stroke-width="1.2" shape-rendering="auto"/><rect x="809.5" y="386" width="3" height="3" fill="#ff0000"/>
<circle cx="819" cy="438" r="4" fill="none" stroke="#ff0000" stroke-width="1.2" shape-rendering="auto"/><rect x="817.5" y="436.5" width="3" height="3" fill="#ff0000"/>
<circle cx="843" cy="440" r="4" fill="none" stroke="#ff0000" stroke-width="1.2" shape-rendering="auto"/><rect x="841.5" y="438.5" width="3" height="3" fill="#ff0000"/>
<circle cx="851" cy="440" r="4" fill="none" stroke="#ff0000" stroke-width="1.2" shape-rendering="auto"/><rect x="849.5" y="438.5" width="3" height="3" fill="#ff0000"/>
<circle cx="979" cy="500" r="4" fill="none" stroke="#ff0000" stroke-width="1.2" shape-rendering="auto"/><rect x="977.5" y="498.5" width="3" height="3" fill="#ff0000"/>
<circle cx="1123" cy="356" r="4" fill="none" stroke="#ff0000" stroke-width="1.2" shape-rendering="auto"/><rect x="1121.5" y="354.5" width="3" height="3" fill="#ff0000"/>
<circle cx="1131" cy="343" r="4" fill="none" stroke="#ff0000" stroke-width="1.2" shape-rendering="auto"/><rect x="1129.5" y="341.5" width="3" height="3" fill="#ff0000"/>
<circle cx="1139" cy="343" r="4" fill="none" stroke="#ff0000" stroke-width="1.2" shape-rendering="auto"/><rect x="1137.5" y="341.5" width="3" height="3" fill="#ff0000"/>
<circle cx="1147.5" cy="336" r="4" fill="none" stroke="#ff0000" stroke-width="1.2" shape-rendering="auto"/><rect x="1146" y="334.5" width="3" height="3" fill="#ff0000"/>
<circle cx="1163" cy="339" r="4" fill="none" stroke="#ff0000" stroke-width="1.2" shape-rendering="auto"/><rect x="1161.5" y="337.5" width="3" height="3" fill="#ff0000"/>
<circle cx="1179" cy="334" r="4" fill="none" stroke="#ff0000" stroke-width="1.2" shape-rendering="auto"/><rect x="1177.5" y="332.5" width="3" height="3" fill="#ff0000"/>
<circle cx="1187" cy="334.5" r="4" fill="none" stroke="#ff0000" stroke-width="1.2" shape-rendering="auto"/><rect x="1185.5" y="333" width="3" height="3" fill="#ff0000"/>
<circle cx="1195" cy="322.5" r="4" fill="none" stroke="#ff0000" stroke-width="1.2" shape-rendering="auto"/><rect x="1193.5" y="321" width="3" height="3" fill="#ff0000"/>
<circle cx="1204" cy="296" r="4" fill="none" stroke="#ff0000" stroke-width="1.2" shape-rendering="auto"/><rect x="1202.5" y="294.5" width="3" height="3" fill="#ff0000"/>
<circle cx="1316" cy="405" r="4" fill="none" stroke="#ff0000" stroke-width="1.2" shape-rendering="auto"/><rect x="1314.5" y="403.5" width="3" height="3" fill="#ff0000"/>
<circle cx="1371" cy="411" r="4" fill="none" stroke="#ff0000" stroke-width="1.2" shape-rendering="auto"/><rect x="1369.5" y="409.5" width="3" height="3" fill="#ff0000"/>
<circle cx="1435" cy="447.5" r="4" fill="none" stroke="#ff0000" stroke-width="1.2" shape-rendering="auto"/><rect x="1433.5" y="446" width="3" height="3" fill="#ff0000"/>
<circle cx="1443" cy="448" r="4" fill="none" stroke="#ff0000" stroke-width="1.2" shape-rendering="auto"/><rect x="1441.5" y="446.5" width="3" height="3" fill="#ff0000"/>
<circle cx="1451.5" cy="443" r="4" fill="none" stroke="#ff0000" stroke-width="1.2" shape-rendering="auto"/><rect x="1450" y="441.5" width="3" height="3" fill="#ff0000"/>
<path fill-rule="evenodd" d="M200 597a10 10 0 1 0 20 0a10 10 0 1 0 -20 0ZM206 606.2L214 606.2L214 594.5L216.5 594.5L210 588.5L203.5 594.5L206 594.5Z" fill="#ffff00" shape-rendering="auto"/>
<path fill-rule="evenodd" d="M409 572a10 10 0 1 0 20 0a10 10 0 1 0 -20 0ZM415 581.2L423 581.2L423 569.5L425.5 569.5L419 563.5L412.5 569.5L415 569.5Z" fill="#ffff00" shape-rendering="auto"/>
<path fill-rule="evenodd" d="M882 404a10 10 0 1 0 20 0a10 10 0 1 0 -20 0ZM888 413.2L896 413.2L896 401.5L898.5 401.5L892 395.5L885.5 401.5L888 401.5Z" fill="#ffff00" shape-rendering="auto"/>
<path fill-rule="evenodd" d="M1040 516a10 10 0 1 0 20 0a10 10 0 1 0 -20 0ZM1046 525.2L1054 525.2L1054 513.5L1056.5 513.5L1050 507.5L1043.5 513.5L1046 513.5Z" fill="#ffff00" shape-rendering="auto"/>
<path fill-rule="evenodd" d="M1457 441a10 10 0 1 0 20 0a10 10 0 1 0 -20 0ZM1463 450.2L1471 450.2L1471 438.5L1473.5 438.5L1467 432.5L1460.5 438.5L1463 438.5Z" fill="#ffff00" shape-rendering="auto"/>
<path fill-rule="evenodd" d="M281 419.5a10 10 0 1 0 20 0a10 10 0 1 0 -20 0ZM287 410.3L295 410.3L295 422L297.5 422L291 428L284.5 422L287 422Z" fill="#ff0000" shape-rendering="auto"/>
<path fill-rule="evenodd" d="M193 476a10 10 0 1 0 20 0a10 10 0 1 0 -20 0ZM199 466.8L207 466.8L207 478.5L209.5 478.5L203 484.5L196.5 478.5L199 478.5Z" fill="#ff0000" shape-rendering="auto"/>
<path fill-rule="evenodd" d="M969 326a10 10 0 1 0 20 0a10 10 0 1 0 -20 0ZM975 316.8L983 316.8L983 328.5L985.5 328.5L979 334.5L972.5 328.5L975 328.5Z" fill="#ff0000" shape-rendering="auto"/>
<path fill-rule="evenodd" d="M1249 265a10 10 0 1 0 20 0a10 10 0 1 0 -20 0ZM1255 255.8L1263 255.8L1263 267.5L1265.5 267.5L1259 273.5L1252.5 267.5L1255 267.5Z" fill="#ff0000" shape-rendering="auto"/>
<polyline points="1476.0,400.0 1556.0,357.0" fill="none" stroke="#ff0000" stroke-width="1"/>
<polyline points="1473.0,397.5 1556.0,410.0" fill="none" stroke="#ffff00" stroke-width="1"/>
<polyline points="1483.0,410.5 1555.0,493.0" fill="none" stroke="#32CD32" stroke-width="1"/>
<polyline points="1481.0,414.5 1555.0,531.0" fill="none" stroke="#1E90FF" stroke-width="1"/>
<polyline points="1477.0,400.6 1489.0,388.7 1501.0,369.0 1513.0,345.0 1523.0,315.0 1533.0,283.7 1542.6,250.0 1552.0,205.0 1555.0,193.0" fill="none" stroke="#ff00ff" stroke-width="1"/>
<text x="1558" y="413.5" font-size="13" fill="#fff" text-anchor="start" font-weight="bold" style="font-family:&quot;Liberation Serif&quot;,serif">1</text>
<text x="1558" y="358.5" font-size="13" fill="#fff" text-anchor="start" font-weight="bold" style="font-family:&quot;Liberation Serif&quot;,serif">2</text>
<text x="1558" y="537.5" font-size="13" fill="#fff" text-anchor="start" font-weight="bold" style="font-family:&quot;Liberation Serif&quot;,serif">3</text>
<text x="1558" y="498.5" font-size="13" fill="#fff" text-anchor="start" font-weight="bold" style="font-family:&quot;Liberation Serif&quot;,serif">4</text>
<text x="1558" y="197.5" font-size="13" fill="#fff" text-anchor="start" font-weight="bold" style="font-family:&quot;Liberation Serif&quot;,serif">5</text>
<line x1="1339" y1="17.5" x2="1477" y2="17.5" stroke="#ff0000" stroke-width="1" stroke-dasharray="18 6"/>
<rect x="1307.5" y="2.5" width="32" height="15" fill="none" stroke="#ff0000" stroke-width="1"/>
<text x="1323.5" y="13.5" font-size="10.5" fill="#ff0000" text-anchor="middle" font-weight="normal" style="font-family:&quot;Liberation Sans&quot;,&quot;Noto Sans CJK JP&quot;,sans-serif">LMH</text>
<rect x="1435.5" y="17.5" width="16" height="25" fill="none" stroke="#ff0000" stroke-width="1"/>
<text x="1443.5" y="39" font-size="10.5" fill="#ff0000" text-anchor="middle" font-weight="normal" style="font-family:&quot;Liberation Sans&quot;,&quot;Noto Sans CJK JP&quot;,sans-serif">M</text>
<line x1="1372" y1="59.5" x2="1483" y2="59.5" stroke="#FFA500" stroke-width="1" stroke-dasharray="18 6"/>
<rect x="1339.5" y="35.5" width="32" height="24" fill="none" stroke="#FFA500" stroke-width="1"/>
<text x="1355.5" y="56" font-size="10.5" fill="#FFA500" text-anchor="middle" font-weight="normal" style="font-family:&quot;Liberation Sans&quot;,&quot;Noto Sans CJK JP&quot;,sans-serif">LWH</text>
<line x1="1371" y1="542.5" x2="1483" y2="542.5" stroke="#FFA500" stroke-width="1" stroke-dasharray="18 6"/>
<rect x="1339.5" y="542.5" width="32" height="24" fill="none" stroke="#FFA500" stroke-width="1"/>
<text x="1355.5" y="553.5" font-size="10.5" fill="#FFA500" text-anchor="middle" font-weight="normal" style="font-family:&quot;Liberation Sans&quot;,&quot;Noto Sans CJK JP&quot;,sans-serif">LWL</text>
<line x1="1404" y1="319.5" x2="1451" y2="319.5" stroke="#ffff00" stroke-width="1" stroke-dasharray="18 6"/>
<rect x="1371.5" y="296.5" width="32" height="24" fill="none" stroke="#ffff00" stroke-width="1"/>
<text x="1387.5" y="316.5" font-size="10.5" fill="#ffff00" text-anchor="middle" font-weight="normal" style="font-family:&quot;Liberation Sans&quot;,&quot;Noto Sans CJK JP&quot;,sans-serif">YDH</text>
<rect x="1451.5" y="296.5" width="16" height="24" fill="none" stroke="#FFA500" stroke-width="1"/>
<text x="1459.5" y="316.5" font-size="10.5" fill="#FFA500" text-anchor="middle" font-weight="normal" style="font-family:&quot;Liberation Sans&quot;,&quot;Noto Sans CJK JP&quot;,sans-serif">W</text>
<rect x="1467.5" y="341.5" width="16" height="25" fill="none" stroke="#ffff00" stroke-width="1"/>
<text x="1475.5" y="359" font-size="10.5" fill="#ffff00" text-anchor="middle" font-weight="normal" style="font-family:&quot;Liberation Sans&quot;,&quot;Noto Sans CJK JP&quot;,sans-serif">D</text>
<line x1="1307" y1="340.5" x2="1483" y2="340.5" stroke="#ffffff" stroke-width="1" stroke-dasharray="18 6"/>
<rect x="1276" y="328" width="31" height="24" fill="#000"/>
<rect x="1276.5" y="328.5" width="31" height="24" fill="none" stroke="#ffffff" stroke-width="1"/>
<text x="1292" y="344" font-size="10.5" fill="#ffffff" text-anchor="middle" font-weight="normal" style="font-family:&quot;Liberation Sans&quot;,&quot;Noto Sans CJK JP&quot;,sans-serif">YDO</text>
<line x1="1307" y1="434.5" x2="1483" y2="434.5" stroke="#ffffff" stroke-width="1" stroke-dasharray="18 6"/>
<rect x="1276" y="422" width="31" height="25" fill="#000"/>
<rect x="1276.5" y="422.5" width="31" height="25" fill="none" stroke="#ffffff" stroke-width="1"/>
<text x="1292" y="438.5" font-size="10.5" fill="#ffffff" text-anchor="middle" font-weight="normal" style="font-family:&quot;Liberation Sans&quot;,&quot;Noto Sans CJK JP&quot;,sans-serif">YDC</text>
<line x1="1404" y1="461.5" x2="1451" y2="461.5" stroke="#ffff00" stroke-width="1" stroke-dasharray="18 6"/>
<rect x="1372" y="462" width="31" height="12" fill="#000"/>
<rect x="1371.5" y="461.5" width="32" height="24" fill="none" stroke="#ffff00" stroke-width="1"/>
<text x="1387.5" y="472" font-size="10.5" fill="#ffff00" text-anchor="middle" font-weight="normal" style="font-family:&quot;Liberation Sans&quot;,&quot;Noto Sans CJK JP&quot;,sans-serif">YDL</text>
<rect x="1452" y="461" width="15" height="12" fill="#000"/>
<rect x="1451.5" y="460.5" width="16" height="25" fill="none" stroke="#FFA500" stroke-width="1"/>
<text x="1459.5" y="471" font-size="10.5" fill="#FFA500" text-anchor="middle" font-weight="normal" style="font-family:&quot;Liberation Sans&quot;,&quot;Noto Sans CJK JP&quot;,sans-serif">W</text>
<rect x="1468" y="459" width="15" height="13" fill="#000"/>
<rect x="1467.5" y="458.5" width="16" height="25" fill="none" stroke="#ffff00" stroke-width="1"/>
<text x="1475.5" y="470" font-size="10.5" fill="#ffff00" text-anchor="middle" font-weight="normal" style="font-family:&quot;Liberation Sans&quot;,&quot;Noto Sans CJK JP&quot;,sans-serif">D</text>
<line x1="1486" y1="460.5" x2="1503" y2="460.5" stroke="#ffffff" stroke-width="1" stroke-dasharray="3 3"/>
</g>
<text x="74" y="136" font-size="61.5" fill="#fff" text-anchor="start" font-weight="normal" style="font-family:&quot;Liberation Sans&quot;,&quot;Noto Sans CJK JP&quot;,sans-serif" textLength="326" lengthAdjust="spacingAndGlyphs">USDJPY H1</text>
<text x="17.5" y="13.7" font-size="10.5" fill="#fff" text-anchor="start" font-weight="normal" style="font-family:&quot;Liberation Sans&quot;,&quot;Noto Sans CJK JP&quot;,sans-serif" textLength="198" lengthAdjust="spacingAndGlyphs">USDJPY,H1&#160;&#160;156.259 156.259 156.259 156.259</text>
<text x="9.7" y="89" font-size="10.5" fill="#fff" text-anchor="start" font-weight="normal" style="font-family:&quot;Liberation Sans&quot;,&quot;Noto Sans CJK JP&quot;,sans-serif" textLength="136.5" lengthAdjust="spacingAndGlyphs">Channel size = 977 Slope = 7.37</text>
<text x="1775" y="15.5" font-size="11.5" fill="#fff" text-anchor="start" font-weight="normal" style="font-family:&quot;Liberation Sans&quot;,&quot;Noto Sans CJK JP&quot;,sans-serif" textLength="97" lengthAdjust="spacingAndGlyphs">12/30 06:34 更新</text>
<rect x="2" y="2" width="1872" height="1" fill="#ececec"/>
<rect x="2" y="2" width="1" height="1060" fill="#ececec"/>
<rect x="1874" y="2" width="1" height="1075" fill="#ececec"/>
<rect x="2" y="797" width="1872" height="1" fill="#ececec"/>
<rect x="2" y="800" width="1872" height="1" fill="#ececec"/>
<rect x="2" y="1060" width="1872" height="1" fill="#ececec"/>
<rect x="2" y="1062" width="1872" height="1" fill="#ececec"/>
<rect x="2" y="1076" width="1872" height="1" fill="#ececec"/>
<rect x="1875" y="30" width="3" height="1" fill="#ececec"/>
<text x="1880" y="34.1" font-size="9.6" fill="#fff" text-anchor="start" font-weight="normal" style="font-family:&quot;Liberation Sans&quot;,&quot;Noto Sans CJK JP&quot;,sans-serif" textLength="32" lengthAdjust="spacingAndGlyphs">157.820</text>
<rect x="1875" y="64" width="3" height="1" fill="#ececec"/>
<text x="1880" y="67.79" font-size="9.6" fill="#fff" text-anchor="start" font-weight="normal" style="font-family:&quot;Liberation Sans&quot;,&quot;Noto Sans CJK JP&quot;,sans-serif" textLength="32" lengthAdjust="spacingAndGlyphs">157.670</text>
<rect x="1875" y="96" width="3" height="1" fill="#ececec"/>
<text x="1880" y="100.357" font-size="9.6" fill="#fff" text-anchor="start" font-weight="normal" style="font-family:&quot;Liberation Sans&quot;,&quot;Noto Sans CJK JP&quot;,sans-serif" textLength="32" lengthAdjust="spacingAndGlyphs">157.525</text>
<rect x="1875" y="130" width="3" height="1" fill="#ececec"/>
<text x="1880" y="134.047" font-size="9.6" fill="#fff" text-anchor="start" font-weight="normal" style="font-family:&quot;Liberation Sans&quot;,&quot;Noto Sans CJK JP&quot;,sans-serif" textLength="32" lengthAdjust="spacingAndGlyphs">157.375</text>
<rect x="1875" y="164" width="3" height="1" fill="#ececec"/>
<text x="1880" y="167.737" font-size="9.6" fill="#fff" text-anchor="start" font-weight="normal" style="font-family:&quot;Liberation Sans&quot;,&quot;Noto Sans CJK JP&quot;,sans-serif" textLength="32" lengthAdjust="spacingAndGlyphs">157.225</text>
<rect x="1875" y="196" width="3" height="1" fill="#ececec"/>
<text x="1880" y="200.304" font-size="9.6" fill="#fff" text-anchor="start" font-weight="normal" style="font-family:&quot;Liberation Sans&quot;,&quot;Noto Sans CJK JP&quot;,sans-serif" textLength="32" lengthAdjust="spacingAndGlyphs">157.080</text>
<rect x="1875" y="230" width="3" height="1" fill="#ececec"/>
<text x="1880" y="233.994" font-size="9.6" fill="#fff" text-anchor="start" font-weight="normal" style="font-family:&quot;Liberation Sans&quot;,&quot;Noto Sans CJK JP&quot;,sans-serif" textLength="32" lengthAdjust="spacingAndGlyphs">156.930</text>
<rect x="1875" y="264" width="3" height="1" fill="#ececec"/>
<text x="1880" y="267.684" font-size="9.6" fill="#fff" text-anchor="start" font-weight="normal" style="font-family:&quot;Liberation Sans&quot;,&quot;Noto Sans CJK JP&quot;,sans-serif" textLength="32" lengthAdjust="spacingAndGlyphs">156.780</text>
<rect x="1875" y="296" width="3" height="1" fill="#ececec"/>
<text x="1880" y="300.251" font-size="9.6" fill="#fff" text-anchor="start" font-weight="normal" style="font-family:&quot;Liberation Sans&quot;,&quot;Noto Sans CJK JP&quot;,sans-serif" textLength="32" lengthAdjust="spacingAndGlyphs">156.635</text>
<rect x="1875" y="330" width="3" height="1" fill="#ececec"/>
<text x="1880" y="333.941" font-size="9.6" fill="#fff" text-anchor="start" font-weight="normal" style="font-family:&quot;Liberation Sans&quot;,&quot;Noto Sans CJK JP&quot;,sans-serif" textLength="32" lengthAdjust="spacingAndGlyphs">156.485</text>
<rect x="1875" y="363" width="3" height="1" fill="#ececec"/>
<text x="1880" y="366.508" font-size="9.6" fill="#fff" text-anchor="start" font-weight="normal" style="font-family:&quot;Liberation Sans&quot;,&quot;Noto Sans CJK JP&quot;,sans-serif" textLength="32" lengthAdjust="spacingAndGlyphs">156.340</text>
<rect x="1875" y="395" width="3" height="1" fill="#ececec"/>
<text x="1880" y="399.075" font-size="9.6" fill="#fff" text-anchor="start" font-weight="normal" style="font-family:&quot;Liberation Sans&quot;,&quot;Noto Sans CJK JP&quot;,sans-serif" textLength="32" lengthAdjust="spacingAndGlyphs">156.195</text>
<rect x="1875" y="429" width="3" height="1" fill="#ececec"/>
<text x="1880" y="432.765" font-size="9.6" fill="#fff" text-anchor="start" font-weight="normal" style="font-family:&quot;Liberation Sans&quot;,&quot;Noto Sans CJK JP&quot;,sans-serif" textLength="32" lengthAdjust="spacingAndGlyphs">156.045</text>
<rect x="1875" y="461" width="3" height="1" fill="#ececec"/>
<text x="1880" y="465.332" font-size="9.6" fill="#fff" text-anchor="start" font-weight="normal" style="font-family:&quot;Liberation Sans&quot;,&quot;Noto Sans CJK JP&quot;,sans-serif" textLength="32" lengthAdjust="spacingAndGlyphs">155.900</text>
<rect x="1875" y="495" width="3" height="1" fill="#ececec"/>
<text x="1880" y="499.022" font-size="9.6" fill="#fff" text-anchor="start" font-weight="normal" style="font-family:&quot;Liberation Sans&quot;,&quot;Noto Sans CJK JP&quot;,sans-serif" textLength="32" lengthAdjust="spacingAndGlyphs">155.750</text>
<rect x="1875" y="529" width="3" height="1" fill="#ececec"/>
<text x="1880" y="532.712" font-size="9.6" fill="#fff" text-anchor="start" font-weight="normal" style="font-family:&quot;Liberation Sans&quot;,&quot;Noto Sans CJK JP&quot;,sans-serif" textLength="32" lengthAdjust="spacingAndGlyphs">155.600</text>
<rect x="1875" y="561" width="3" height="1" fill="#ececec"/>
<text x="1880" y="565.279" font-size="9.6" fill="#fff" text-anchor="start" font-weight="normal" style="font-family:&quot;Liberation Sans&quot;,&quot;Noto Sans CJK JP&quot;,sans-serif" textLength="32" lengthAdjust="spacingAndGlyphs">155.455</text>
<rect x="1875" y="595" width="3" height="1" fill="#ececec"/>
<text x="1880" y="598.969" font-size="9.6" fill="#fff" text-anchor="start" font-weight="normal" style="font-family:&quot;Liberation Sans&quot;,&quot;Noto Sans CJK JP&quot;,sans-serif" textLength="32" lengthAdjust="spacingAndGlyphs">155.305</text>
<rect x="1875" y="629" width="3" height="1" fill="#ececec"/>
<text x="1880" y="632.659" font-size="9.6" fill="#fff" text-anchor="start" font-weight="normal" style="font-family:&quot;Liberation Sans&quot;,&quot;Noto Sans CJK JP&quot;,sans-serif" textLength="32" lengthAdjust="spacingAndGlyphs">155.155</text>
<rect x="1875" y="661" width="3" height="1" fill="#ececec"/>
<text x="1880" y="665.226" font-size="9.6" fill="#fff" text-anchor="start" font-weight="normal" style="font-family:&quot;Liberation Sans&quot;,&quot;Noto Sans CJK JP&quot;,sans-serif" textLength="32" lengthAdjust="spacingAndGlyphs">155.010</text>
<rect x="1875" y="695" width="3" height="1" fill="#ececec"/>
<text x="1880" y="698.916" font-size="9.6" fill="#fff" text-anchor="start" font-weight="normal" style="font-family:&quot;Liberation Sans&quot;,&quot;Noto Sans CJK JP&quot;,sans-serif" textLength="32" lengthAdjust="spacingAndGlyphs">154.860</text>
<rect x="1875" y="728" width="3" height="1" fill="#ececec"/>
<text x="1880" y="731.483" font-size="9.6" fill="#fff" text-anchor="start" font-weight="normal" style="font-family:&quot;Liberation Sans&quot;,&quot;Noto Sans CJK JP&quot;,sans-serif" textLength="32" lengthAdjust="spacingAndGlyphs">154.715</text>
<rect x="1875" y="760" width="3" height="1" fill="#ececec"/>
<text x="1880" y="764.05" font-size="9.6" fill="#fff" text-anchor="start" font-weight="normal" style="font-family:&quot;Liberation Sans&quot;,&quot;Noto Sans CJK JP&quot;,sans-serif" textLength="32" lengthAdjust="spacingAndGlyphs">154.570</text>
<rect x="1875" y="794" width="3" height="1" fill="#ececec"/>
<text x="1880" y="797.74" font-size="9.6" fill="#fff" text-anchor="start" font-weight="normal" style="font-family:&quot;Liberation Sans&quot;,&quot;Noto Sans CJK JP&quot;,sans-serif" textLength="32" lengthAdjust="spacingAndGlyphs">154.420</text>
<rect x="1877" y="376.5" width="39" height="10.5" fill="#fff"/>
<text x="1880" y="384.4" font-size="9.6" fill="#000" text-anchor="start" font-weight="normal" style="font-family:&quot;Liberation Sans&quot;,&quot;Noto Sans CJK JP&quot;,sans-serif" textLength="32" lengthAdjust="spacingAndGlyphs">156.259</text>
<text x="1878" y="810" font-size="9.6" fill="#fff" text-anchor="start" font-weight="normal" style="font-family:&quot;Liberation Sans&quot;,&quot;Noto Sans CJK JP&quot;,sans-serif" textLength="22" lengthAdjust="spacingAndGlyphs">0.516</text>
<rect x="1877" y="950" width="5" height="10" fill="#f00"/>
<text x="1878" y="959" font-size="9.6" fill="#fff" text-anchor="start" font-weight="normal" style="font-family:&quot;Liberation Sans&quot;,&quot;Noto Sans CJK JP&quot;,sans-serif" textLength="18" lengthAdjust="spacingAndGlyphs">0.00</text>
<text x="1878" y="1057" font-size="9.6" fill="#fff" text-anchor="start" font-weight="normal" style="font-family:&quot;Liberation Sans&quot;,&quot;Noto Sans CJK JP&quot;,sans-serif" textLength="24" lengthAdjust="spacingAndGlyphs">-0.351</text>
<text x="1878" y="1073" font-size="9.6" fill="#fff" text-anchor="start" font-weight="normal" style="font-family:&quot;Liberation Sans&quot;,&quot;Noto Sans CJK JP&quot;,sans-serif" textLength="29" lengthAdjust="spacingAndGlyphs">130000</text>
<rect x="1875" y="806" width="3" height="1" fill="#ececec"/>
<rect x="1875" y="955" width="3" height="1" fill="#ececec"/>
<rect x="1875" y="1053" width="3" height="1" fill="#ececec"/>
<rect x="1875" y="1069" width="3" height="1" fill="#ececec"/>
<g clip-path="url(#cs)">
<rect x="3" y="955" width="1871" height="1" fill="#ff0000"/>
<polyline points="3.0,982.7 18.0,984.0 27.0,975.0 36.0,970.0 45.0,958.0 55.0,946.7 73.0,920.0 83.0,911.7 92.0,909.0 100.0,903.0 122.0,903.0 130.0,905.7 140.0,904.0 155.0,903.0 177.0,900.7 187.0,903.0 195.0,909.0" fill="none" stroke="#32CD32" stroke-width="2.2" stroke-linejoin="round"/>
<polyline points="195.0,909.0 197.0,910.0 204.0,914.0" fill="none" stroke="#F080A0" stroke-width="2.2" stroke-linejoin="round"/>
<polyline points="204.0,914.0 217.0,909.0 245.0,909.0 253.0,905.7 282.0,905.7" fill="none" stroke="#32CD32" stroke-width="2.2" stroke-linejoin="round"/>
<polyline points="282.0,905.7 298.0,913.0 313.0,926.7 330.0,941.7 343.0,944.0 357.0,949.0 363.0,950.0 373.0,954.0 388.0,955.0 412.0,945.7" fill="none" stroke="#F080A0" stroke-width="2.2" stroke-linejoin="round"/>
<polyline points="412.0,945.7 428.0,932.0 443.0,926.7 455.0,893.0 467.0,866.7 475.0,848.0 483.0,835.0 497.0,824.0 517.0,812.7 530.0,812.7 540.0,814.7 563.0,814.7 572.0,823.0 580.0,826.7 588.0,833.0" fill="none" stroke="#32CD32" stroke-width="2.2" stroke-linejoin="round"/>
<polyline points="588.0,833.0 600.0,848.0 617.0,866.7 633.0,881.7 640.0,886.0 653.0,890.7 667.0,898.0 683.0,907.0 700.0,928.0 720.0,953.0 740.0,966.7 762.0,967.7 773.0,970.7 793.0,996.7 810.0,1023.0 820.0,1034.0 833.0,1038.0 847.0,1044.0 860.0,1047.7 868.0,1047.0 875.0,1044.0 883.0,1033.0" fill="none" stroke="#F080A0" stroke-width="2.2" stroke-linejoin="round"/>
<polyline points="883.0,1033.0 897.0,1016.7 915.0,1001.7 930.0,998.0 940.0,993.0 950.0,990.7 965.0,989.0 972.0,992.0" fill="none" stroke="#32CD32" stroke-width="2.2" stroke-linejoin="round"/>
<polyline points="972.0,992.0 980.0,1001.7 987.0,1006.7 1002.0,1005.7 1017.0,1008.0 1037.0,1007.7 1043.0,1005.0" fill="none" stroke="#F080A0" stroke-width="2.2" stroke-linejoin="round"/>
<polyline points="1043.0,1005.0 1055.0,999.0 1073.0,985.7 1083.0,986.7 1098.0,986.7 1107.0,982.7 1117.0,968.0 1127.0,956.7 1140.0,941.7 1150.0,935.7 1165.0,929.0 1175.0,928.0 1180.0,926.0 1187.0,925.7 1195.0,919.0 1203.0,917.0 1218.0,917.0 1222.0,918.0 1238.0,918.0 1243.0,920.0 1252.0,922.0" fill="none" stroke="#32CD32" stroke-width="2.2" stroke-linejoin="round"/>
<polyline points="1252.0,922.0 1260.0,930.0 1268.0,935.0 1280.0,936.7 1290.0,938.7 1300.0,944.0 1315.0,955.7 1340.0,955.7 1347.0,952.7 1357.0,952.7 1370.0,959.0 1380.0,968.0 1387.0,969.0 1405.0,968.0 1420.0,973.0 1427.0,974.0 1437.0,976.7 1445.0,976.7 1452.0,972.0 1460.0,969.0" fill="none" stroke="#F080A0" stroke-width="2.2" stroke-linejoin="round"/>
<polyline points="1460.0,969.0 1467.0,964.0 1475.0,961.7" fill="none" stroke="#32CD32" stroke-width="2.2" stroke-linejoin="round"/>
<polyline points="3.0,990.0 27.0,987.7 43.0,981.7 63.0,970.0 83.0,953.0 100.0,941.7 117.0,931.7 133.0,924.0 153.0,918.0 177.0,912.7 200.0,911.0 233.0,910.0 267.0,908.0 287.0,908.0 307.0,910.7 330.0,919.0 353.0,928.0 373.0,936.0 393.0,940.0 417.0,941.7 433.0,940.0 450.0,935.0 467.0,920.0 480.0,903.0 500.0,880.0 520.0,860.0 540.0,846.7 563.0,836.7 580.0,833.0 597.0,835.0 617.0,843.0 640.0,856.7 660.0,868.0 683.0,880.0 707.0,895.0 727.0,913.0 750.0,931.7 783.0,950.0 807.0,971.7 830.0,991.7 850.0,1006.7 873.0,1020.0 887.0,1023.0 907.0,1019.0 930.0,1013.0 957.0,1005.0 973.0,1001.7 1007.0,1003.0 1037.0,1005.7 1060.0,1003.0 1083.0,997.7 1107.0,993.0 1127.0,985.0 1153.0,968.0 1173.0,956.0 1193.0,946.7 1213.0,937.0 1233.0,931.7 1253.0,928.0 1280.0,930.7 1300.0,932.7 1320.0,940.0 1347.0,945.0 1370.0,949.0 1390.0,955.0 1413.0,960.0 1437.0,965.0 1453.0,967.0 1475.0,966.7" fill="none" stroke="#ffffe0" stroke-width="1" stroke-dasharray="3 3"/>
</g>
<text x="7" y="811.5" font-size="9.6" fill="#fff" text-anchor="start" font-weight="normal" style="font-family:&quot;Liberation Sans&quot;,&quot;Noto Sans CJK JP&quot;,sans-serif" textLength="58" lengthAdjust="spacingAndGlyphs">H1&#160;&#160;macd (12)</text>
<rect x="3" y="1064" width="8" height="12" fill="#800080"/>
<rect x="11" y="1064" width="32" height="12" fill="#2f2f2f"/>
<rect x="43" y="1064" width="8" height="12" fill="#006400"/>
<rect x="51" y="1064" width="72" height="12" fill="#8B0000"/>
<rect x="123" y="1064" width="40" height="12" fill="#00008B"/>
<rect x="163" y="1064" width="40" height="12" fill="#800080"/>
<rect x="203" y="1064" width="32" height="12" fill="#2f2f2f"/>
<rect x="235" y="1064" width="8" height="12" fill="#006400"/>
<rect x="243" y="1064" width="72" height="12" fill="#8B0000"/>
<rect x="315" y="1064" width="40" height="12" fill="#00008B"/>
<rect x="355" y="1064" width="8" height="12" fill="#800080"/>
<text x="29.5" y="1074.5" font-size="10.5" fill="#fff" text-anchor="start" font-weight="bold" style="font-family:&quot;Liberation Sans&quot;,&quot;Noto Sans CJK JP&quot;,sans-serif" textLength="26.5" lengthAdjust="spacingAndGlyphs">12/29</text>
<text x="222" y="1074.5" font-size="10.5" fill="#fff" text-anchor="start" font-weight="bold" style="font-family:&quot;Liberation Sans&quot;,&quot;Noto Sans CJK JP&quot;,sans-serif" textLength="26.5" lengthAdjust="spacingAndGlyphs">12/30</text>
<clipPath id="cb"><rect x="900" y="1064" width="80" height="12"/></clipPath>
<rect x="904" y="1064" width="63" height="12" fill="#808080"/>
<g clip-path="url(#cb)">
<text x="907" y="1079" font-size="12" fill="#00ff00" text-anchor="start" font-weight="normal" style="font-family:&quot;Liberation Sans&quot;,&quot;Noto Sans CJK JP&quot;,sans-serif" textLength="55" lengthAdjust="spacingAndGlyphs">macd ON</text>
</g>
</svg>
</body></html>
